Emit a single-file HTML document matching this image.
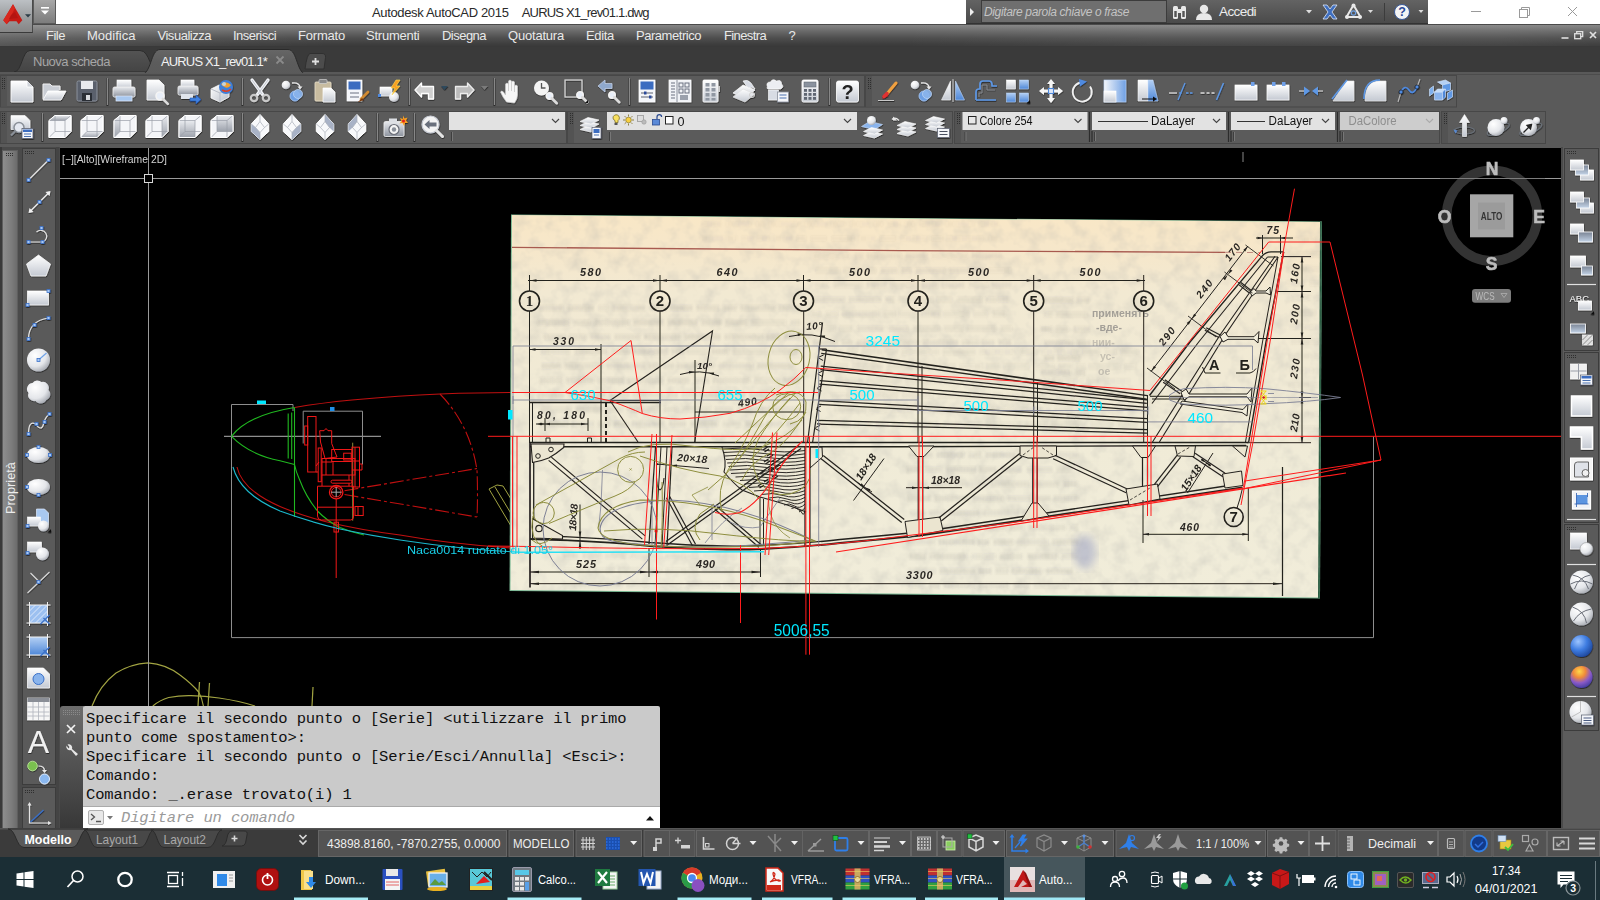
<!DOCTYPE html><html><head><meta charset="utf-8"><title>AutoCAD</title><style>html,body{margin:0;padding:0;background:#000}body{width:1600px;height:900px;position:relative;overflow:hidden;font-family:"Liberation Sans",sans-serif}svg{display:block}svg text{white-space:pre}</style></head><body>
<svg style="position:absolute;left:59px;top:147px" width="1502" height="681" viewBox="59 147 1502 681">
<rect x="59" y="147" width="1502" height="681" fill="#000"/>
<path d="M293 411 L293 404.5 L231.5 404.5 L231.5 637.6 L1373.5 637.6 L1373.5 436.5" fill="none" stroke="#8e8e8e" stroke-width="1" />
<path d="M224 436.3 L381 436.3" fill="none" stroke="#8e8e8e" stroke-width="1.2" />
<path d="M303.2 443.5 L303.2 411.2 L362.5 411.2 L362.5 464.5" fill="none" stroke="#8e8e8e" stroke-width="1" />
<path d="M1243 152 L1243 162" fill="none" stroke="#888" stroke-width="1" />
<path d="M294.500 407.500 Q320 403 352 400 Q400 395.500 440 394 Q480 392.500 512 392.500" fill="none" stroke="#c01010" stroke-width="1.1" />
<path d="M237 467 Q242 490 280 506.500 Q300 515 325 521.500 Q360 530 400 535 Q450 544 512 548" fill="none" stroke="#c01010" stroke-width="1.1" />
<path d="M440 394 Q470 425 477 470 Q478 495 477 517" fill="none" stroke="#c01010" stroke-width="1.1" stroke-dasharray="14 3 3 3"/>
<path d="M344.5 490.7 L477 468.5" fill="none" stroke="#c01010" stroke-width="1.1" stroke-dasharray="14 3 3 3"/>
<path d="M344.5 494.5 L477 517" fill="none" stroke="#c01010" stroke-width="1.1" stroke-dasharray="14 3 3 3"/>
<path d="M231.500 436.300 Q248 415 294.500 407.500 M231.500 436.300 Q250 455 280 460.700 L294.500 464.500" fill="none" stroke="#20b820" stroke-width="1.1" />
<path d="M288.2 413.5 L288.2 458.5" fill="none" stroke="#20b820" stroke-width="1.1" />
<path d="M291.7 412.5 L291.7 459" fill="none" stroke="#20b820" stroke-width="1.1" />
<path d="M294.5 407.5 L294.5 517" fill="none" stroke="#20b820" stroke-width="1.1" />
<path d="M294.500 464.500 Q296 472 299.500 479.500 Q306 497 317.500 511 Q327 521 340 527.500 Q352 532.500 364 535" fill="none" stroke="#20b820" stroke-width="1.1" />
<path d="M352.7 442.7 L352.7 520.7" fill="none" stroke="#8a8a38" stroke-width="1" />
<rect x="307.7" y="416.5" width="8.3" height="55.5" rx="0" fill="none" stroke="#f01818" stroke-width="1"/>
<rect x="304.7" y="426" width="3" height="19" rx="0" fill="none" stroke="#f01818" stroke-width="1"/>
<path d="M319.700 430.700 L324 430.700 L326 428.500 L328 430.700 L331.700 430.700 L331.700 443.500 L337 457 L325 458.500 L320.500 442Z" fill="none" stroke="#f01818" stroke-width="1" />
<rect x="318.2" y="448" width="3" height="33.7" rx="0" fill="none" stroke="#f01818" stroke-width="1"/>
<rect x="322" y="458.5" width="33" height="16.5" rx="0" fill="none" stroke="#f01818" stroke-width="1"/>
<rect x="331.7" y="449.5" width="20.3" height="12" rx="0" fill="none" stroke="#f01818" stroke-width="1"/>
<rect x="343.7" y="453.2" width="7.5" height="6.8" rx="0" fill="none" stroke="#f01818" stroke-width="1"/>
<rect x="352" y="447.2" width="7.5" height="39.8" rx="0" fill="none" stroke="#f01818" stroke-width="1"/>
<path d="M359.500 464 h2.500 v6 h-2.500 M355 447.200 v40 M352 461 h7.500 M352 470 h7.500" fill="none" stroke="#f01818" stroke-width="1" />
<path d="M316 466 l3 -4 M316 472 h2 M326 475 v-16 M333 475 v-14 M322 462 h10" fill="none" stroke="#f01818" stroke-width="1" />
<rect x="331" y="480.2" width="21" height="3" rx="1.5" fill="none" stroke="#f01818" stroke-width="1"/>
<path d="M322 475 v11 M349 475 v5 M349 483.200 v3" fill="none" stroke="#f01818" stroke-width="1" />
<path d="M317.500 486.200 H353.500 V517 Q353.500 520 350.500 520 H321.500 Q317.500 520 317.500 516Z" fill="none" stroke="#f01818" stroke-width="1" />
<path d="M317.5 507.2 L353.5 507.2" fill="none" stroke="#f01818" stroke-width="1" />
<circle cx="336.200" cy="492.200" r="6.700" fill="none" stroke="#f01818" stroke-width="1.300"/><circle cx="336.200" cy="492.200" r="4.800" fill="none" stroke="#f01818" stroke-width="1"/>
<path d="M331 492.200 h10.500 M336.200 487 v10" fill="none" stroke="#a8a8a8" stroke-width="1" />
<rect x="355" y="506.5" width="8.2" height="9" rx="0" fill="none" stroke="#f01818" stroke-width="1"/>
<path d="M358 506.500 v9" fill="none" stroke="#f01818" stroke-width="1" />
<rect x="334" y="522.2" width="4.5" height="9.8" rx="0" fill="none" stroke="#f01818" stroke-width="1"/>
<path d="M336.2 499 L336.2 578" fill="none" stroke="#f01818" stroke-width="1" />
<rect x="257" y="400.500" width="9" height="3.500" fill="#00e8ff"/><rect x="330" y="407" width="4.500" height="4" fill="#2090e8"/>
<path d="M495 487 L530 545 M489 489 L497 485 L503 486 L535 538 M489 489 L524 548" fill="none" stroke="#a2a442" stroke-width="1" />
<path d="M522 520 Q512 530 520 542" fill="none" stroke="#a2a442" stroke-width="1" />
<path d="M92 706 Q100 685 116 673 Q130 664 148 662.800 Q166 664 180 675 Q192 684 198.700 692 Q202 698 203.400 706" fill="none" stroke="#a2a442" stroke-width="1.2" />
<path d="M152.800 706 Q160 700 168.700 697.500 Q180 695.300 191 695.600 Q205 696 219 698 Q240 701 255 706" fill="none" stroke="#a2a442" stroke-width="1.2" />
<path d="M199.5 682 L198 706" fill="none" stroke="#a2a442" stroke-width="1.2" />
<path d="M209.5 683 L208 706" fill="none" stroke="#a2a442" stroke-width="1.2" />
<path d="M313 687 L312 706" fill="none" stroke="#a2a442" stroke-width="1.2" />
<defs><linearGradient id="paper" x1="0" y1="0" x2="0" y2="1"><stop offset="0" stop-color="#f9e7c6"/><stop offset=".09" stop-color="#f6e7ca"/><stop offset=".2" stop-color="#f2e9d2"/><stop offset=".6" stop-color="#f0ebd7"/><stop offset="1" stop-color="#f1edda"/></linearGradient><filter id="blur2"><feGaussianBlur stdDeviation="0.8"/></filter><filter id="soft" x="0" y="0" width="100%" height="100%" filterUnits="userSpaceOnUse"><feGaussianBlur stdDeviation="0.38"/></filter><filter id="mottle" x="510" y="214" width="812" height="386" filterUnits="userSpaceOnUse"><feTurbulence type="fractalNoise" baseFrequency="0.07" numOctaves="3" seed="7"/><feColorMatrix type="matrix" values="0 0 0 0 0.42  0 0 0 0 0.42  0 0 0 0 0.40  0.55 0 0 0 -0.225"/></filter><filter id="blur1"><feGaussianBlur stdDeviation="0.5"/></filter><filter id="blur5"><feGaussianBlur stdDeviation="4"/></filter><clipPath id="scanclip"><path d="M512 215 L1321.500 222 L1319.500 598 L510 590.500Z"/></clipPath></defs>
<path d="M511 214.500 L1322 221.500 L1320 598.500 L509.500 591Z" fill="#7ab894"/>
<path d="M512 215 L1321 222 L1319 597.500 L510.500 590Z" fill="url(#paper)"/>
<path d="M1320 221.800 L1321.800 221.800 L1319.800 598.300 L1318 598.300Z" fill="#2a5c42"/>
<g clip-path="url(#scanclip)">
<rect x="510" y="214" width="812" height="386" filter="url(#mottle)"/>
<g filter="url(#blur2)"><path d="M539 308.0 h24" stroke="#55555e" stroke-width="5.500" stroke-dasharray="2 1.300" opacity="0.11"/><path d="M568 308.0 h26" stroke="#55555e" stroke-width="5.500" stroke-dasharray="2 1.300" opacity="0.13"/><path d="M599 308.0 h10" stroke="#55555e" stroke-width="5.500" stroke-dasharray="2 1.300" opacity="0.08"/><path d="M613 308.0 h33" stroke="#55555e" stroke-width="5.500" stroke-dasharray="2 1.300" opacity="0.10"/><path d="M651 308.0 h15" stroke="#55555e" stroke-width="5.500" stroke-dasharray="2 1.300" opacity="0.16"/><path d="M670 308.0 h22" stroke="#55555e" stroke-width="5.500" stroke-dasharray="2 1.300" opacity="0.14"/><path d="M697 308.0 h22" stroke="#55555e" stroke-width="5.500" stroke-dasharray="2 1.300" opacity="0.13"/><path d="M724 308.0 h13" stroke="#55555e" stroke-width="5.500" stroke-dasharray="2 1.300" opacity="0.13"/><path d="M741 308.0 h34" stroke="#55555e" stroke-width="5.500" stroke-dasharray="2 1.300" opacity="0.12"/><path d="M779 308.0 h21" stroke="#55555e" stroke-width="5.500" stroke-dasharray="2 1.300" opacity="0.13"/><path d="M538 322.5 h31" stroke="#55555e" stroke-width="5.500" stroke-dasharray="2 1.300" opacity="0.13"/><path d="M574 322.5 h17" stroke="#55555e" stroke-width="5.500" stroke-dasharray="2 1.300" opacity="0.09"/><path d="M595 322.5 h34" stroke="#55555e" stroke-width="5.500" stroke-dasharray="2 1.300" opacity="0.12"/><path d="M634 322.5 h30" stroke="#55555e" stroke-width="5.500" stroke-dasharray="2 1.300" opacity="0.15"/><path d="M668 322.5 h29" stroke="#55555e" stroke-width="5.500" stroke-dasharray="2 1.300" opacity="0.15"/><path d="M702 322.5 h20" stroke="#55555e" stroke-width="5.500" stroke-dasharray="2 1.300" opacity="0.14"/><path d="M726 322.5 h21" stroke="#55555e" stroke-width="5.500" stroke-dasharray="2 1.300" opacity="0.15"/><path d="M752 322.5 h34" stroke="#55555e" stroke-width="5.500" stroke-dasharray="2 1.300" opacity="0.09"/><path d="M791 322.5 h9" stroke="#55555e" stroke-width="5.500" stroke-dasharray="2 1.300" opacity="0.10"/><path d="M544 337.0 h21" stroke="#55555e" stroke-width="5.500" stroke-dasharray="2 1.300" opacity="0.13"/><path d="M569 337.0 h17" stroke="#55555e" stroke-width="5.500" stroke-dasharray="2 1.300" opacity="0.12"/><path d="M591 337.0 h20" stroke="#55555e" stroke-width="5.500" stroke-dasharray="2 1.300" opacity="0.11"/><path d="M615 337.0 h26" stroke="#55555e" stroke-width="5.500" stroke-dasharray="2 1.300" opacity="0.13"/><path d="M645 337.0 h35" stroke="#55555e" stroke-width="5.500" stroke-dasharray="2 1.300" opacity="0.13"/><path d="M685 337.0 h36" stroke="#55555e" stroke-width="5.500" stroke-dasharray="2 1.300" opacity="0.15"/><path d="M725 337.0 h38" stroke="#55555e" stroke-width="5.500" stroke-dasharray="2 1.300" opacity="0.13"/><path d="M767 337.0 h13" stroke="#55555e" stroke-width="5.500" stroke-dasharray="2 1.300" opacity="0.15"/><path d="M785 337.0 h15" stroke="#55555e" stroke-width="5.500" stroke-dasharray="2 1.300" opacity="0.15"/><path d="M541 351.5 h29" stroke="#55555e" stroke-width="5.500" stroke-dasharray="2 1.300" opacity="0.10"/><path d="M575 351.5 h33" stroke="#55555e" stroke-width="5.500" stroke-dasharray="2 1.300" opacity="0.13"/><path d="M613 351.5 h17" stroke="#55555e" stroke-width="5.500" stroke-dasharray="2 1.300" opacity="0.09"/><path d="M634 351.5 h34" stroke="#55555e" stroke-width="5.500" stroke-dasharray="2 1.300" opacity="0.16"/><path d="M672 351.5 h11" stroke="#55555e" stroke-width="5.500" stroke-dasharray="2 1.300" opacity="0.14"/><path d="M687 351.5 h20" stroke="#55555e" stroke-width="5.500" stroke-dasharray="2 1.300" opacity="0.09"/><path d="M712 351.5 h17" stroke="#55555e" stroke-width="5.500" stroke-dasharray="2 1.300" opacity="0.14"/><path d="M733 351.5 h34" stroke="#55555e" stroke-width="5.500" stroke-dasharray="2 1.300" opacity="0.09"/><path d="M772 351.5 h26" stroke="#55555e" stroke-width="5.500" stroke-dasharray="2 1.300" opacity="0.09"/><path d="M542 366.0 h18" stroke="#55555e" stroke-width="5.500" stroke-dasharray="2 1.300" opacity="0.15"/><path d="M565 366.0 h37" stroke="#55555e" stroke-width="5.500" stroke-dasharray="2 1.300" opacity="0.12"/><path d="M607 366.0 h38" stroke="#55555e" stroke-width="5.500" stroke-dasharray="2 1.300" opacity="0.11"/><path d="M649 366.0 h10" stroke="#55555e" stroke-width="5.500" stroke-dasharray="2 1.300" opacity="0.13"/><path d="M664 366.0 h9" stroke="#55555e" stroke-width="5.500" stroke-dasharray="2 1.300" opacity="0.10"/><path d="M677 366.0 h20" stroke="#55555e" stroke-width="5.500" stroke-dasharray="2 1.300" opacity="0.13"/><path d="M702 366.0 h13" stroke="#55555e" stroke-width="5.500" stroke-dasharray="2 1.300" opacity="0.09"/><path d="M719 366.0 h34" stroke="#55555e" stroke-width="5.500" stroke-dasharray="2 1.300" opacity="0.11"/><path d="M758 366.0 h37" stroke="#55555e" stroke-width="5.500" stroke-dasharray="2 1.300" opacity="0.15"/><path d="M540 380.5 h22" stroke="#55555e" stroke-width="5.500" stroke-dasharray="2 1.300" opacity="0.12"/><path d="M567 380.5 h27" stroke="#55555e" stroke-width="5.500" stroke-dasharray="2 1.300" opacity="0.13"/><path d="M598 380.5 h25" stroke="#55555e" stroke-width="5.500" stroke-dasharray="2 1.300" opacity="0.13"/><path d="M628 380.5 h36" stroke="#55555e" stroke-width="5.500" stroke-dasharray="2 1.300" opacity="0.12"/><path d="M668 380.5 h21" stroke="#55555e" stroke-width="5.500" stroke-dasharray="2 1.300" opacity="0.14"/><path d="M694 380.5 h15" stroke="#55555e" stroke-width="5.500" stroke-dasharray="2 1.300" opacity="0.11"/><path d="M713 380.5 h37" stroke="#55555e" stroke-width="5.500" stroke-dasharray="2 1.300" opacity="0.12"/><path d="M755 380.5 h24" stroke="#55555e" stroke-width="5.500" stroke-dasharray="2 1.300" opacity="0.08"/><path d="M784 380.5 h16" stroke="#55555e" stroke-width="5.500" stroke-dasharray="2 1.300" opacity="0.13"/><path d="M538 395.0 h26" stroke="#55555e" stroke-width="5.500" stroke-dasharray="2 1.300" opacity="0.13"/><path d="M569 395.0 h10" stroke="#55555e" stroke-width="5.500" stroke-dasharray="2 1.300" opacity="0.13"/><path d="M583 395.0 h22" stroke="#55555e" stroke-width="5.500" stroke-dasharray="2 1.300" opacity="0.13"/><path d="M610 395.0 h19" stroke="#55555e" stroke-width="5.500" stroke-dasharray="2 1.300" opacity="0.13"/><path d="M633 395.0 h30" stroke="#55555e" stroke-width="5.500" stroke-dasharray="2 1.300" opacity="0.09"/><path d="M668 395.0 h10" stroke="#55555e" stroke-width="5.500" stroke-dasharray="2 1.300" opacity="0.13"/><path d="M682 395.0 h37" stroke="#55555e" stroke-width="5.500" stroke-dasharray="2 1.300" opacity="0.10"/><path d="M723 395.0 h22" stroke="#55555e" stroke-width="5.500" stroke-dasharray="2 1.300" opacity="0.13"/><path d="M750 395.0 h18" stroke="#55555e" stroke-width="5.500" stroke-dasharray="2 1.300" opacity="0.11"/><path d="M772 395.0 h17" stroke="#55555e" stroke-width="5.500" stroke-dasharray="2 1.300" opacity="0.11"/><path d="M793 395.0 h7" stroke="#55555e" stroke-width="5.500" stroke-dasharray="2 1.300" opacity="0.11"/><path d="M540 409.5 h31" stroke="#55555e" stroke-width="5.500" stroke-dasharray="2 1.300" opacity="0.09"/><path d="M576 409.5 h25" stroke="#55555e" stroke-width="5.500" stroke-dasharray="2 1.300" opacity="0.14"/><path d="M606 409.5 h17" stroke="#55555e" stroke-width="5.500" stroke-dasharray="2 1.300" opacity="0.10"/><path d="M627 409.5 h32" stroke="#55555e" stroke-width="5.500" stroke-dasharray="2 1.300" opacity="0.10"/><path d="M664 409.5 h14" stroke="#55555e" stroke-width="5.500" stroke-dasharray="2 1.300" opacity="0.12"/><path d="M682 409.5 h29" stroke="#55555e" stroke-width="5.500" stroke-dasharray="2 1.300" opacity="0.09"/><path d="M715 409.5 h18" stroke="#55555e" stroke-width="5.500" stroke-dasharray="2 1.300" opacity="0.11"/><path d="M738 409.5 h33" stroke="#55555e" stroke-width="5.500" stroke-dasharray="2 1.300" opacity="0.12"/><path d="M775 409.5 h25" stroke="#55555e" stroke-width="5.500" stroke-dasharray="2 1.300" opacity="0.10"/><path d="M540 424.0 h28" stroke="#55555e" stroke-width="5.500" stroke-dasharray="2 1.300" opacity="0.15"/><path d="M572 424.0 h22" stroke="#55555e" stroke-width="5.500" stroke-dasharray="2 1.300" opacity="0.10"/><path d="M598 424.0 h12" stroke="#55555e" stroke-width="5.500" stroke-dasharray="2 1.300" opacity="0.12"/><path d="M614 424.0 h14" stroke="#55555e" stroke-width="5.500" stroke-dasharray="2 1.300" opacity="0.14"/><path d="M632 424.0 h33" stroke="#55555e" stroke-width="5.500" stroke-dasharray="2 1.300" opacity="0.10"/><path d="M670 424.0 h16" stroke="#55555e" stroke-width="5.500" stroke-dasharray="2 1.300" opacity="0.14"/><path d="M691 424.0 h27" stroke="#55555e" stroke-width="5.500" stroke-dasharray="2 1.300" opacity="0.14"/><path d="M723 424.0 h18" stroke="#55555e" stroke-width="5.500" stroke-dasharray="2 1.300" opacity="0.09"/><path d="M746 424.0 h17" stroke="#55555e" stroke-width="5.500" stroke-dasharray="2 1.300" opacity="0.14"/><path d="M767 424.0 h16" stroke="#55555e" stroke-width="5.500" stroke-dasharray="2 1.300" opacity="0.11"/><path d="M787 424.0 h13" stroke="#55555e" stroke-width="5.500" stroke-dasharray="2 1.300" opacity="0.11"/><path d="M814 256.0 h36" stroke="#55555e" stroke-width="5.500" stroke-dasharray="2 1.300" opacity="0.07"/><path d="M855 256.0 h8" stroke="#55555e" stroke-width="5.500" stroke-dasharray="2 1.300" opacity="0.11"/><path d="M867 256.0 h34" stroke="#55555e" stroke-width="5.500" stroke-dasharray="2 1.300" opacity="0.12"/><path d="M906 256.0 h21" stroke="#55555e" stroke-width="5.500" stroke-dasharray="2 1.300" opacity="0.11"/><path d="M932 256.0 h36" stroke="#55555e" stroke-width="5.500" stroke-dasharray="2 1.300" opacity="0.07"/><path d="M972 256.0 h30" stroke="#55555e" stroke-width="5.500" stroke-dasharray="2 1.300" opacity="0.11"/><path d="M816 270.5 h24" stroke="#55555e" stroke-width="5.500" stroke-dasharray="2 1.300" opacity="0.08"/><path d="M844 270.5 h18" stroke="#55555e" stroke-width="5.500" stroke-dasharray="2 1.300" opacity="0.08"/><path d="M867 270.5 h10" stroke="#55555e" stroke-width="5.500" stroke-dasharray="2 1.300" opacity="0.09"/><path d="M881 270.5 h17" stroke="#55555e" stroke-width="5.500" stroke-dasharray="2 1.300" opacity="0.11"/><path d="M902 270.5 h9" stroke="#55555e" stroke-width="5.500" stroke-dasharray="2 1.300" opacity="0.11"/><path d="M916 270.5 h29" stroke="#55555e" stroke-width="5.500" stroke-dasharray="2 1.300" opacity="0.11"/><path d="M950 270.5 h35" stroke="#55555e" stroke-width="5.500" stroke-dasharray="2 1.300" opacity="0.11"/><path d="M989 270.5 h23" stroke="#55555e" stroke-width="5.500" stroke-dasharray="2 1.300" opacity="0.06"/><path d="M816 285.0 h13" stroke="#55555e" stroke-width="5.500" stroke-dasharray="2 1.300" opacity="0.08"/><path d="M834 285.0 h28" stroke="#55555e" stroke-width="5.500" stroke-dasharray="2 1.300" opacity="0.09"/><path d="M867 285.0 h20" stroke="#55555e" stroke-width="5.500" stroke-dasharray="2 1.300" opacity="0.11"/><path d="M891 285.0 h26" stroke="#55555e" stroke-width="5.500" stroke-dasharray="2 1.300" opacity="0.08"/><path d="M922 285.0 h16" stroke="#55555e" stroke-width="5.500" stroke-dasharray="2 1.300" opacity="0.11"/><path d="M942 285.0 h22" stroke="#55555e" stroke-width="5.500" stroke-dasharray="2 1.300" opacity="0.11"/><path d="M969 285.0 h19" stroke="#55555e" stroke-width="5.500" stroke-dasharray="2 1.300" opacity="0.07"/><path d="M992 285.0 h20" stroke="#55555e" stroke-width="5.500" stroke-dasharray="2 1.300" opacity="0.11"/><path d="M813 299.5 h32" stroke="#55555e" stroke-width="5.500" stroke-dasharray="2 1.300" opacity="0.11"/><path d="M849 299.5 h32" stroke="#55555e" stroke-width="5.500" stroke-dasharray="2 1.300" opacity="0.11"/><path d="M886 299.5 h8" stroke="#55555e" stroke-width="5.500" stroke-dasharray="2 1.300" opacity="0.10"/><path d="M899 299.5 h34" stroke="#55555e" stroke-width="5.500" stroke-dasharray="2 1.300" opacity="0.07"/><path d="M937 299.5 h16" stroke="#55555e" stroke-width="5.500" stroke-dasharray="2 1.300" opacity="0.08"/><path d="M958 299.5 h24" stroke="#55555e" stroke-width="5.500" stroke-dasharray="2 1.300" opacity="0.09"/><path d="M986 299.5 h22" stroke="#55555e" stroke-width="5.500" stroke-dasharray="2 1.300" opacity="0.10"/><path d="M812 314.0 h10" stroke="#55555e" stroke-width="5.500" stroke-dasharray="2 1.300" opacity="0.07"/><path d="M826 314.0 h12" stroke="#55555e" stroke-width="5.500" stroke-dasharray="2 1.300" opacity="0.07"/><path d="M842 314.0 h37" stroke="#55555e" stroke-width="5.500" stroke-dasharray="2 1.300" opacity="0.11"/><path d="M884 314.0 h11" stroke="#55555e" stroke-width="5.500" stroke-dasharray="2 1.300" opacity="0.09"/><path d="M899 314.0 h17" stroke="#55555e" stroke-width="5.500" stroke-dasharray="2 1.300" opacity="0.08"/><path d="M921 314.0 h19" stroke="#55555e" stroke-width="5.500" stroke-dasharray="2 1.300" opacity="0.10"/><path d="M944 314.0 h26" stroke="#55555e" stroke-width="5.500" stroke-dasharray="2 1.300" opacity="0.08"/><path d="M974 314.0 h14" stroke="#55555e" stroke-width="5.500" stroke-dasharray="2 1.300" opacity="0.08"/><path d="M993 314.0 h12" stroke="#55555e" stroke-width="5.500" stroke-dasharray="2 1.300" opacity="0.09"/><path d="M816 328.5 h19" stroke="#55555e" stroke-width="5.500" stroke-dasharray="2 1.300" opacity="0.07"/><path d="M840 328.5 h13" stroke="#55555e" stroke-width="5.500" stroke-dasharray="2 1.300" opacity="0.08"/><path d="M858 328.5 h26" stroke="#55555e" stroke-width="5.500" stroke-dasharray="2 1.300" opacity="0.11"/><path d="M889 328.5 h19" stroke="#55555e" stroke-width="5.500" stroke-dasharray="2 1.300" opacity="0.11"/><path d="M913 328.5 h27" stroke="#55555e" stroke-width="5.500" stroke-dasharray="2 1.300" opacity="0.09"/><path d="M944 328.5 h19" stroke="#55555e" stroke-width="5.500" stroke-dasharray="2 1.300" opacity="0.09"/><path d="M967 328.5 h29" stroke="#55555e" stroke-width="5.500" stroke-dasharray="2 1.300" opacity="0.09"/><path d="M1001 328.5 h11" stroke="#55555e" stroke-width="5.500" stroke-dasharray="2 1.300" opacity="0.09"/><path d="M813 343.0 h24" stroke="#55555e" stroke-width="5.500" stroke-dasharray="2 1.300" opacity="0.10"/><path d="M842 343.0 h10" stroke="#55555e" stroke-width="5.500" stroke-dasharray="2 1.300" opacity="0.09"/><path d="M857 343.0 h21" stroke="#55555e" stroke-width="5.500" stroke-dasharray="2 1.300" opacity="0.11"/><path d="M882 343.0 h36" stroke="#55555e" stroke-width="5.500" stroke-dasharray="2 1.300" opacity="0.08"/><path d="M923 343.0 h35" stroke="#55555e" stroke-width="5.500" stroke-dasharray="2 1.300" opacity="0.11"/><path d="M962 343.0 h16" stroke="#55555e" stroke-width="5.500" stroke-dasharray="2 1.300" opacity="0.09"/><path d="M982 343.0 h12" stroke="#55555e" stroke-width="5.500" stroke-dasharray="2 1.300" opacity="0.11"/><path d="M999 343.0 h13" stroke="#55555e" stroke-width="5.500" stroke-dasharray="2 1.300" opacity="0.11"/><path d="M1045 300.0 h28" stroke="#55555e" stroke-width="5.500" stroke-dasharray="2 1.300" opacity="0.15"/><path d="M1077 300.0 h13" stroke="#55555e" stroke-width="5.500" stroke-dasharray="2 1.300" opacity="0.10"/><path d="M1044 314.5 h8" stroke="#55555e" stroke-width="5.500" stroke-dasharray="2 1.300" opacity="0.10"/><path d="M1056 314.5 h31" stroke="#55555e" stroke-width="5.500" stroke-dasharray="2 1.300" opacity="0.09"/><path d="M1041 329.0 h11" stroke="#55555e" stroke-width="5.500" stroke-dasharray="2 1.300" opacity="0.16"/><path d="M1056 329.0 h13" stroke="#55555e" stroke-width="5.500" stroke-dasharray="2 1.300" opacity="0.09"/><path d="M1074 329.0 h16" stroke="#55555e" stroke-width="5.500" stroke-dasharray="2 1.300" opacity="0.10"/><path d="M1045 343.5 h28" stroke="#55555e" stroke-width="5.500" stroke-dasharray="2 1.300" opacity="0.16"/><path d="M1078 343.5 h12" stroke="#55555e" stroke-width="5.500" stroke-dasharray="2 1.300" opacity="0.14"/><path d="M1045 358.0 h9" stroke="#55555e" stroke-width="5.500" stroke-dasharray="2 1.300" opacity="0.15"/><path d="M1058 358.0 h23" stroke="#55555e" stroke-width="5.500" stroke-dasharray="2 1.300" opacity="0.15"/><path d="M1041 372.5 h30" stroke="#55555e" stroke-width="5.500" stroke-dasharray="2 1.300" opacity="0.16"/><path d="M1076 372.5 h10" stroke="#55555e" stroke-width="5.500" stroke-dasharray="2 1.300" opacity="0.12"/><path d="M1043 387.0 h33" stroke="#55555e" stroke-width="5.500" stroke-dasharray="2 1.300" opacity="0.11"/><path d="M1081 387.0 h9" stroke="#55555e" stroke-width="5.500" stroke-dasharray="2 1.300" opacity="0.11"/><path d="M1044 401.5 h31" stroke="#55555e" stroke-width="5.500" stroke-dasharray="2 1.300" opacity="0.12"/><path d="M1079 401.5 h11" stroke="#55555e" stroke-width="5.500" stroke-dasharray="2 1.300" opacity="0.12"/><path d="M1042 416.0 h21" stroke="#55555e" stroke-width="5.500" stroke-dasharray="2 1.300" opacity="0.10"/><path d="M1067 416.0 h23" stroke="#55555e" stroke-width="5.500" stroke-dasharray="2 1.300" opacity="0.17"/><path d="M1042 430.5 h30" stroke="#55555e" stroke-width="5.500" stroke-dasharray="2 1.300" opacity="0.10"/><path d="M1077 430.5 h13" stroke="#55555e" stroke-width="5.500" stroke-dasharray="2 1.300" opacity="0.15"/><path d="M909 455.0 h24" stroke="#55555e" stroke-width="5.500" stroke-dasharray="2 1.300" opacity="0.13"/><path d="M937 455.0 h27" stroke="#55555e" stroke-width="5.500" stroke-dasharray="2 1.300" opacity="0.16"/><path d="M969 455.0 h12" stroke="#55555e" stroke-width="5.500" stroke-dasharray="2 1.300" opacity="0.10"/><path d="M986 455.0 h30" stroke="#55555e" stroke-width="5.500" stroke-dasharray="2 1.300" opacity="0.16"/><path d="M1021 455.0 h24" stroke="#55555e" stroke-width="5.500" stroke-dasharray="2 1.300" opacity="0.13"/><path d="M1049 455.0 h29" stroke="#55555e" stroke-width="5.500" stroke-dasharray="2 1.300" opacity="0.11"/><path d="M907 469.5 h14" stroke="#55555e" stroke-width="5.500" stroke-dasharray="2 1.300" opacity="0.14"/><path d="M925 469.5 h17" stroke="#55555e" stroke-width="5.500" stroke-dasharray="2 1.300" opacity="0.11"/><path d="M947 469.5 h29" stroke="#55555e" stroke-width="5.500" stroke-dasharray="2 1.300" opacity="0.17"/><path d="M980 469.5 h17" stroke="#55555e" stroke-width="5.500" stroke-dasharray="2 1.300" opacity="0.15"/><path d="M1002 469.5 h20" stroke="#55555e" stroke-width="5.500" stroke-dasharray="2 1.300" opacity="0.16"/><path d="M1027 469.5 h26" stroke="#55555e" stroke-width="5.500" stroke-dasharray="2 1.300" opacity="0.11"/><path d="M1057 469.5 h15" stroke="#55555e" stroke-width="5.500" stroke-dasharray="2 1.300" opacity="0.09"/><path d="M908 484.0 h19" stroke="#55555e" stroke-width="5.500" stroke-dasharray="2 1.300" opacity="0.10"/><path d="M932 484.0 h19" stroke="#55555e" stroke-width="5.500" stroke-dasharray="2 1.300" opacity="0.12"/><path d="M955 484.0 h31" stroke="#55555e" stroke-width="5.500" stroke-dasharray="2 1.300" opacity="0.10"/><path d="M991 484.0 h38" stroke="#55555e" stroke-width="5.500" stroke-dasharray="2 1.300" opacity="0.13"/><path d="M1033 484.0 h26" stroke="#55555e" stroke-width="5.500" stroke-dasharray="2 1.300" opacity="0.13"/><path d="M1064 484.0 h14" stroke="#55555e" stroke-width="5.500" stroke-dasharray="2 1.300" opacity="0.16"/><path d="M908 498.5 h22" stroke="#55555e" stroke-width="5.500" stroke-dasharray="2 1.300" opacity="0.15"/><path d="M935 498.5 h34" stroke="#55555e" stroke-width="5.500" stroke-dasharray="2 1.300" opacity="0.12"/><path d="M973 498.5 h30" stroke="#55555e" stroke-width="5.500" stroke-dasharray="2 1.300" opacity="0.17"/><path d="M1008 498.5 h22" stroke="#55555e" stroke-width="5.500" stroke-dasharray="2 1.300" opacity="0.11"/><path d="M1035 498.5 h15" stroke="#55555e" stroke-width="5.500" stroke-dasharray="2 1.300" opacity="0.15"/><path d="M1054 498.5 h24" stroke="#55555e" stroke-width="5.500" stroke-dasharray="2 1.300" opacity="0.17"/><path d="M910 513.0 h15" stroke="#55555e" stroke-width="5.500" stroke-dasharray="2 1.300" opacity="0.11"/><path d="M930 513.0 h16" stroke="#55555e" stroke-width="5.500" stroke-dasharray="2 1.300" opacity="0.11"/><path d="M950 513.0 h29" stroke="#55555e" stroke-width="5.500" stroke-dasharray="2 1.300" opacity="0.16"/><path d="M984 513.0 h35" stroke="#55555e" stroke-width="5.500" stroke-dasharray="2 1.300" opacity="0.11"/><path d="M1023 513.0 h34" stroke="#55555e" stroke-width="5.500" stroke-dasharray="2 1.300" opacity="0.12"/><path d="M1062 513.0 h16" stroke="#55555e" stroke-width="5.500" stroke-dasharray="2 1.300" opacity="0.15"/><path d="M906 527.5 h11" stroke="#55555e" stroke-width="5.500" stroke-dasharray="2 1.300" opacity="0.16"/><path d="M921 527.5 h17" stroke="#55555e" stroke-width="5.500" stroke-dasharray="2 1.300" opacity="0.12"/><path d="M942 527.5 h25" stroke="#55555e" stroke-width="5.500" stroke-dasharray="2 1.300" opacity="0.14"/><path d="M972 527.5 h8" stroke="#55555e" stroke-width="5.500" stroke-dasharray="2 1.300" opacity="0.12"/><path d="M985 527.5 h21" stroke="#55555e" stroke-width="5.500" stroke-dasharray="2 1.300" opacity="0.13"/><path d="M1010 527.5 h14" stroke="#55555e" stroke-width="5.500" stroke-dasharray="2 1.300" opacity="0.14"/><path d="M1029 527.5 h37" stroke="#55555e" stroke-width="5.500" stroke-dasharray="2 1.300" opacity="0.12"/><path d="M1070 527.5 h8" stroke="#55555e" stroke-width="5.500" stroke-dasharray="2 1.300" opacity="0.10"/><path d="M907 542.0 h28" stroke="#55555e" stroke-width="5.500" stroke-dasharray="2 1.300" opacity="0.10"/><path d="M939 542.0 h35" stroke="#55555e" stroke-width="5.500" stroke-dasharray="2 1.300" opacity="0.16"/><path d="M978 542.0 h11" stroke="#55555e" stroke-width="5.500" stroke-dasharray="2 1.300" opacity="0.16"/><path d="M994 542.0 h19" stroke="#55555e" stroke-width="5.500" stroke-dasharray="2 1.300" opacity="0.15"/><path d="M1017 542.0 h31" stroke="#55555e" stroke-width="5.500" stroke-dasharray="2 1.300" opacity="0.11"/><path d="M1053 542.0 h25" stroke="#55555e" stroke-width="5.500" stroke-dasharray="2 1.300" opacity="0.14"/><path d="M910 556.5 h16" stroke="#55555e" stroke-width="5.500" stroke-dasharray="2 1.300" opacity="0.15"/><path d="M930 556.5 h37" stroke="#55555e" stroke-width="5.500" stroke-dasharray="2 1.300" opacity="0.14"/><path d="M972 556.5 h24" stroke="#55555e" stroke-width="5.500" stroke-dasharray="2 1.300" opacity="0.10"/><path d="M1000 556.5 h23" stroke="#55555e" stroke-width="5.500" stroke-dasharray="2 1.300" opacity="0.12"/><path d="M1028 556.5 h30" stroke="#55555e" stroke-width="5.500" stroke-dasharray="2 1.300" opacity="0.14"/><path d="M1062 556.5 h16" stroke="#55555e" stroke-width="5.500" stroke-dasharray="2 1.300" opacity="0.11"/><path d="M909 571.0 h27" stroke="#55555e" stroke-width="5.500" stroke-dasharray="2 1.300" opacity="0.10"/><path d="M940 571.0 h35" stroke="#55555e" stroke-width="5.500" stroke-dasharray="2 1.300" opacity="0.14"/><path d="M979 571.0 h12" stroke="#55555e" stroke-width="5.500" stroke-dasharray="2 1.300" opacity="0.16"/><path d="M996 571.0 h12" stroke="#55555e" stroke-width="5.500" stroke-dasharray="2 1.300" opacity="0.12"/><path d="M1012 571.0 h30" stroke="#55555e" stroke-width="5.500" stroke-dasharray="2 1.300" opacity="0.14"/><path d="M1047 571.0 h25" stroke="#55555e" stroke-width="5.500" stroke-dasharray="2 1.300" opacity="0.14"/><path d="M908 585.5 h17" stroke="#55555e" stroke-width="5.500" stroke-dasharray="2 1.300" opacity="0.10"/><path d="M930 585.5 h10" stroke="#55555e" stroke-width="5.500" stroke-dasharray="2 1.300" opacity="0.15"/><path d="M944 585.5 h31" stroke="#55555e" stroke-width="5.500" stroke-dasharray="2 1.300" opacity="0.13"/><path d="M979 585.5 h30" stroke="#55555e" stroke-width="5.500" stroke-dasharray="2 1.300" opacity="0.12"/><path d="M1014 585.5 h16" stroke="#55555e" stroke-width="5.500" stroke-dasharray="2 1.300" opacity="0.12"/><path d="M1034 585.5 h34" stroke="#55555e" stroke-width="5.500" stroke-dasharray="2 1.300" opacity="0.09"/><path d="M563 556.0 h15" stroke="#55555e" stroke-width="5.500" stroke-dasharray="2 1.300" opacity="0.09"/><path d="M583 556.0 h19" stroke="#55555e" stroke-width="5.500" stroke-dasharray="2 1.300" opacity="0.07"/><path d="M606 556.0 h20" stroke="#55555e" stroke-width="5.500" stroke-dasharray="2 1.300" opacity="0.08"/><path d="M631 556.0 h31" stroke="#55555e" stroke-width="5.500" stroke-dasharray="2 1.300" opacity="0.07"/><path d="M666 556.0 h33" stroke="#55555e" stroke-width="5.500" stroke-dasharray="2 1.300" opacity="0.06"/><path d="M704 556.0 h16" stroke="#55555e" stroke-width="5.500" stroke-dasharray="2 1.300" opacity="0.06"/><path d="M725 556.0 h11" stroke="#55555e" stroke-width="5.500" stroke-dasharray="2 1.300" opacity="0.09"/><path d="M741 556.0 h30" stroke="#55555e" stroke-width="5.500" stroke-dasharray="2 1.300" opacity="0.06"/><path d="M775 556.0 h14" stroke="#55555e" stroke-width="5.500" stroke-dasharray="2 1.300" opacity="0.08"/><path d="M793 556.0 h7" stroke="#55555e" stroke-width="5.500" stroke-dasharray="2 1.300" opacity="0.10"/><path d="M564 570.5 h26" stroke="#55555e" stroke-width="5.500" stroke-dasharray="2 1.300" opacity="0.06"/><path d="M595 570.5 h20" stroke="#55555e" stroke-width="5.500" stroke-dasharray="2 1.300" opacity="0.07"/><path d="M619 570.5 h24" stroke="#55555e" stroke-width="5.500" stroke-dasharray="2 1.300" opacity="0.08"/><path d="M648 570.5 h14" stroke="#55555e" stroke-width="5.500" stroke-dasharray="2 1.300" opacity="0.07"/><path d="M666 570.5 h31" stroke="#55555e" stroke-width="5.500" stroke-dasharray="2 1.300" opacity="0.06"/><path d="M702 570.5 h32" stroke="#55555e" stroke-width="5.500" stroke-dasharray="2 1.300" opacity="0.10"/><path d="M739 570.5 h36" stroke="#55555e" stroke-width="5.500" stroke-dasharray="2 1.300" opacity="0.07"/><path d="M780 570.5 h20" stroke="#55555e" stroke-width="5.500" stroke-dasharray="2 1.300" opacity="0.08"/><path d="M564 585.0 h37" stroke="#55555e" stroke-width="5.500" stroke-dasharray="2 1.300" opacity="0.09"/><path d="M606 585.0 h17" stroke="#55555e" stroke-width="5.500" stroke-dasharray="2 1.300" opacity="0.10"/><path d="M627 585.0 h23" stroke="#55555e" stroke-width="5.500" stroke-dasharray="2 1.300" opacity="0.08"/><path d="M654 585.0 h30" stroke="#55555e" stroke-width="5.500" stroke-dasharray="2 1.300" opacity="0.06"/><path d="M688 585.0 h31" stroke="#55555e" stroke-width="5.500" stroke-dasharray="2 1.300" opacity="0.09"/><path d="M724 585.0 h23" stroke="#55555e" stroke-width="5.500" stroke-dasharray="2 1.300" opacity="0.08"/><path d="M751 585.0 h22" stroke="#55555e" stroke-width="5.500" stroke-dasharray="2 1.300" opacity="0.07"/><path d="M778 585.0 h22" stroke="#55555e" stroke-width="5.500" stroke-dasharray="2 1.300" opacity="0.06"/><path d="M1289 240.0 h27" stroke="#55555e" stroke-width="5.500" stroke-dasharray="2 1.300" opacity="0.06"/><path d="M1289 254.5 h31" stroke="#55555e" stroke-width="5.500" stroke-dasharray="2 1.300" opacity="0.07"/><path d="M1287 269.0 h32" stroke="#55555e" stroke-width="5.500" stroke-dasharray="2 1.300" opacity="0.06"/><path d="M1286 283.5 h19" stroke="#55555e" stroke-width="5.500" stroke-dasharray="2 1.300" opacity="0.05"/><path d="M1310 283.5 h10" stroke="#55555e" stroke-width="5.500" stroke-dasharray="2 1.300" opacity="0.06"/><path d="M1292 298.0 h18" stroke="#55555e" stroke-width="5.500" stroke-dasharray="2 1.300" opacity="0.07"/><path d="M1314 298.0 h6" stroke="#55555e" stroke-width="5.500" stroke-dasharray="2 1.300" opacity="0.05"/><path d="M1291 312.5 h26" stroke="#55555e" stroke-width="5.500" stroke-dasharray="2 1.300" opacity="0.08"/><path d="M1290 327.0 h30" stroke="#55555e" stroke-width="5.500" stroke-dasharray="2 1.300" opacity="0.05"/><path d="M1291 341.5 h29" stroke="#55555e" stroke-width="5.500" stroke-dasharray="2 1.300" opacity="0.07"/><path d="M1289 356.0 h31" stroke="#55555e" stroke-width="5.500" stroke-dasharray="2 1.300" opacity="0.06"/><path d="M1287 370.5 h9" stroke="#55555e" stroke-width="5.500" stroke-dasharray="2 1.300" opacity="0.04"/><path d="M1300 370.5 h14" stroke="#55555e" stroke-width="5.500" stroke-dasharray="2 1.300" opacity="0.05"/><path d="M1289 385.0 h29" stroke="#55555e" stroke-width="5.500" stroke-dasharray="2 1.300" opacity="0.06"/><path d="M1289 399.5 h27" stroke="#55555e" stroke-width="5.500" stroke-dasharray="2 1.300" opacity="0.05"/><path d="M1289 414.0 h31" stroke="#55555e" stroke-width="5.500" stroke-dasharray="2 1.300" opacity="0.06"/><path d="M1287 428.5 h33" stroke="#55555e" stroke-width="5.500" stroke-dasharray="2 1.300" opacity="0.07"/><path d="M702 224.0 h19" stroke="#55555e" stroke-width="5.500" stroke-dasharray="2 1.300" opacity="0.05"/><path d="M726 224.0 h26" stroke="#55555e" stroke-width="5.500" stroke-dasharray="2 1.300" opacity="0.04"/><path d="M756 224.0 h8" stroke="#55555e" stroke-width="5.500" stroke-dasharray="2 1.300" opacity="0.04"/><path d="M769 224.0 h31" stroke="#55555e" stroke-width="5.500" stroke-dasharray="2 1.300" opacity="0.04"/><path d="M805 224.0 h22" stroke="#55555e" stroke-width="5.500" stroke-dasharray="2 1.300" opacity="0.04"/><path d="M831 224.0 h14" stroke="#55555e" stroke-width="5.500" stroke-dasharray="2 1.300" opacity="0.04"/><path d="M850 224.0 h20" stroke="#55555e" stroke-width="5.500" stroke-dasharray="2 1.300" opacity="0.04"/><path d="M874 224.0 h9" stroke="#55555e" stroke-width="5.500" stroke-dasharray="2 1.300" opacity="0.04"/><path d="M888 224.0 h13" stroke="#55555e" stroke-width="5.500" stroke-dasharray="2 1.300" opacity="0.05"/><path d="M905 224.0 h10" stroke="#55555e" stroke-width="5.500" stroke-dasharray="2 1.300" opacity="0.04"/><path d="M920 224.0 h21" stroke="#55555e" stroke-width="5.500" stroke-dasharray="2 1.300" opacity="0.05"/><path d="M946 224.0 h29" stroke="#55555e" stroke-width="5.500" stroke-dasharray="2 1.300" opacity="0.04"/><path d="M979 224.0 h20" stroke="#55555e" stroke-width="5.500" stroke-dasharray="2 1.300" opacity="0.05"/><path d="M700 238.5 h37" stroke="#55555e" stroke-width="5.500" stroke-dasharray="2 1.300" opacity="0.04"/><path d="M742 238.5 h11" stroke="#55555e" stroke-width="5.500" stroke-dasharray="2 1.300" opacity="0.05"/><path d="M757 238.5 h13" stroke="#55555e" stroke-width="5.500" stroke-dasharray="2 1.300" opacity="0.05"/><path d="M774 238.5 h18" stroke="#55555e" stroke-width="5.500" stroke-dasharray="2 1.300" opacity="0.04"/><path d="M797 238.5 h10" stroke="#55555e" stroke-width="5.500" stroke-dasharray="2 1.300" opacity="0.06"/><path d="M811 238.5 h16" stroke="#55555e" stroke-width="5.500" stroke-dasharray="2 1.300" opacity="0.06"/><path d="M832 238.5 h22" stroke="#55555e" stroke-width="5.500" stroke-dasharray="2 1.300" opacity="0.06"/><path d="M859 238.5 h17" stroke="#55555e" stroke-width="5.500" stroke-dasharray="2 1.300" opacity="0.04"/><path d="M880 238.5 h16" stroke="#55555e" stroke-width="5.500" stroke-dasharray="2 1.300" opacity="0.06"/><path d="M901 238.5 h27" stroke="#55555e" stroke-width="5.500" stroke-dasharray="2 1.300" opacity="0.05"/><path d="M932 238.5 h11" stroke="#55555e" stroke-width="5.500" stroke-dasharray="2 1.300" opacity="0.06"/><path d="M947 238.5 h37" stroke="#55555e" stroke-width="5.500" stroke-dasharray="2 1.300" opacity="0.05"/><path d="M989 238.5 h8" stroke="#55555e" stroke-width="5.500" stroke-dasharray="2 1.300" opacity="0.04"/><path d="M831 352.0 h13" stroke="#55555e" stroke-width="5.500" stroke-dasharray="2 1.300" opacity="0.05"/><path d="M848 352.0 h10" stroke="#55555e" stroke-width="5.500" stroke-dasharray="2 1.300" opacity="0.08"/><path d="M862 352.0 h35" stroke="#55555e" stroke-width="5.500" stroke-dasharray="2 1.300" opacity="0.06"/><path d="M902 352.0 h37" stroke="#55555e" stroke-width="5.500" stroke-dasharray="2 1.300" opacity="0.07"/><path d="M943 352.0 h32" stroke="#55555e" stroke-width="5.500" stroke-dasharray="2 1.300" opacity="0.09"/><path d="M980 352.0 h36" stroke="#55555e" stroke-width="5.500" stroke-dasharray="2 1.300" opacity="0.05"/><path d="M1021 352.0 h17" stroke="#55555e" stroke-width="5.500" stroke-dasharray="2 1.300" opacity="0.07"/><path d="M1042 352.0 h36" stroke="#55555e" stroke-width="5.500" stroke-dasharray="2 1.300" opacity="0.05"/><path d="M1083 352.0 h17" stroke="#55555e" stroke-width="5.500" stroke-dasharray="2 1.300" opacity="0.08"/><path d="M1105 352.0 h11" stroke="#55555e" stroke-width="5.500" stroke-dasharray="2 1.300" opacity="0.07"/><path d="M1121 352.0 h18" stroke="#55555e" stroke-width="5.500" stroke-dasharray="2 1.300" opacity="0.08"/><path d="M836 366.5 h13" stroke="#55555e" stroke-width="5.500" stroke-dasharray="2 1.300" opacity="0.08"/><path d="M853 366.5 h30" stroke="#55555e" stroke-width="5.500" stroke-dasharray="2 1.300" opacity="0.08"/><path d="M888 366.5 h25" stroke="#55555e" stroke-width="5.500" stroke-dasharray="2 1.300" opacity="0.09"/><path d="M917 366.5 h19" stroke="#55555e" stroke-width="5.500" stroke-dasharray="2 1.300" opacity="0.07"/><path d="M940 366.5 h15" stroke="#55555e" stroke-width="5.500" stroke-dasharray="2 1.300" opacity="0.08"/><path d="M960 366.5 h22" stroke="#55555e" stroke-width="5.500" stroke-dasharray="2 1.300" opacity="0.06"/><path d="M987 366.5 h13" stroke="#55555e" stroke-width="5.500" stroke-dasharray="2 1.300" opacity="0.08"/><path d="M1004 366.5 h26" stroke="#55555e" stroke-width="5.500" stroke-dasharray="2 1.300" opacity="0.08"/><path d="M1035 366.5 h20" stroke="#55555e" stroke-width="5.500" stroke-dasharray="2 1.300" opacity="0.07"/><path d="M1059 366.5 h13" stroke="#55555e" stroke-width="5.500" stroke-dasharray="2 1.300" opacity="0.08"/><path d="M1076 366.5 h9" stroke="#55555e" stroke-width="5.500" stroke-dasharray="2 1.300" opacity="0.07"/><path d="M1089 366.5 h31" stroke="#55555e" stroke-width="5.500" stroke-dasharray="2 1.300" opacity="0.08"/><path d="M1125 366.5 h11" stroke="#55555e" stroke-width="5.500" stroke-dasharray="2 1.300" opacity="0.06"/><path d="M835 381.0 h27" stroke="#55555e" stroke-width="5.500" stroke-dasharray="2 1.300" opacity="0.09"/><path d="M867 381.0 h34" stroke="#55555e" stroke-width="5.500" stroke-dasharray="2 1.300" opacity="0.07"/><path d="M906 381.0 h35" stroke="#55555e" stroke-width="5.500" stroke-dasharray="2 1.300" opacity="0.08"/><path d="M945 381.0 h18" stroke="#55555e" stroke-width="5.500" stroke-dasharray="2 1.300" opacity="0.06"/><path d="M967 381.0 h10" stroke="#55555e" stroke-width="5.500" stroke-dasharray="2 1.300" opacity="0.07"/><path d="M982 381.0 h37" stroke="#55555e" stroke-width="5.500" stroke-dasharray="2 1.300" opacity="0.05"/><path d="M1023 381.0 h25" stroke="#55555e" stroke-width="5.500" stroke-dasharray="2 1.300" opacity="0.05"/><path d="M1053 381.0 h10" stroke="#55555e" stroke-width="5.500" stroke-dasharray="2 1.300" opacity="0.08"/><path d="M1068 381.0 h15" stroke="#55555e" stroke-width="5.500" stroke-dasharray="2 1.300" opacity="0.05"/><path d="M1087 381.0 h13" stroke="#55555e" stroke-width="5.500" stroke-dasharray="2 1.300" opacity="0.08"/><path d="M1105 381.0 h26" stroke="#55555e" stroke-width="5.500" stroke-dasharray="2 1.300" opacity="0.05"/><path d="M831 395.5 h37" stroke="#55555e" stroke-width="5.500" stroke-dasharray="2 1.300" opacity="0.06"/><path d="M873 395.5 h25" stroke="#55555e" stroke-width="5.500" stroke-dasharray="2 1.300" opacity="0.07"/><path d="M902 395.5 h31" stroke="#55555e" stroke-width="5.500" stroke-dasharray="2 1.300" opacity="0.07"/><path d="M938 395.5 h32" stroke="#55555e" stroke-width="5.500" stroke-dasharray="2 1.300" opacity="0.07"/><path d="M974 395.5 h14" stroke="#55555e" stroke-width="5.500" stroke-dasharray="2 1.300" opacity="0.06"/><path d="M993 395.5 h10" stroke="#55555e" stroke-width="5.500" stroke-dasharray="2 1.300" opacity="0.08"/><path d="M1007 395.5 h11" stroke="#55555e" stroke-width="5.500" stroke-dasharray="2 1.300" opacity="0.05"/><path d="M1023 395.5 h37" stroke="#55555e" stroke-width="5.500" stroke-dasharray="2 1.300" opacity="0.06"/><path d="M1065 395.5 h35" stroke="#55555e" stroke-width="5.500" stroke-dasharray="2 1.300" opacity="0.05"/><path d="M1104 395.5 h22" stroke="#55555e" stroke-width="5.500" stroke-dasharray="2 1.300" opacity="0.06"/><path d="M1131 395.5 h9" stroke="#55555e" stroke-width="5.500" stroke-dasharray="2 1.300" opacity="0.07"/><path d="M834 410.0 h31" stroke="#55555e" stroke-width="5.500" stroke-dasharray="2 1.300" opacity="0.09"/><path d="M869 410.0 h18" stroke="#55555e" stroke-width="5.500" stroke-dasharray="2 1.300" opacity="0.07"/><path d="M892 410.0 h21" stroke="#55555e" stroke-width="5.500" stroke-dasharray="2 1.300" opacity="0.05"/><path d="M918 410.0 h33" stroke="#55555e" stroke-width="5.500" stroke-dasharray="2 1.300" opacity="0.07"/><path d="M956 410.0 h32" stroke="#55555e" stroke-width="5.500" stroke-dasharray="2 1.300" opacity="0.06"/><path d="M992 410.0 h24" stroke="#55555e" stroke-width="5.500" stroke-dasharray="2 1.300" opacity="0.07"/><path d="M1021 410.0 h30" stroke="#55555e" stroke-width="5.500" stroke-dasharray="2 1.300" opacity="0.05"/><path d="M1055 410.0 h18" stroke="#55555e" stroke-width="5.500" stroke-dasharray="2 1.300" opacity="0.07"/><path d="M1078 410.0 h10" stroke="#55555e" stroke-width="5.500" stroke-dasharray="2 1.300" opacity="0.07"/><path d="M1093 410.0 h30" stroke="#55555e" stroke-width="5.500" stroke-dasharray="2 1.300" opacity="0.07"/><path d="M1128 410.0 h12" stroke="#55555e" stroke-width="5.500" stroke-dasharray="2 1.300" opacity="0.07"/><path d="M831 424.5 h19" stroke="#55555e" stroke-width="5.500" stroke-dasharray="2 1.300" opacity="0.09"/><path d="M854 424.5 h18" stroke="#55555e" stroke-width="5.500" stroke-dasharray="2 1.300" opacity="0.07"/><path d="M877 424.5 h11" stroke="#55555e" stroke-width="5.500" stroke-dasharray="2 1.300" opacity="0.06"/><path d="M892 424.5 h13" stroke="#55555e" stroke-width="5.500" stroke-dasharray="2 1.300" opacity="0.09"/><path d="M909 424.5 h30" stroke="#55555e" stroke-width="5.500" stroke-dasharray="2 1.300" opacity="0.09"/><path d="M944 424.5 h38" stroke="#55555e" stroke-width="5.500" stroke-dasharray="2 1.300" opacity="0.07"/><path d="M986 424.5 h36" stroke="#55555e" stroke-width="5.500" stroke-dasharray="2 1.300" opacity="0.07"/><path d="M1026 424.5 h21" stroke="#55555e" stroke-width="5.500" stroke-dasharray="2 1.300" opacity="0.09"/><path d="M1051 424.5 h35" stroke="#55555e" stroke-width="5.500" stroke-dasharray="2 1.300" opacity="0.09"/><path d="M1091 424.5 h23" stroke="#55555e" stroke-width="5.500" stroke-dasharray="2 1.300" opacity="0.08"/><path d="M1118 424.5 h20" stroke="#55555e" stroke-width="5.500" stroke-dasharray="2 1.300" opacity="0.09"/></g>
<text x="1092.0" y="316.5" font-size="10.50" fill="#4a4a52" font-family='Liberation Sans,sans-serif' font-weight="bold" opacity=".45" filter="url(#blur1)">применять</text>
<text x="1096.0" y="331.0" font-size="10.50" fill="#4a4a52" font-family='Liberation Sans,sans-serif' font-weight="bold" opacity=".45" filter="url(#blur1)">-вде-</text>
<text x="1092.0" y="345.5" font-size="10.50" fill="#4a4a52" font-family='Liberation Sans,sans-serif' font-weight="bold" opacity=".25" filter="url(#blur1)">нии-</text>
<text x="1100.0" y="360.0" font-size="10.50" fill="#4a4a52" font-family='Liberation Sans,sans-serif' font-weight="bold" opacity=".25" filter="url(#blur1)">ус-</text>
<text x="1098.0" y="374.5" font-size="10.50" fill="#4a4a52" font-family='Liberation Sans,sans-serif' font-weight="bold" opacity=".25" filter="url(#blur1)">ое</text>
<ellipse cx="1085" cy="552" rx="11" ry="17" fill="#9aa0c4" opacity=".55" filter="url(#blur5)"/>
<g filter="url(#soft)">
<path d="M512 247.3 L900 250.6 L1225 252.3" fill="none" stroke="#a85a50" stroke-width="1.3" />
<path d="M1225 252.3 L1260 252.6" fill="none" stroke="#c08a80" stroke-width="1" stroke-dasharray="6 5"/>
<path d="M528 280.5 L1145 280.5" fill="none" stroke="#24211d" stroke-width="1" />
<path d="M529.5 275 L529.5 291" fill="none" stroke="#24211d" stroke-width="1" />
<path d="M529.5 280.5 L536.5 279.2 L536.5 281.8 Z" fill="#24211d"/>
<circle cx="529.5" cy="301" r="10" fill="none" stroke="#24211d" stroke-width="1.600"/><text x="529.5" y="306.2" font-size="15.00" fill="#24211d" font-family='Liberation Serif,serif' font-weight="bold" text-anchor="middle" >1</text>
<path d="M660 275 L660 291" fill="none" stroke="#24211d" stroke-width="1" />
<path d="M660 280.5 L667 279.2 L667 281.8 Z" fill="#24211d"/>
<path d="M660 280.5 L653 281.8 L653 279.2 Z" fill="#24211d"/>
<circle cx="660" cy="301" r="10" fill="none" stroke="#24211d" stroke-width="1.600"/><text x="660.0" y="306.2" font-size="15.00" fill="#24211d" font-family='Liberation Sans,sans-serif' font-weight="bold" text-anchor="middle" >2</text>
<path d="M803.5 275 L803.5 291" fill="none" stroke="#24211d" stroke-width="1" />
<path d="M803.5 280.5 L810.5 279.2 L810.5 281.8 Z" fill="#24211d"/>
<path d="M803.5 280.5 L796.5 281.8 L796.5 279.2 Z" fill="#24211d"/>
<circle cx="803.5" cy="301" r="10" fill="none" stroke="#24211d" stroke-width="1.600"/><text x="803.5" y="306.2" font-size="15.00" fill="#24211d" font-family='Liberation Sans,sans-serif' font-weight="bold" text-anchor="middle" >3</text>
<path d="M918 275 L918 291" fill="none" stroke="#24211d" stroke-width="1" />
<path d="M918 280.5 L925 279.2 L925 281.8 Z" fill="#24211d"/>
<path d="M918 280.5 L911 281.8 L911 279.2 Z" fill="#24211d"/>
<circle cx="918" cy="301" r="10" fill="none" stroke="#24211d" stroke-width="1.600"/><text x="918.0" y="306.2" font-size="15.00" fill="#24211d" font-family='Liberation Sans,sans-serif' font-weight="bold" text-anchor="middle" >4</text>
<path d="M1033.7 275 L1033.7 291" fill="none" stroke="#24211d" stroke-width="1" />
<path d="M1033.7 280.5 L1040.7 279.2 L1040.7 281.8 Z" fill="#24211d"/>
<path d="M1033.7 280.5 L1026.7 281.8 L1026.7 279.2 Z" fill="#24211d"/>
<circle cx="1033.7" cy="301" r="10" fill="none" stroke="#24211d" stroke-width="1.600"/><text x="1033.7" y="306.2" font-size="15.00" fill="#24211d" font-family='Liberation Sans,sans-serif' font-weight="bold" text-anchor="middle" >5</text>
<path d="M1143.7 275 L1143.7 291" fill="none" stroke="#24211d" stroke-width="1" />
<path d="M1143.7 280.5 L1136.7 281.8 L1136.7 279.2 Z" fill="#24211d"/>
<circle cx="1143.7" cy="301" r="10" fill="none" stroke="#24211d" stroke-width="1.600"/><text x="1143.7" y="306.2" font-size="15.00" fill="#24211d" font-family='Liberation Sans,sans-serif' font-weight="bold" text-anchor="middle" >6</text>
<text x="580.0" y="276.0" font-size="10.80" fill="#2a2724" font-family='Liberation Sans,sans-serif' font-weight="bold" font-style="italic" textLength="21.0" lengthAdjust="spacing" >580</text>
<text x="716.5" y="276.0" font-size="10.80" fill="#2a2724" font-family='Liberation Sans,sans-serif' font-weight="bold" font-style="italic" textLength="21.0" lengthAdjust="spacing" >640</text>
<text x="849.0" y="276.0" font-size="10.80" fill="#2a2724" font-family='Liberation Sans,sans-serif' font-weight="bold" font-style="italic" textLength="21.0" lengthAdjust="spacing" >500</text>
<text x="968.0" y="276.0" font-size="10.80" fill="#2a2724" font-family='Liberation Sans,sans-serif' font-weight="bold" font-style="italic" textLength="21.0" lengthAdjust="spacing" >500</text>
<text x="1079.5" y="276.0" font-size="10.80" fill="#2a2724" font-family='Liberation Sans,sans-serif' font-weight="bold" font-style="italic" textLength="21.0" lengthAdjust="spacing" >500</text>
<path d="M529.5 311 L529.5 443" fill="none" stroke="#24211d" stroke-width="1" />
<path d="M660 311 L660 443" fill="none" stroke="#24211d" stroke-width="1" />
<path d="M803.7 311 L803.7 443" fill="none" stroke="#24211d" stroke-width="1" />
<path d="M918 311 L918 443" fill="none" stroke="#24211d" stroke-width="1" />
<path d="M922 366 L922 443" fill="none" stroke="#24211d" stroke-width="1" />
<path d="M1033.7 311 L1033.7 443" fill="none" stroke="#24211d" stroke-width="1" />
<path d="M1037.5 382 L1037.5 443" fill="none" stroke="#24211d" stroke-width="1" />
<path d="M1143.7 311 L1143.7 443" fill="none" stroke="#24211d" stroke-width="1" />
<path d="M1147.5 395 L1147.5 443" fill="none" stroke="#24211d" stroke-width="1" />
<text x="553.0" y="344.5" font-size="10.35" fill="#2a2724" font-family='Liberation Sans,sans-serif' font-weight="bold" font-style="italic" textLength="21.0" lengthAdjust="spacing" >330</text>
<path d="M529.5 349.5 L601 349.5" fill="none" stroke="#24211d" stroke-width="1" /><path d="M529.5 349.5 L535.5 348.2 L535.5 350.8 Z" fill="#24211d"/><path d="M601 349.5 L595 350.8 L595 348.2 Z" fill="#24211d"/>
<path d="M601 344 L601 442.5" fill="none" stroke="#24211d" stroke-width="1" />
<path d="M529.5 402.5 L661 402.5" fill="none" stroke="#24211d" stroke-width="1.3" />
<path d="M532.5 402.5 L532.5 442.5" fill="none" stroke="#24211d" stroke-width="1" />
<text x="537.0" y="418.5" font-size="10.35" fill="#2a2724" font-family='Liberation Sans,sans-serif' font-weight="bold" font-style="italic" textLength="48.0" lengthAdjust="spacing" >80, 180</text>
<path d="M536 424 L588 424" fill="none" stroke="#24211d" stroke-width="1" />
<path d="M545 424 L540 425.3 L540 422.7 Z" fill="#24211d"/>
<path d="M545 424 L550 422.7 L550 425.3 Z" fill="#24211d"/>
<path d="M586 424 L581 425.3 L581 422.7 Z" fill="#24211d"/>
<path d="M537 424 L542 422.7 L542 425.3 Z" fill="#24211d"/>
<path d="M545 418 L545 431" fill="none" stroke="#24211d" stroke-width="1" />
<path d="M588 418 L588 431" fill="none" stroke="#24211d" stroke-width="1" />
<path d="M546 442.5 L546 438 L550 438 L550 442.5" fill="none" stroke="#24211d" stroke-width="1" />
<path d="M587.5 442.5 L587.5 438 L591.5 438 L591.5 442.5" fill="none" stroke="#24211d" stroke-width="1" />
<path d="M606 403 L606 442" fill="none" stroke="#24211d" stroke-width="2" stroke-dasharray="4 3"/>
<path d="M610 400.5 L712.5 331 L694.7 442" fill="none" stroke="#24211d" stroke-width="1.1" />
<path d="M610 400.5 L638 442" fill="none" stroke="#24211d" stroke-width="1.1" />
<path d="M610 400.5 L661 400.5" fill="none" stroke="#24211d" stroke-width="1" />
<path d="M695 360 L695 442" fill="none" stroke="#24211d" stroke-width="1" />
<path d="M680 374.500 Q700 368.500 719 376" fill="none" stroke="#24211d" stroke-width="1" />
<text x="697.0" y="368.5" font-size="9.90" fill="#2a2724" font-family='Liberation Sans,sans-serif' font-weight="bold" font-style="italic" textLength="15.0" lengthAdjust="spacing" >10°</text>
<path d="M695 371.7 L689.159 373.591 L688.9 371.003 Z" fill="#24211d"/>
<path d="M708 372.8 L714.126 372.404 L713.741 374.976 Z" fill="#24211d"/>
<text x="738.5" y="407.0" font-size="10.35" fill="#2a2724" font-family='Liberation Sans,sans-serif' font-weight="bold" font-style="italic" textLength="19.0" lengthAdjust="spacing" transform="rotate(-8.0 738.5 407.0)" >490</text>
<path d="M695 412 L803.7 412" fill="none" stroke="#24211d" stroke-width="1" />
<text x="806.5" y="330.0" font-size="9.90" fill="#2a2724" font-family='Liberation Sans,sans-serif' font-weight="bold" font-style="italic" textLength="16.0" lengthAdjust="spacing" transform="rotate(-5.0 806.5 330.0)" >10°</text>
<path d="M789 336.500 Q812 331 835 341.500" fill="none" stroke="#24211d" stroke-width="1" />
<path d="M803.7 334 L797.859 335.891 L797.6 333.303 Z" fill="#24211d"/>
<path d="M819 335.5 L825.138 335.402 L824.629 337.951 Z" fill="#24211d"/>
<path d="M822.5 322.5 L807.5 443" fill="none" stroke="#24211d" stroke-width="1.2" />
<path d="M826.5 349 L812.5 443" fill="none" stroke="#24211d" stroke-width="1.2" />
<path d="M820 349 L826.5 349" fill="none" stroke="#24211d" stroke-width="1.2" />
<path d="M821.249 353.382 L1146.75 399.182" fill="none" stroke="#24211d" stroke-width="1.5" /><path d="M821.751 349.818 L1147.25 395.618" fill="none" stroke="#24211d" stroke-width="1.5" />
<path d="M820.315 369.59 L1146.81 403.39" fill="none" stroke="#24211d" stroke-width="1.25" /><path d="M820.685 366.01 L1147.19 399.81" fill="none" stroke="#24211d" stroke-width="1.25" />
<path d="M819.353 384.094 L1146.85 410.994" fill="none" stroke="#24211d" stroke-width="1.25" /><path d="M819.647 380.506 L1147.15 407.406" fill="none" stroke="#24211d" stroke-width="1.25" />
<path d="M818.402 404.297 L1146.9 422.297" fill="none" stroke="#24211d" stroke-width="1.25" /><path d="M818.598 400.703 L1147.1 418.703" fill="none" stroke="#24211d" stroke-width="1.25" />
<path d="M816.95 423.999 L1146.95 433.099" fill="none" stroke="#24211d" stroke-width="1.25" /><path d="M817.05 420.401 L1147.05 429.501" fill="none" stroke="#24211d" stroke-width="1.25" />
<path d="M819.1 357 l4.500 -2 M818.6 358 l4.500 2.500" fill="none" stroke="#24211d" stroke-width="1" />
<path d="M818.3 373 l4.500 -2 M817.8 374 l4.500 2.500" fill="none" stroke="#24211d" stroke-width="1" />
<path d="M817.575 387.5 l4.500 -2 M817.075 388.5 l4.500 2.500" fill="none" stroke="#24211d" stroke-width="1" />
<path d="M816.55 408 l4.500 -2 M816.05 409 l4.500 2.500" fill="none" stroke="#24211d" stroke-width="1" />
<path d="M815.575 427.5 l4.500 -2 M815.075 428.5 l4.500 2.500" fill="none" stroke="#24211d" stroke-width="1" />
<path d="M1149.500 395.500 L1190 342 L1262.500 255.600 Q1266 252 1271 251.900 L1283.700 251.900" fill="none" stroke="#24211d" stroke-width="1.4" />
<path d="M1152 403.5 L1198.7 342 L1267.5 257" fill="none" stroke="#24211d" stroke-width="1.1" />
<path d="M1283.7 251.9 L1266 342 L1248.7 442" fill="none" stroke="#24211d" stroke-width="1.4" />
<path d="M1278 257 L1262.5 342 L1245.5 442" fill="none" stroke="#24211d" stroke-width="1" />
<path d="M1275 256.3 L1220 335 L1152.5 442" fill="none" stroke="#24211d" stroke-width="1.1" />
<path d="M1278 257 L1226 333.7 L1159.4 442" fill="none" stroke="#24211d" stroke-width="1.1" />
<path d="M1267.5 257 L1278 257" fill="none" stroke="#24211d" stroke-width="1" />
<path d="M1239.08 284.883 L1249.08 292.683" fill="none" stroke="#24211d" stroke-width="1.2" /><path d="M1240.92 282.517 L1250.92 290.317" fill="none" stroke="#24211d" stroke-width="1.2" />
<path d="M1250 292 L1254 288.500 L1256 291 L1266 291 L1270 287 L1270.500 295 L1266 293 L1256 293 L1252 296Z" fill="#f2eedc" stroke="#24211d" stroke-width="1" />
<path d="M1204.81 330.332 L1219.31 337.832" fill="none" stroke="#24211d" stroke-width="1.2" /><path d="M1206.19 327.668 L1220.69 335.168" fill="none" stroke="#24211d" stroke-width="1.2" />
<path d="M1220 336.500 L1225 332 L1228 336.700 L1254 336.700 L1259 331.500 L1258 343 L1254 339.300 L1228 339.300 L1223 342Z" fill="#f2eedc" stroke="#24211d" stroke-width="1" />
<path d="M1163.16 382.242 L1180.16 393.742" fill="none" stroke="#24211d" stroke-width="1.2" /><path d="M1164.84 379.758 L1181.84 391.258" fill="none" stroke="#24211d" stroke-width="1.2" />
<path d="M1150 396.3 L1184 396.3" fill="none" stroke="#24211d" stroke-width="1" />
<path d="M1152 399 L1184 399" fill="none" stroke="#24211d" stroke-width="1" />
<path d="M1181 392.500 L1186 389 L1189 394 L1247 394 L1252 388 L1251 402 L1247 396.800 L1189 396.800 L1184 400Z" fill="#f2eedc" stroke="#24211d" stroke-width="1" />
<path d="M1182 401 L1243 409.500 L1248 404 L1247 416 L1242 412.500 L1180 404Z" fill="#f2eedc" stroke="#24211d" stroke-width="1" />
<text x="1209.0" y="369.5" font-size="14.50" fill="#24211d" font-family='Liberation Sans,sans-serif' font-weight="bold" >А</text>
<text x="1239.5" y="369.5" font-size="14.50" fill="#24211d" font-family='Liberation Sans,sans-serif' font-weight="bold" >Б</text>
<path d="M1202.5 367 L1205 373 L1220.5 373" fill="none" stroke="#24211d" stroke-width="1" />
<path d="M1236 373 L1250 373 Q1254 372 1256 368.500" fill="none" stroke="#24211d" stroke-width="1" />
<path d="M1151 371.5 L1248 246" fill="none" stroke="#24211d" stroke-width="1" />
<path d="M1147 368 L1175 389" fill="none" stroke="#24211d" stroke-width="0.9" />
<path d="M1188 316 L1216 337" fill="none" stroke="#24211d" stroke-width="0.9" />
<path d="M1224.5 272 L1252.5 293" fill="none" stroke="#24211d" stroke-width="0.9" />
<path d="M1245.5 245 L1273.5 266" fill="none" stroke="#24211d" stroke-width="0.9" />
<path d="M1151.3 371.2 L1153.98 365.677 L1156.03 367.283 Z" fill="#24211d"/>
<path d="M1191.5 319.2 L1194.18 313.677 L1196.23 315.283 Z" fill="#24211d"/>
<path d="M1191.5 319.2 L1188.82 324.723 L1186.77 323.117 Z" fill="#24211d"/>
<path d="M1227.7 274.7 L1230.38 269.177 L1232.43 270.783 Z" fill="#24211d"/>
<path d="M1227.7 274.7 L1225.02 280.223 L1222.97 278.617 Z" fill="#24211d"/>
<path d="M1248 246 L1245.32 251.523 L1243.27 249.917 Z" fill="#24211d"/>
<text x="1163.5" y="346.5" font-size="10.35" fill="#2a2724" font-family='Liberation Sans,sans-serif' font-weight="bold" font-style="italic" textLength="20.0" lengthAdjust="spacing" transform="rotate(-52.0 1163.5 346.5)" >290</text>
<text x="1201.0" y="299.0" font-size="10.35" fill="#2a2724" font-family='Liberation Sans,sans-serif' font-weight="bold" font-style="italic" textLength="20.0" lengthAdjust="spacing" transform="rotate(-52.0 1201.0 299.0)" >240</text>
<text x="1229.5" y="262.0" font-size="10.35" fill="#2a2724" font-family='Liberation Sans,sans-serif' font-weight="bold" font-style="italic" textLength="19.0" lengthAdjust="spacing" transform="rotate(-52.0 1229.5 262.0)" >170</text>
<text x="1266.5" y="234.0" font-size="10.35" fill="#2a2724" font-family='Liberation Sans,sans-serif' font-weight="bold" font-style="italic" textLength="12.5" lengthAdjust="spacing" >75</text>
<path d="M1256 238 L1293 238" fill="none" stroke="#24211d" stroke-width="1" />
<path d="M1262.5 235 L1262.5 254" fill="none" stroke="#24211d" stroke-width="1" />
<path d="M1280.5 235 L1280.5 254" fill="none" stroke="#24211d" stroke-width="1" />
<path d="M1262.5 238 L1257.5 239.3 L1257.5 236.7 Z" fill="#24211d"/>
<path d="M1280.5 238 L1285.5 236.7 L1285.5 239.3 Z" fill="#24211d"/>
<path d="M1302 256.6 L1302 443" fill="none" stroke="#24211d" stroke-width="1" />
<path d="M1281 256.6 L1311 256.6" fill="none" stroke="#24211d" stroke-width="1" />
<path d="M1277 291.5 L1311 291.5" fill="none" stroke="#24211d" stroke-width="1" />
<path d="M1258 338.5 L1311 338.5" fill="none" stroke="#24211d" stroke-width="1" />
<path d="M1299 397.5 L1311 397.5" fill="none" stroke="#24211d" stroke-width="1" />
<path d="M1247 442.7 L1311 442.7" fill="none" stroke="#24211d" stroke-width="1" />
<path d="M1302 256.6 L1303.3 262.6 L1300.7 262.6 Z" fill="#24211d"/>
<path d="M1302 291.5 L1300.7 285.5 L1303.3 285.5 Z" fill="#24211d"/>
<path d="M1302 291.5 L1303.3 297.5 L1300.7 297.5 Z" fill="#24211d"/>
<path d="M1302 338.5 L1300.7 332.5 L1303.3 332.5 Z" fill="#24211d"/>
<path d="M1302 338.5 L1303.3 344.5 L1300.7 344.5 Z" fill="#24211d"/>
<path d="M1302 397.5 L1300.7 391.5 L1303.3 391.5 Z" fill="#24211d"/>
<path d="M1302 397.5 L1303.3 403.5 L1300.7 403.5 Z" fill="#24211d"/>
<path d="M1302 442.7 L1300.7 436.7 L1303.3 436.7 Z" fill="#24211d"/>
<text x="1297.0" y="284.0" font-size="10.35" fill="#2a2724" font-family='Liberation Sans,sans-serif' font-weight="bold" font-style="italic" textLength="20.0" lengthAdjust="spacing" transform="rotate(-81.0 1297.0 284.0)" >160</text>
<text x="1297.0" y="324.5" font-size="10.35" fill="#2a2724" font-family='Liberation Sans,sans-serif' font-weight="bold" font-style="italic" textLength="20.0" lengthAdjust="spacing" transform="rotate(-81.0 1297.0 324.5)" >200</text>
<text x="1297.0" y="379.0" font-size="10.35" fill="#2a2724" font-family='Liberation Sans,sans-serif' font-weight="bold" font-style="italic" textLength="20.0" lengthAdjust="spacing" transform="rotate(-81.0 1297.0 379.0)" >230</text>
<text x="1297.0" y="432.0" font-size="10.35" fill="#2a2724" font-family='Liberation Sans,sans-serif' font-weight="bold" font-style="italic" textLength="18.0" lengthAdjust="spacing" transform="rotate(-81.0 1297.0 432.0)" >210</text>
<path d="M530 442.5 L1248.5 442.5" fill="none" stroke="#24211d" stroke-width="1.7" />
<path d="M530 446.7 L900 446.7 L1246 445.5" fill="none" stroke="#24211d" stroke-width="1.4" />
<path d="M530 442.5 L530 587.5" fill="none" stroke="#24211d" stroke-width="1.7" />
<path d="M533.7 446.7 L533.7 538" fill="none" stroke="#24211d" stroke-width="1.3" />
<path d="M530 539 Q600 541 650 546 Q720 551 762 549 Q800 547.500 840 543 Q880 539.500 920 535.500 L1242.500 487.500" fill="none" stroke="#24211d" stroke-width="1.8" />
<path d="M534 535.500 Q600 537.500 650 542.500 Q720 547.500 762 545.500 Q800 544 840 539.500 Q880 536 920 532 L1239 484" fill="none" stroke="#24211d" stroke-width="1.3" />
<path d="M531 444 L564 444 L563.700 447.500 Q556 454 548.700 458 Q540 461.500 532.500 462.500Z" fill="#ece6d2" stroke="#24211d" stroke-width="1.1" />
<circle cx="538" cy="456" r="2.300" fill="none" stroke="#24211d"/><circle cx="551" cy="449.500" r="2.300" fill="none" stroke="#24211d"/>
<path d="M532.500 518.700 L562.500 535.600 L562.500 539 L532.500 538Z" fill="#ece6d2" stroke="#24211d" stroke-width="1.1" />
<circle cx="539" cy="528.500" r="3.200" fill="none" stroke="#24211d" stroke-width="1.200"/>
<path d="M548.648 460.307 L642.348 539.107" fill="none" stroke="#24211d" stroke-width="1.1" /><path d="M551.352 457.093 L645.052 535.893" fill="none" stroke="#24211d" stroke-width="1.1" />
<path d="M655.5 447 L649 544" fill="none" stroke="#24211d" stroke-width="1.2" />
<path d="M661 447 L655 546" fill="none" stroke="#24211d" stroke-width="1" />
<path d="M667 447 L662 546" fill="none" stroke="#24211d" stroke-width="1" />
<path d="M672 447 L667 546.5" fill="none" stroke="#24211d" stroke-width="1.2" />
<path d="M656.500 478 Q657 489 660 490 Q663 489 664 478" fill="none" stroke="#24211d" stroke-width="1.1" />
<text x="677.0" y="461.0" font-size="10.35" fill="#2a2724" font-family='Liberation Sans,sans-serif' font-weight="bold" font-style="italic" textLength="30.0" lengthAdjust="spacing" transform="rotate(4.0 677.0 461.0)" >20×18</text>
<path d="M660 464.3 L709 468.5" fill="none" stroke="#24211d" stroke-width="1" />
<path d="M671 465.2 L677.085 464.383 L676.877 466.974 Z" fill="#24211d"/>
<path d="M661 464.4 L655.912 465.297 L656.12 462.705 Z" fill="#24211d"/>
<path d="M668.021 544.421 L739.021 493.421" fill="none" stroke="#24211d" stroke-width="1.2" /><path d="M665.979 541.579 L736.979 490.579" fill="none" stroke="#24211d" stroke-width="1.2" />
<path d="M666.461 497.833 L692.461 545.833" fill="none" stroke="#24211d" stroke-width="1.2" /><path d="M669.539 496.167 L695.539 544.167" fill="none" stroke="#24211d" stroke-width="1.2" />
<path d="M739.05 493.4 L763.05 475.4" fill="none" stroke="#24211d" stroke-width="1.2" /><path d="M736.95 490.6 L760.95 472.6" fill="none" stroke="#24211d" stroke-width="1.2" />
<path d="M714.856 509.324 L758.856 547.324" fill="none" stroke="#24211d" stroke-width="1.2" /><path d="M717.144 506.676 L761.144 544.676" fill="none" stroke="#24211d" stroke-width="1.2" />
<path d="M763.014 475.427 L801.014 448.427" fill="none" stroke="#24211d" stroke-width="1.2" /><path d="M760.986 472.573 L798.986 445.573" fill="none" stroke="#24211d" stroke-width="1.2" />
<path d="M722 449 Q742.75 446.5 763.5 450 T805 450.5" fill="none" stroke="#24211d" stroke-width="0.95" />
<path d="M723.3 452.5 Q743.725 450 764.15 453.5 T805 453.85" fill="none" stroke="#24211d" stroke-width="0.95" />
<path d="M724.6 456 Q744.7 453.5 764.8 457 T805 457.2" fill="none" stroke="#24211d" stroke-width="0.95" />
<path d="M725.9 459.5 Q745.675 457 765.45 460.5 T805 460.55" fill="none" stroke="#24211d" stroke-width="0.95" />
<path d="M727.2 463 Q746.65 460.5 766.1 464 T805 463.9" fill="none" stroke="#24211d" stroke-width="0.95" />
<path d="M728.5 466.5 Q747.625 464 766.75 467.5 T805 467.25" fill="none" stroke="#24211d" stroke-width="0.95" />
<path d="M729.8 470 Q748.6 467.5 767.4 471 T805 470.6" fill="none" stroke="#24211d" stroke-width="0.95" />
<path d="M731 473.5 Q749.5 471 768 474.5 T805 473.95" fill="none" stroke="#24211d" stroke-width="0.95" />
<path d="M735.5 477 Q752.875 474.5 770.25 478 T805 477.3" fill="none" stroke="#24211d" stroke-width="0.95" />
<path d="M740 480.5 Q756.25 478 772.5 481.5 T805 480.65" fill="none" stroke="#24211d" stroke-width="0.95" />
<path d="M744.5 484 Q759.625 481.5 774.75 485 T805 484" fill="none" stroke="#24211d" stroke-width="0.95" />
<path d="M749 487.5 Q763 485 777 488.5 T805 487.35" fill="none" stroke="#24211d" stroke-width="0.95" />
<path d="M754 491 Q766.75 488.5 779.5 492 T805 490.7" fill="none" stroke="#24211d" stroke-width="0.95" />
<path d="M761.5 494.5 Q772.375 492 783.25 495.5 T805 494.05" fill="none" stroke="#24211d" stroke-width="0.95" />
<path d="M769 498 Q778 495.5 787 499 T805 497.4" fill="none" stroke="#24211d" stroke-width="0.95" />
<path d="M776.5 501.5 Q783.625 499 790.75 502.5 T805 500.75" fill="none" stroke="#24211d" stroke-width="0.95" />
<path d="M784 505 Q789.25 502.5 794.5 506 T805 504.1" fill="none" stroke="#24211d" stroke-width="0.95" />
<path d="M791.5 508.5 Q794.875 506 798.25 509.5 T805 507.45" fill="none" stroke="#24211d" stroke-width="0.95" />
<path d="M799 512 Q800.5 509.5 802 513 T805 510.8" fill="none" stroke="#24211d" stroke-width="0.95" />
<path d="M722 447 Q727 462 724 472 Q734 484 742 490 L760 497 Q790 505 806 512" fill="none" stroke="#24211d" stroke-width="1.1" />
<path d="M763 450 L767.5 447" fill="none" stroke="#24211d" stroke-width="1.3" />
<path d="M764.5 452 L769 449" fill="none" stroke="#24211d" stroke-width="1.3" />
<path d="M767 456 L771.5 453" fill="none" stroke="#24211d" stroke-width="1.3" />
<path d="M768.5 458 L773 455" fill="none" stroke="#24211d" stroke-width="1.3" />
<path d="M771 462 L775.5 459" fill="none" stroke="#24211d" stroke-width="1.3" />
<path d="M772.5 464 L777 461" fill="none" stroke="#24211d" stroke-width="1.3" />
<path d="M775 468 L779.5 465" fill="none" stroke="#24211d" stroke-width="1.3" />
<path d="M776.5 470 L781 467" fill="none" stroke="#24211d" stroke-width="1.3" />
<path d="M764 462 L768.5 459" fill="none" stroke="#24211d" stroke-width="1.3" />
<path d="M765.5 464 L770 461" fill="none" stroke="#24211d" stroke-width="1.3" />
<path d="M768 470 L772.5 467" fill="none" stroke="#24211d" stroke-width="1.3" />
<path d="M769.5 472 L774 469" fill="none" stroke="#24211d" stroke-width="1.3" />
<path d="M772 477 L776.5 474" fill="none" stroke="#24211d" stroke-width="1.3" />
<path d="M773.5 479 L778 476" fill="none" stroke="#24211d" stroke-width="1.3" />
<path d="M760 474 L764.5 471" fill="none" stroke="#24211d" stroke-width="1.3" />
<path d="M761.5 476 L766 473" fill="none" stroke="#24211d" stroke-width="1.3" />
<path d="M764 482 L768.5 479" fill="none" stroke="#24211d" stroke-width="1.3" />
<path d="M765.5 484 L770 481" fill="none" stroke="#24211d" stroke-width="1.3" />
<path d="M758 486 L762.5 483" fill="none" stroke="#24211d" stroke-width="1.3" />
<path d="M759.5 488 L764 485" fill="none" stroke="#24211d" stroke-width="1.3" />
<path d="M805 447 L805 546" fill="none" stroke="#24211d" stroke-width="1.3" />
<path d="M810 447 L810 545.5" fill="none" stroke="#24211d" stroke-width="1.1" />
<path d="M760 497 L760 546" fill="none" stroke="#24211d" stroke-width="1" />
<path d="M763.5 499 L763.5 546" fill="none" stroke="#24211d" stroke-width="1" />
<path d="M810 447 L822 447 L822.500 457 L810 468Z" fill="none" stroke="#24211d" stroke-width="1" />
<path d="M820.76 458.569 L901.76 522.569" fill="none" stroke="#24211d" stroke-width="1.2" /><path d="M823.24 455.431 L904.24 519.431" fill="none" stroke="#24211d" stroke-width="1.2" />
<text x="861.0" y="481.0" font-size="10.50" fill="#24211d" font-family='Liberation Sans,sans-serif' font-weight="bold" font-style="italic" textLength="29.0" lengthAdjust="spacingAndGlyphs" transform="rotate(-57.0 861.0 481.0)" >18×18</text>
<path d="M853.5 500.5 L884 458.5" fill="none" stroke="#24211d" stroke-width="1" />
<path d="M858 483 L872 492" fill="none" stroke="#24211d" stroke-width="1" />
<path d="M865.5 487.5 L870.401 489.135 L868.984 491.315 Z" fill="#24211d"/>
<path d="M865 487 L860.099 485.365 L861.516 483.185 Z" fill="#24211d"/>
<text x="576.0" y="531.0" font-size="10.35" fill="#2a2724" font-family='Liberation Sans,sans-serif' font-weight="bold" font-style="italic" textLength="27.0" lengthAdjust="spacing" transform="rotate(-86.0 576.0 531.0)" >18×18</text>
<path d="M580 504.5 L580 549" fill="none" stroke="#24211d" stroke-width="1" />
<path d="M580 537.5 L578.7 531.5 L581.3 531.5 Z" fill="#24211d"/>
<path d="M580 541.5 L581.3 547.5 L578.7 547.5 Z" fill="#24211d"/>
<text x="576.0" y="567.5" font-size="10.80" fill="#2a2724" font-family='Liberation Sans,sans-serif' font-weight="bold" font-style="italic" textLength="20.0" lengthAdjust="spacing" >525</text>
<text x="696.0" y="567.5" font-size="10.80" fill="#2a2724" font-family='Liberation Sans,sans-serif' font-weight="bold" font-style="italic" textLength="19.0" lengthAdjust="spacing" >490</text>
<path d="M530 572 L760.5 572" fill="none" stroke="#24211d" stroke-width="1" />
<path d="M530 572 L539 570.7 L539 573.3 Z" fill="#24211d"/>
<path d="M649 572 L640 573.3 L640 570.7 Z" fill="#24211d"/>
<path d="M649 572 L658 570.7 L658 573.3 Z" fill="#24211d"/>
<path d="M760.5 572 L751.5 573.3 L751.5 570.7 Z" fill="#24211d"/>
<path d="M649 548 L649 577" fill="none" stroke="#24211d" stroke-width="1" />
<path d="M760.5 550 L760.5 577" fill="none" stroke="#24211d" stroke-width="1" />
<path d="M530 583.7 L1282 583.7" fill="none" stroke="#24211d" stroke-width="1" />
<path d="M530 583.7 L539 582.4 L539 585 Z" fill="#24211d"/>
<path d="M1282 583.7 L1273 585 L1273 582.4 Z" fill="#24211d"/>
<text x="906.0" y="579.0" font-size="10.80" fill="#2a2724" font-family='Liberation Sans,sans-serif' font-weight="bold" font-style="italic" textLength="26.5" lengthAdjust="spacing" >3300</text>
<path d="M1282.5 467 L1282.5 596" fill="none" stroke="#24211d" stroke-width="1.2" />
<path d="M908.500 446 L934 446 L924 456.500 L917 456.500Z" fill="#ebe5d0" stroke="#24211d" stroke-width="1" />
<path d="M918.25 456 L918.25 534" fill="none" stroke="#24211d" stroke-width="1.2" /><path d="M922.75 456 L922.75 534" fill="none" stroke="#24211d" stroke-width="1.2" />
<path d="M905 521.500 L940 517 L943 530.500 L907.500 537.500Z" fill="#ebe5d0" stroke="#24211d" stroke-width="1" />
<path d="M941.246 521.065 L1022.25 456.565" fill="none" stroke="#24211d" stroke-width="1.2" /><path d="M938.754 517.935 L1019.75 453.435" fill="none" stroke="#24211d" stroke-width="1.2" />
<path d="M1020 446 L1056.500 446 L1056.500 455.500 L1048 458 L1028 458 L1020 455.500Z" fill="#ebe5d0" stroke="#24211d" stroke-width="1" />
<path d="M1023 455 L1034 447" fill="none" stroke="#24211d" stroke-width="0.8" stroke-dasharray="3 2"/>
<path d="M1053 455 L1041 447" fill="none" stroke="#24211d" stroke-width="0.8" stroke-dasharray="3 2"/>
<path d="M1032.75 458 L1032.75 505" fill="none" stroke="#24211d" stroke-width="1.2" /><path d="M1037.25 458 L1037.25 505" fill="none" stroke="#24211d" stroke-width="1.2" />
<path d="M1021 521 L1032 503 L1038 503 L1049 516Z" fill="#ebe5d0" stroke="#24211d" stroke-width="1" />
<path d="M1053.16 458.813 L1126.16 492.813" fill="none" stroke="#24211d" stroke-width="1.2" /><path d="M1054.84 455.187 L1127.84 489.187" fill="none" stroke="#24211d" stroke-width="1.2" />
<path d="M1132.500 446 L1155.500 446 L1148 457.500 L1141 457.500Z" fill="#ebe5d0" stroke="#24211d" stroke-width="1" />
<path d="M1142.5 457 L1142.5 488" fill="none" stroke="#24211d" stroke-width="1.2" /><path d="M1147.5 457 L1147.5 488" fill="none" stroke="#24211d" stroke-width="1.2" />
<path d="M1126 489 L1157.500 484 L1160 499 L1129 505Z" fill="#ebe5d0" stroke="#24211d" stroke-width="1" />
<path d="M1130 500 L1150 488" fill="none" stroke="#24211d" stroke-width="0.8" stroke-dasharray="3 2"/>
<path d="M1157.58 486.73 L1180.58 457.23" fill="none" stroke="#24211d" stroke-width="1.2" /><path d="M1154.42 484.27 L1177.42 454.77" fill="none" stroke="#24211d" stroke-width="1.2" />
<path d="M1175 446 L1195.500 446 L1194 456.500 L1177.500 456Z" fill="#ebe5d0" stroke="#24211d" stroke-width="1" />
<path d="M1178 454 L1190 447" fill="none" stroke="#24211d" stroke-width="0.8" stroke-dasharray="3 2"/>
<path d="M1192.89 456.664 L1222.89 476.664" fill="none" stroke="#24211d" stroke-width="1.2" /><path d="M1195.11 453.336 L1225.11 473.336" fill="none" stroke="#24211d" stroke-width="1.2" />
<path d="M1222.500 474 L1241.500 471 L1243 485.500 L1225 488Z" fill="#ebe5d0" stroke="#24211d" stroke-width="1" />
<path d="M1232.500 446 L1247.500 446 L1245 457Z" fill="#ebe5d0" stroke="#24211d" stroke-width="1" />
<text x="1186.0" y="492.0" font-size="10.50" fill="#24211d" font-family='Liberation Sans,sans-serif' font-weight="bold" font-style="italic" textLength="29.0" lengthAdjust="spacingAndGlyphs" transform="rotate(-56.0 1186.0 492.0)" >15×18</text>
<path d="M1187.5 493 L1213 453" fill="none" stroke="#24211d" stroke-width="1" />
<path d="M1201 459 L1211 466" fill="none" stroke="#24211d" stroke-width="1" />
<path d="M1206 462.5 L1210.84 464.302 L1209.35 466.432 Z" fill="#24211d"/>
<path d="M1206 462.5 L1201.16 460.698 L1202.65 458.568 Z" fill="#24211d"/>
<text x="931.0" y="484.0" font-size="10.35" fill="#2a2724" font-family='Liberation Sans,sans-serif' font-weight="bold" font-style="italic" textLength="29.0" lengthAdjust="spacing" >18×18</text>
<path d="M906 487.7 L962 487.7" fill="none" stroke="#24211d" stroke-width="1" />
<path d="M918 487.7 L912 489 L912 486.4 Z" fill="#24211d"/>
<path d="M923 487.7 L929 486.4 L929 489 Z" fill="#24211d"/>
<path d="M1242.500 488 Q1240 500 1237 508" fill="none" stroke="#24211d" stroke-width="1" />
<circle cx="1233.7" cy="517" r="9.5" fill="none" stroke="#24211d" stroke-width="1.600"/><text x="1233.7" y="522.2" font-size="15.00" fill="#24211d" font-family='Liberation Sans,sans-serif' font-weight="bold" text-anchor="middle" >7</text>
<text x="1180.0" y="530.5" font-size="10.35" fill="#2a2724" font-family='Liberation Sans,sans-serif' font-weight="bold" font-style="italic" textLength="19.0" lengthAdjust="spacing" >460</text>
<path d="M1143 534.3 L1248.3 534.3" fill="none" stroke="#24211d" stroke-width="1" /><path d="M1143 534.3 L1149 533 L1149 535.6 Z" fill="#24211d"/><path d="M1248.3 534.3 L1242.3 535.6 L1242.3 533 Z" fill="#24211d"/>
<path d="M1143 500 L1143 543" fill="none" stroke="#24211d" stroke-width="1" />
<path d="M1248.3 488 L1248.3 541" fill="none" stroke="#24211d" stroke-width="1" />
</g>
</g>
<circle cx="600" cy="529" r="57" fill="none" stroke="#7c7f94" stroke-width="1"/>
<path d="M513 346 L1252.5 346 L1252.5 370" fill="none" stroke="#7c7f94" stroke-width="0.85" />
<path d="M513 400 L918 400" fill="none" stroke="#7c7f94" stroke-width="0.85" />
<path d="M918 410.5 L1148 410.5" fill="none" stroke="#7c7f94" stroke-width="0.85" />
<path d="M918 396 L918 414" fill="none" stroke="#7c7f94" stroke-width="0.8" />
<path d="M1147.5 421.9 L1252.5 421.9" fill="none" stroke="#7c7f94" stroke-width="0.85" />
<path d="M513 346 L513 552" fill="none" stroke="#7c7f94" stroke-width="0.8" />
<path d="M513 396 L513 404" fill="none" stroke="#7c7f94" stroke-width="0.85" />
<path d="M660 396 L660 404" fill="none" stroke="#7c7f94" stroke-width="0.85" />
<path d="M803.7 396 L803.7 404" fill="none" stroke="#7c7f94" stroke-width="0.85" />
<path d="M1033.7 406.5 L1033.7 414.5" fill="none" stroke="#7c7f94" stroke-width="0.85" />
<path d="M1148 406.5 L1148 414.5" fill="none" stroke="#7c7f94" stroke-width="0.85" />
<path d="M818.7 346 L818.7 547" fill="none" stroke="#7c7f94" stroke-width="0.85" />
<path d="M602.5 470 L601 505 L598.7 527.5" fill="none" stroke="#7c7f94" stroke-width="0.8" />
<path d="M652 498 L652 545" fill="none" stroke="#7c7f94" stroke-width="0.8" />
<path d="M712 504 L712 540" fill="none" stroke="#7c7f94" stroke-width="0.8" />
<path d="M600 529 Q603 503 670 500 Q740 503 812 540 Q690 553 612 541 Q600 538 600 529" fill="none" stroke="#7c7f94" stroke-width="1.2" />
<path d="M705 543 Q722 520 742 508" fill="none" stroke="#7c7f94" stroke-width="0.8" />
<path d="M730 522 Q745 530 760 527 L780 498" fill="none" stroke="#7c7f94" stroke-width="0.8" />
<path d="M1169.500 395 Q1176 390 1184 388.700 Q1227 386 1265 388.700 Q1310 393 1340.500 397.500 Q1310 402 1265 403.700 Q1227 406.500 1184 404 Q1176 403 1169.500 400Z" fill="none" stroke="#7c7f94" stroke-width="0.9" />
<path d="M1169.5 397.5 L1318 397.5" fill="none" stroke="#7c7f94" stroke-width="0.6" />
<path d="M1268 393.5 L1274 393.5" fill="none" stroke="#7c7f94" stroke-width="0.85" />
<path d="M1268 401.5 L1274 401.5" fill="none" stroke="#7c7f94" stroke-width="0.85" />
<ellipse cx="789" cy="358.300" rx="20.500" ry="27.500" transform="rotate(14 789 358.300)" fill="none" stroke="#8e8e3e"/>
<ellipse cx="796" cy="357" rx="6" ry="7.500" fill="none" stroke="#8e8e3e"/><ellipse cx="786.700" cy="406.700" rx="14" ry="13" fill="none" stroke="#8e8e3e"/>
<path d="M775 388 Q760 400 752 425 Q742 450 728 470 Q716 490 722 512" fill="none" stroke="#8e8e3e" stroke-width="1" />
<path d="M800 392 Q776 396 764 418 Q752 440 740 458 Q726 476 708 490" fill="none" stroke="#8e8e3e" stroke-width="1" />
<path d="M788 393 L735 443 M795 393.500 Q770 420 738 460 M800 403 Q780 430 750 460" fill="none" stroke="#8e8e3e" stroke-width="1" />
<path d="M776 395 Q800 386 806 402 Q808 420 790 424" fill="none" stroke="#8e8e3e" stroke-width="1" />
<path d="M790 398 Q770 420 758 440 Q748 460 758 480 Q770 498 790 494 Q812 488 810 470" fill="none" stroke="#8e8e3e" stroke-width="1" />
<path d="M806 412 Q790 440 772 452 Q750 462 742 480" fill="none" stroke="#8e8e3e" stroke-width="1" />
<path d="M628 452 Q650 440 690 446 Q740 452 760 448 Q790 436 802 420" fill="none" stroke="#8e8e3e" stroke-width="1" />
<path d="M640 456 Q680 470 720 476 Q745 482 760 500" fill="none" stroke="#8e8e3e" stroke-width="1" />
<circle cx="630.600" cy="469.400" r="13" fill="none" stroke="#8e8e3e"/>
<path d="M629.600 468.400 l2 2 m0 -2 l-2 2" fill="none" stroke="#8e8e3e" stroke-width="0.8" />
<path d="M536 505 L620 458.500 Q632 452 645 452" fill="none" stroke="#8e8e3e" stroke-width="1" />
<path d="M549 523.500 Q590 506 615 496 Q630 490 635 482" fill="none" stroke="#8e8e3e" stroke-width="1" />
<circle cx="543.700" cy="513" r="10.600" fill="none" stroke="#8e8e3e"/>
<path d="M533 516 Q528 540 545 548" fill="none" stroke="#8e8e3e" stroke-width="1" />
<path d="M532 540 Q540 548 552 538" fill="none" stroke="#8e8e3e" stroke-width="1" />
<path d="M598 528 Q601 506 640 500 Q700 500 760 520 Q800 535 815 541 Q740 551 640 545 Q600 541 598 528" fill="none" stroke="#8e8e3e" stroke-width="1.1" />
<path d="M604 531 Q660 526 720 534 Q790 542 815 541" fill="none" stroke="#8e8e3e" stroke-width="1" />
<path d="M700 514 Q690 528 700 540 M700 514 l14 -10" fill="none" stroke="#8e8e3e" stroke-width="1" />
<path d="M657 482 Q658 520 656 548" fill="none" stroke="#8e8e3e" stroke-width="1" />
<path d="M662 482 Q663 520 661 548" fill="none" stroke="#8e8e3e" stroke-width="1" />
<path d="M772 478 Q760 520 790 538" fill="none" stroke="#8e8e3e" stroke-width="0.8" />
<path d="M700 505 l-8 -10 l16 -8" fill="none" stroke="#8e8e3e" stroke-width="0.8" />
<path d="M488 436.3 L1561 436.3" fill="none" stroke="#ff1c1c" stroke-width="1" />
<path d="M512 392.5 L818 392.5" fill="none" stroke="#ff1c1c" stroke-width="1" />
<path d="M565 392.5 L631 340.5 L642.3 413.5" fill="none" stroke="#ff1c1c" stroke-width="1" />
<path d="M565 392.500 Q590 396 611 401 Q630 408 642.300 413.500 Q660 419 680 419 Q705 418 730 413.300 Q760 405 780 390 Q795 379 805.800 367.500 L880 372.500 L1000 380 L1150 390.500 L1268.700 242 L1330 242 L1362.500 375 L1381 460 L1245 481" fill="none" stroke="#ff1c1c" stroke-width="1" />
<path d="M1381 460 L1242.5 489" fill="none" stroke="#ff1c1c" stroke-width="1" />
<path d="M836 552 L1346 473" fill="none" stroke="#ff1c1c" stroke-width="1.2" />
<path d="M488 546 L530 546.500 Q650 549.500 760 548.500 Q830 546 900 536.500 Q950 530.500 1010 523 L1243 488" fill="none" stroke="#ff1c1c" stroke-width="1" />
<path d="M1294.5 188.7 L1267 342 L1251 442 L1243.5 487.5" fill="none" stroke="#ff1c1c" stroke-width="1" />
<path d="M1283.7 252 L1270 342 L1253 442 L1241 505" fill="none" stroke="#ff1c1c" stroke-width="1" />
<path d="M512.5 436 L512.5 547" fill="none" stroke="#ff1c1c" stroke-width="1" />
<path d="M517 436 L517 547" fill="none" stroke="#ff1c1c" stroke-width="1" />
<path d="M652 434 L644.5 545" fill="none" stroke="#ff1c1c" stroke-width="1" />
<path d="M656.5 434 L656.5 619.5" fill="none" stroke="#ff1c1c" stroke-width="1" />
<path d="M672 435 L663.7 547.5" fill="none" stroke="#ff1c1c" stroke-width="1" />
<path d="M772.5 432.5 L765 555" fill="none" stroke="#ff1c1c" stroke-width="1" />
<path d="M777 432.5 L768.7 555" fill="none" stroke="#ff1c1c" stroke-width="1" />
<path d="M805.9 436 L805.9 654.7" fill="none" stroke="#ff1c1c" stroke-width="1" />
<path d="M809.5 436 L809.5 654.7" fill="none" stroke="#ff1c1c" stroke-width="1" />
<path d="M740.5 545 L740.5 623" fill="none" stroke="#ff1c1c" stroke-width="1" />
<path d="M919 436 L919 537" fill="none" stroke="#ff1c1c" stroke-width="1" />
<path d="M922.5 436 L922.5 537" fill="none" stroke="#ff1c1c" stroke-width="1" />
<path d="M1033.7 436 L1033.7 528" fill="none" stroke="#ff1c1c" stroke-width="1" />
<path d="M1037 436 L1037 528" fill="none" stroke="#ff1c1c" stroke-width="1" />
<path d="M1147.5 436 L1147.5 516" fill="none" stroke="#ff1c1c" stroke-width="1" />
<path d="M1151 436 L1151 516" fill="none" stroke="#ff1c1c" stroke-width="1" />
<path d="M715 512.500 Q728 516 740 512.500 Q760 502 775 475 Q790 452 802.500 441" fill="none" stroke="#ff1c1c" stroke-width="1.1" />
<circle cx="656" cy="531" r="1.500" fill="#e01010"/>
<path d="M233 467 Q240 494 280 511 Q310 522 340 529 Q370 535.500 400 540 Q460 549 512 551.800" fill="none" stroke="#1cb8cc" stroke-width="1.1" />
<path d="M511 551.800 L520 552.300 L764 551.800" fill="none" stroke="#28e0f4" stroke-width="1.5" />
<text x="570.5" y="400.0" font-size="15.50" fill="#00e8ff" font-family='Liberation Sans,sans-serif' textLength="25.0" lengthAdjust="spacingAndGlyphs" >630</text>
<text x="717.5" y="400.0" font-size="15.50" fill="#00e8ff" font-family='Liberation Sans,sans-serif' textLength="25.0" lengthAdjust="spacingAndGlyphs" >655</text>
<text x="849.5" y="400.0" font-size="15.50" fill="#00e8ff" font-family='Liberation Sans,sans-serif' textLength="25.0" lengthAdjust="spacingAndGlyphs" >500</text>
<text x="963.5" y="411.0" font-size="15.50" fill="#00e8ff" font-family='Liberation Sans,sans-serif' textLength="25.0" lengthAdjust="spacingAndGlyphs" >500</text>
<text x="1077.5" y="411.0" font-size="15.50" fill="#00e8ff" font-family='Liberation Sans,sans-serif' textLength="25.0" lengthAdjust="spacingAndGlyphs" >500</text>
<text x="1187.5" y="422.5" font-size="15.50" fill="#00e8ff" font-family='Liberation Sans,sans-serif' textLength="25.5" lengthAdjust="spacingAndGlyphs" >460</text>
<text x="865.6" y="346.3" font-size="15.50" fill="#00e8ff" font-family='Liberation Sans,sans-serif' textLength="34.4" lengthAdjust="spacingAndGlyphs" >3245</text>
<text x="773.7" y="635.8" font-size="15.70" fill="#00e8ff" font-family='Liberation Sans,sans-serif' textLength="56.0" lengthAdjust="spacingAndGlyphs" >5006,55</text>
<text x="407.0" y="554.0" font-size="11.50" fill="#18d0e8" font-family='Liberation Sans,sans-serif' textLength="146.0" lengthAdjust="spacingAndGlyphs" >Naca0014 ruotato di 1.05°</text>
<rect x="508" y="410" width="4.500" height="9.500" fill="#00e8ff"/><rect x="815.500" y="449" width="2.500" height="9" fill="#00e8ff"/>
<path d="M1260.500 391 h6 M1260.500 404 h6 M1261 391 l5 6.500 l-5 6.500 M1266 391 l-5 6.500 l5 6.500 M1261 395 v5 M1266 395 v5" fill="none" stroke="#f0d818" stroke-width="1" />
<circle cx="1263.700" cy="397.500" r="1.200" fill="#e01010"/>
<path d="M59 178.5 L1561 178.5" fill="none" stroke="#9a9a9a" stroke-width="1" />
<path d="M148.5 147 L148.5 706" fill="none" stroke="#9a9a9a" stroke-width="1" />
<rect x="144.500" y="174.500" width="8" height="8" fill="#000" stroke="#d8d8d8" stroke-width="1"/>
<circle cx="1492" cy="215.700" r="45.300" fill="none" stroke="#333333" stroke-width="9.700"/>
<path d="M1440 178.5 L1545 178.5" fill="none" stroke="#7c7c7c" stroke-width="1" />
<rect x="1470" y="194.300" width="43.300" height="43" fill="#a6a6a6"/><rect x="1478" y="202.500" width="27" height="27" fill="#9b9b9b"/>
<text x="1491.6" y="220.0" font-size="10.50" fill="#343434" font-family='Liberation Sans,sans-serif' font-weight="bold" textLength="21.5" lengthAdjust="spacingAndGlyphs" text-anchor="middle" >ALTO</text>
<text x="1492.0" y="175.3" font-size="17.50" fill="#bdbdbd" font-family='Liberation Sans,sans-serif' font-weight="bold" text-anchor="middle" stroke="#bdbdbd" stroke-width=".6">N</text>
<text x="1491.5" y="270.0" font-size="17.50" fill="#bdbdbd" font-family='Liberation Sans,sans-serif' font-weight="bold" text-anchor="middle" stroke="#bdbdbd" stroke-width=".6">S</text>
<text x="1444.6" y="222.7" font-size="17.50" fill="#bdbdbd" font-family='Liberation Sans,sans-serif' font-weight="bold" text-anchor="middle" stroke="#bdbdbd" stroke-width=".6">O</text>
<text x="1539.0" y="222.7" font-size="17.50" fill="#bdbdbd" font-family='Liberation Sans,sans-serif' font-weight="bold" text-anchor="middle" stroke="#bdbdbd" stroke-width=".6">E</text>
<rect x="1472" y="289" width="39" height="13.700" rx="3" fill="#7d7d7d"/>
<text x="1475.6" y="299.6" font-size="10.50" fill="#bcbcbc" font-family='Liberation Sans,sans-serif' textLength="19.0" lengthAdjust="spacingAndGlyphs" >WCS</text>
<path d="M1501 293.500 h6 l-3 4z" fill="none" stroke="#b0b0b0" stroke-width=".8"/>
<text x="62.0" y="162.5" font-size="10.50" fill="#d4d4d4" font-family='Liberation Sans,sans-serif' textLength="105.0" lengthAdjust="spacingAndGlyphs" >[−][Alto][Wireframe 2D]</text>
</svg>
<div style="position:absolute;left:0.0px;top:0.0px;width:1600.0px;height:24.0px;background:#fff;"></div>
<div style="position:absolute;left:33.0px;top:0.0px;width:23.0px;height:24.0px;background:linear-gradient(#a8a8a8,#7c7c7c);border:1px solid #5a5a5a;border-top:0;box-sizing:border-box;"></div>
<svg style="position:absolute;left:34px;top:0" width="22" height="24"><rect x="7" y="7" width="8" height="1.6" fill="#fff"/><path d="M7 10.5 h8 l-4 4z" fill="#fff"/></svg>
<div style="position:absolute;left:372.0px;top:2.7px;height:20px;line-height:20px;font-size:13.00px;color:#2a2a2a;white-space:pre;letter-spacing:-0.348px;font-family:'Liberation Sans',sans-serif;">Autodesk AutoCAD 2015</div>
<div style="position:absolute;left:521.7px;top:2.7px;height:20px;line-height:20px;font-size:13.00px;color:#2a2a2a;white-space:pre;letter-spacing:-0.803px;font-family:'Liberation Sans',sans-serif;">AURUS X1_rev01.1.dwg</div>
<div style="position:absolute;left:966.0px;top:0.0px;width:462.0px;height:24.0px;background:linear-gradient(#636363,#4a4a4a);border-bottom:1px solid #333;box-sizing:border-box;"></div>
<svg style="position:absolute;left:966px;top:0" width="462" height="24" viewBox="966 0 462 24"><path d="M970 8 l4 4 l-4 4z" fill="#eee"/><rect x="981.5" y="0.5" width="185" height="22" fill="#6f6f6f" stroke="#3c3c3c"/><g fill="#e8e8e8"><rect x="1173" y="6" width="5" height="13" rx="1.5"/><rect x="1181" y="6" width="5" height="13" rx="1.5"/><rect x="1177" y="9" width="5" height="4"/></g><g fill="#555"><rect x="1174.3" y="11" width="2.4" height="6"/><rect x="1182.3" y="11" width="2.4" height="6"/></g><circle cx="1204" cy="9" r="4.2" fill="#e8e8e8"/><path d="M1196 20 q0 -7 8 -7 q8 0 8 7z" fill="#e8e8e8"/><path d="M1306 10 h6 l-3 3.5z" fill="#ddd"/><path d="M1323 5 h4 l3 4 l3 -4 h4 l-5 7 l5 7 h-4 l-3 -4 l-3 4 h-4 l5 -7z" fill="#3f6fc0" stroke="#dfe8f8" stroke-width="0.8"/><path d="M1353.5 5 l7 12 h-14z" fill="none" stroke="#e8e8e8" stroke-width="2" stroke-linejoin="round"/><circle cx="1353.5" cy="5.5" r="2" fill="#e8e8e8"/><circle cx="1347" cy="17" r="2" fill="#e8e8e8"/><circle cx="1360" cy="17" r="2" fill="#e8e8e8"/><circle cx="1353.5" cy="13" r="2.2" fill="none" stroke="#6f9fe0" stroke-width="1.2"/><path d="M1368 10 h5 l-2.5 3z" fill="#ddd"/><rect x="1384" y="3" width="1" height="18" fill="#3c3c3c"/><circle cx="1402" cy="12" r="7.5" fill="#f4f4f4" stroke="#3a5a9a" stroke-width="1"/><path d="M1418.500 10 h5 l-2.5 3z" fill="#ddd"/></svg>
<div style="position:absolute;left:984.0px;top:2.0px;height:20px;line-height:20px;font-size:12.00px;color:#c4c4c4;white-space:pre;letter-spacing:-0.369px;font-family:'Liberation Sans',sans-serif;font-style:italic;">Digitare parola chiave o frase</div>
<div style="position:absolute;left:1219.0px;top:2.0px;height:20px;line-height:20px;font-size:13.50px;color:#ececec;white-space:pre;letter-spacing:-0.586px;font-family:'Liberation Sans',sans-serif;">Accedi</div>
<div style="position:absolute;left:1398.3px;top:2.3px;height:20px;line-height:20px;font-size:12.50px;color:#2a4a9a;white-space:pre;font-family:'Liberation Sans',sans-serif;font-weight:bold;">?</div>
<svg style="position:absolute;left:1440px;top:0" width="160" height="24" viewBox="1440 0 160 24" fill="none" stroke="#9a9a9a" stroke-width="1"><path d="M1471 11.5 h10"/><rect x="1519.500" y="9.500" width="8" height="8"/><path d="M1521.500 9.500 v-2 h8 v8 h-2"/><path d="M1568 7 l9 9 M1577 7 l-9 9"/></svg>
<div style="position:absolute;left:0.0px;top:24.0px;width:1600.0px;height:23.0px;background:linear-gradient(#2e2e2e 0px,#838383 1.5px,#6a6a6a 7px,#4e4e4e 14px,#3e3e3e 20px,#383838 23px);"></div>
<div style="position:absolute;left:0.0px;top:25.0px;width:1600.0px;height:21.0px;background:linear-gradient(90deg,rgba(255,255,255,.14) 0,rgba(255,255,255,.07) 120px,rgba(255,255,255,0) 330px,rgba(255,255,255,0) 900px,rgba(255,255,255,.05) 1150px,rgba(255,255,255,.05) 1500px,rgba(255,255,255,.02) 1600px);"></div>
<div style="position:absolute;left:46.0px;top:25.8px;height:20px;line-height:20px;font-size:13.00px;color:#e9e9e9;white-space:pre;letter-spacing:-0.487px;font-family:'Liberation Sans',sans-serif;">File</div>
<div style="position:absolute;left:87.0px;top:25.8px;height:20px;line-height:20px;font-size:13.00px;color:#e9e9e9;white-space:pre;letter-spacing:0.012px;font-family:'Liberation Sans',sans-serif;">Modifica</div>
<div style="position:absolute;left:157.5px;top:25.8px;height:20px;line-height:20px;font-size:13.00px;color:#e9e9e9;white-space:pre;letter-spacing:-0.479px;font-family:'Liberation Sans',sans-serif;">Visualizza</div>
<div style="position:absolute;left:233.0px;top:25.8px;height:20px;line-height:20px;font-size:13.00px;color:#e9e9e9;white-space:pre;letter-spacing:-0.519px;font-family:'Liberation Sans',sans-serif;">Inserisci</div>
<div style="position:absolute;left:298.0px;top:25.8px;height:20px;line-height:20px;font-size:13.00px;color:#e9e9e9;white-space:pre;letter-spacing:-0.200px;font-family:'Liberation Sans',sans-serif;">Formato</div>
<div style="position:absolute;left:366.0px;top:25.8px;height:20px;line-height:20px;font-size:13.00px;color:#e9e9e9;white-space:pre;letter-spacing:-0.236px;font-family:'Liberation Sans',sans-serif;">Strumenti</div>
<div style="position:absolute;left:442.0px;top:25.8px;height:20px;line-height:20px;font-size:13.00px;color:#e9e9e9;white-space:pre;letter-spacing:-0.528px;font-family:'Liberation Sans',sans-serif;">Disegna</div>
<div style="position:absolute;left:508.0px;top:25.8px;height:20px;line-height:20px;font-size:13.00px;color:#e9e9e9;white-space:pre;letter-spacing:-0.201px;font-family:'Liberation Sans',sans-serif;">Quotatura</div>
<div style="position:absolute;left:586.0px;top:25.8px;height:20px;line-height:20px;font-size:13.00px;color:#e9e9e9;white-space:pre;letter-spacing:-0.326px;font-family:'Liberation Sans',sans-serif;">Edita</div>
<div style="position:absolute;left:636.0px;top:25.8px;height:20px;line-height:20px;font-size:13.00px;color:#e9e9e9;white-space:pre;letter-spacing:-0.461px;font-family:'Liberation Sans',sans-serif;">Parametrico</div>
<div style="position:absolute;left:724.0px;top:25.8px;height:20px;line-height:20px;font-size:13.00px;color:#e9e9e9;white-space:pre;letter-spacing:-0.620px;font-family:'Liberation Sans',sans-serif;">Finestra</div>
<div style="position:absolute;left:788.5px;top:25.8px;height:20px;line-height:20px;font-size:13.00px;color:#e9e9e9;white-space:pre;letter-spacing:-1.229px;font-family:'Liberation Sans',sans-serif;">?</div>
<svg style="position:absolute;left:1555px;top:24px" width="45" height="23" viewBox="1555 24 45 23" fill="none" stroke="#e0e0e0" stroke-width="1.3"><path d="M1561.500 38 h7" stroke-width="1.6"/><rect x="1574.700" y="33.700" width="6" height="5"/><path d="M1576.700 33.700 v-2 h6 v5 h-2"/><path d="M1590 32 l6 6 M1596 32 l-6 6" stroke-width="1.7"/></svg>
<div style="position:absolute;left:0.0px;top:0.0px;width:33.0px;height:33.0px;background:linear-gradient(#bcc0c4,#9a9c9e 55%,#858585);border-right:1px solid #4a4a4a;border-bottom:1.5px solid #3a3a3a;box-sizing:border-box;z-index:5;"></div>
<svg style="position:absolute;left:0;top:0;z-index:6" width="33" height="33" viewBox="0 0 33 33"><path d="M13 4.200 L3.300 20.300 L6.700 24.200 L9.500 21.300 L16.500 21.300 L18.700 24.200 L22.300 20.300 Z" fill="#c41a14"/><path d="M13 4.200 L15 8 L10 18 L6.700 24.200 L3.300 20.300Z" fill="#d8281e"/><path d="M11 15 l4 -3 l3 6 l-9 1z" fill="#b01410" opacity=".8"/><path d="M25 14.200 h6 l-3 3.300z" fill="#2c3c46"/></svg>
<div style="position:absolute;left:0.0px;top:47.0px;width:1600.0px;height:27.0px;background:#3a3a3a;"></div>
<svg style="position:absolute;left:0;top:47px" width="400" height="28" viewBox="0 47 400 28"><path d="M14 72 C22 72 22 50.500 30 50.500 L140 50.500 C150 50.500 150 72 158 72 Z" fill="url(#tabi)" stroke="#2c2c2c"/><rect x="0" y="72" width="400" height="3" fill="#595959"/><defs><linearGradient id="tabg" x1="0" y1="0" x2="0" y2="1"><stop offset="0" stop-color="#666"/><stop offset=".5" stop-color="#5c5c5c"/><stop offset="1" stop-color="#5a5a5a"/></linearGradient><linearGradient id="tabi" x1="0" y1="0" x2="0" y2="1"><stop offset="0" stop-color="#545454"/><stop offset="1" stop-color="#444"/></linearGradient></defs><path d="M140 75 C152 75 150 49.500 160 49.500 L288 49.500 C298 49.500 296 75 308 75 Z" fill="url(#tabg)" stroke="#2a2a2a"/><rect x="141" y="73" width="166" height="3" fill="#595959"/><path d="M305 69 q2 -15 5 -15.500 h12 q4 0 3.500 4 l-1.500 11.500z" fill="#4c4c4c" stroke="#303030"/><path d="M276.500 56.500 l7 7 M283.500 56.500 l-7 7" stroke="#8a8a8a" stroke-width="1.8"/><path d="M312 61.500 h7 M315.500 58 v7" stroke="#e0e0e0" stroke-width="1.8"/></svg>
<div style="position:absolute;left:400.0px;top:72.0px;width:1200.0px;height:2.0px;background:#595959;"></div>
<div style="position:absolute;left:33.0px;top:51.6px;height:20px;line-height:20px;font-size:13.00px;color:#a6a6a6;white-space:pre;letter-spacing:-0.509px;font-family:'Liberation Sans',sans-serif;">Nuova scheda</div>
<div style="position:absolute;left:161.0px;top:51.6px;height:20px;line-height:20px;font-size:13.00px;color:#f2f2f2;white-space:pre;letter-spacing:-0.863px;font-family:'Liberation Sans',sans-serif;">AURUS X1_rev01.1*</div>
<svg style="position:absolute;left:0;top:74px" width="1600" height="74" viewBox="0 74 1600 74">
<defs>
<linearGradient id="gW" x1="0" y1="0" x2="0" y2="1"><stop offset="0" stop-color="#ffffff"/><stop offset="1" stop-color="#c4c9d2"/></linearGradient>
<linearGradient id="gW2" x1="0" y1="0" x2="1" y2="1"><stop offset="0" stop-color="#ffffff"/><stop offset="1" stop-color="#b9bec8"/></linearGradient>
<linearGradient id="gB" x1="0" y1="0" x2="0" y2="1"><stop offset="0" stop-color="#b4d0f4"/><stop offset="1" stop-color="#4f88d8"/></linearGradient>
<linearGradient id="gBh" x1="0" y1="0" x2="1" y2="0"><stop offset="0" stop-color="#f4f6fa"/><stop offset="1" stop-color="#6fa0e4"/></linearGradient>
<linearGradient id="gG" x1="0" y1="0" x2="0" y2="1"><stop offset="0" stop-color="#e8eaee"/><stop offset="1" stop-color="#8d939e"/></linearGradient>
<radialGradient id="gS" cx="0.35" cy="0.3" r="0.8"><stop offset="0" stop-color="#ffffff"/><stop offset="0.6" stop-color="#e4e6ea"/><stop offset="1" stop-color="#9a9ea6"/></radialGradient>
<radialGradient id="gSB" cx="0.35" cy="0.3" r="0.8"><stop offset="0" stop-color="#9cc4ff"/><stop offset="0.5" stop-color="#3d7be0"/><stop offset="1" stop-color="#1a3f90"/></radialGradient>
<radialGradient id="gSC" cx="0.4" cy="0.25" r="0.8"><stop offset="0" stop-color="#ffd84a"/><stop offset="0.35" stop-color="#f08a3a"/><stop offset="0.65" stop-color="#8a5ac8"/><stop offset="1" stop-color="#3a3a9a"/></radialGradient>
<linearGradient id="gGB" x1="0" y1="0" x2="0" y2="1"><stop offset="0" stop-color="#7a8494"/><stop offset="1" stop-color="#c4d4e8"/></linearGradient></defs>
<rect x="0" y="74" width="1600" height="74" fill="#5a5a5a"/>
<rect x="0" y="72" width="1600" height="3" fill="#4c4c4c"/>
<rect x="0.5" y="75.5" width="864" height="31.5" fill="#5b5b5b" stroke="#474747" stroke-width="1"/><rect x="1" y="76" width="6" height="30.5" fill="#535353"/>
<rect x="865.5" y="75.5" width="591" height="31.5" fill="#5b5b5b" stroke="#474747" stroke-width="1"/><rect x="866" y="76" width="6" height="30.5" fill="#535353"/>
<rect x="0.5" y="111.5" width="566" height="32" fill="#5b5b5b" stroke="#474747" stroke-width="1"/><rect x="1" y="112" width="6" height="31" fill="#535353"/>
<rect x="567.5" y="111.5" width="385" height="32" fill="#5b5b5b" stroke="#474747" stroke-width="1"/><rect x="568" y="112" width="6" height="31" fill="#535353"/>
<rect x="954.5" y="111.5" width="485" height="32" fill="#5b5b5b" stroke="#474747" stroke-width="1"/><rect x="955" y="112" width="6" height="31" fill="#535353"/>
<rect x="1441.5" y="111.5" width="104" height="32" fill="#5b5b5b" stroke="#474747" stroke-width="1"/><rect x="1442" y="112" width="6" height="31" fill="#535353"/>
<path d="M2.5 78 v12 M4.5 78 v12" stroke="#2e2e2e" stroke-width="1" stroke-dasharray="1 1"/>
<path d="M868.5 78 v12 M870.5 78 v12" stroke="#2e2e2e" stroke-width="1" stroke-dasharray="1 1"/>
<path d="M2.5 113 v12 M4.5 113 v12" stroke="#2e2e2e" stroke-width="1" stroke-dasharray="1 1"/>
<path d="M570.5 113 v12 M572.5 113 v12" stroke="#2e2e2e" stroke-width="1" stroke-dasharray="1 1"/>
<path d="M957.5 113 v12 M959.5 113 v12" stroke="#2e2e2e" stroke-width="1" stroke-dasharray="1 1"/>
<path d="M1444.5 113 v12 M1446.5 113 v12" stroke="#2e2e2e" stroke-width="1" stroke-dasharray="1 1"/>
<defs><filter id="ish" x="-20%" y="-20%" width="140%" height="150%"><feDropShadow dx="0.4" dy="0.9" stdDeviation="0.7" flood-color="#1e1e1e" flood-opacity=".9"/></filter></defs><g filter="url(#ish)">
<g transform="translate(22 91)"><path d="M-11 -10 h16 l6 6 v15 h-22z" fill="url(#gW)" stroke="#fff" stroke-width="0.8"/><path d="M5 -10 v6 h6" fill="#d0d4da" stroke="#fff" stroke-width="0.8"/></g>
<g transform="translate(54 91)"><path d="M-11 8 v-15 h7 l2 2 h8 v4" fill="#c9cdd4" stroke="#f0f0f0" stroke-width="1"/><path d="M-11 9 l5 -9 h18 l-5 9z" fill="url(#gW)" stroke="#fff" stroke-width="0.8"/></g>
<g transform="translate(87 91)"><rect x="-10" y="-10" width="20" height="20" rx="1.5" fill="#5a606c" stroke="#8c929c" stroke-width="1"/><rect x="-6" y="-10" width="12" height="8" fill="#e8eaee"/><rect x="-5" y="2" width="10" height="8" fill="#2a2e36"/><rect x="-1" y="4" width="4" height="5" fill="#d8dade"/></g>
<path d="M106.5 78 V105" stroke="#484848" stroke-width="1"/><path d="M107.5 78 V105" stroke="#878787" stroke-width="1"/>
<g transform="translate(124 91)"><rect x="-7" y="-11" width="14" height="8" fill="url(#gW)" stroke="#fff" stroke-width=".6"/><rect x="-11" y="-4" width="22" height="10" rx="1.5" fill="url(#gG)" stroke="#f0f0f0" stroke-width=".8"/><rect x="-8" y="5" width="16" height="5" fill="#a8c8f0" stroke="#e8eefa" stroke-width=".6"/></g>
<g transform="translate(157 91)"><path d="M-10 -11 h12 l5 5 v15 h-17 z" fill="url(#gW)" stroke="#fafafa" stroke-width="0.8"/><circle cx="3" cy="5" r="4" fill="#e8eef8" stroke="#f4f4f4" stroke-width="1.6"/><path d="M5.8 7.8 l5 5" stroke="#dcdcdc" stroke-width="2.6" stroke-linecap="round"/></g>
<g transform="translate(189 91)"><rect x="-8" y="-11" width="13" height="7" fill="url(#gW)" stroke="#fff" stroke-width=".6"/><rect x="-11" y="-5" width="20" height="9" rx="1.5" fill="url(#gG)" stroke="#f0f0f0" stroke-width=".8"/><rect x="-8" y="3" width="12" height="5" fill="#dfe4ec"/><path d="M1 7 h6 v-3 l5 4.500 l-5 4.500 v-3 h-6z" fill="#3f80e0" stroke="#2458b0" stroke-width=".6"/></g>
<g transform="translate(222 91)"><path d="M-11 -2 l8 -4 l10 3 v9 l-9 5 l-9 -4z" fill="url(#gW2)" stroke="#fff" stroke-width=".7"/><path d="M-11 -2 l9 4 l9 -5 M-2 2 v9" stroke="#b8bcc6" fill="none"/><circle cx="4" cy="-4" r="7" fill="#3f7fd8"/><path d="M-1 -7 q5 -4 10 1 q-4 6 -10 -1" fill="#f0a030"/><path d="M0 -1 q5 3 9 -1" stroke="#e04020" stroke-width="1.5" fill="none"/><circle cx="2" cy="-7" r="2" fill="#bfe0ff" opacity=".8"/></g>
<path d="M241.5 78 V105" stroke="#484848" stroke-width="1"/><path d="M242.5 78 V105" stroke="#878787" stroke-width="1"/>
<g transform="translate(260 91)"><path d="M-8 -11 L3 4 M8 -11 L-3 4" stroke="#f0f2f6" stroke-width="3.2" stroke-linecap="round"/><path d="M-8 -11 L2 3 M8 -11 L-2 3" stroke="#c4c8d0" stroke-width="1"/><circle cx="-6" cy="7" r="3.2" fill="none" stroke="#c8c8c8" stroke-width="2.2"/><circle cx="6" cy="7" r="3.200" fill="none" stroke="#c8c8c8" stroke-width="2.2"/></g>
<g transform="translate(292 91)"><circle cx="-6" cy="-6" r="4.3" fill="url(#gS)"/><circle cx="3" cy="5" r="5" fill="#6ea0e4" stroke="#a8c8f4" stroke-width=".8"/><circle cx="6" cy="3" r="4.5" fill="#8ab4ec" stroke="#c0d8f8" stroke-width=".8" opacity=".9"/><path d="M0 -8 q7 -1 8 4" stroke="#e8e8e8" stroke-width="1.3" fill="none"/><path d="M5.500 -4.500 h5 l-2.500 3z" fill="#e8e8e8"/></g>
<g transform="translate(325 91)"><rect x="-10" y="-9" width="16" height="19" rx="1" fill="#c8bca0" stroke="#e8e0cc" stroke-width=".8"/><rect x="-6" y="-11.500" width="8" height="4" rx="1" fill="#8a8a8a" stroke="#ddd" stroke-width=".6"/><path d="M-2 -3 h8 l4 4 v10 h-12z" fill="url(#gW)" stroke="#fff" stroke-width=".7"/></g>
<g transform="translate(357 91)"><rect x="-10" y="-11" width="15" height="21" fill="#f4f6fa" stroke="#fff" stroke-width=".6"/><rect x="-8.500" y="-9.500" width="12" height="8" fill="#3a6cc0"/><path d="M-7 2 h9 M-7 6 h9" stroke="#6a7080" stroke-width="1.2"/><path d="M4 8 l7 -7" stroke="#d08a30" stroke-width="2.6" stroke-linecap="round"/><path d="M1 11 l4 -4 l2 2z" fill="#7a3a10"/></g>
<g transform="translate(390 91)"><rect x="-10" y="-4" width="12" height="9" fill="url(#gW)" stroke="#fff" stroke-width=".6"/><circle cx="4" cy="6" r="5" fill="url(#gS)"/><path d="M6 -11 l-5 8 h4 l-3 7 l8 -9 h-4 l4 -6z" fill="#f8a020" stroke="#f8e060" stroke-width=".6"/><rect x="-12" y="3" width="3" height="3" fill="#4f8ae0"/></g>
<path d="M408.5 78 V105" stroke="#484848" stroke-width="1"/><path d="M409.5 78 V105" stroke="#878787" stroke-width="1"/>
<g transform="translate(424.5 91)"><path d="M-9.500 -1 L-3 -8 V-4.500 H9 V8 H4 V2.500 H-3 V6Z" fill="#cfcfcf" stroke="#fdfdfd" stroke-width="1.300" stroke-linejoin="round"/></g>
<g transform="translate(464.5 91)"><path d="M9.500 -1 L3 -8 V-4.500 H-9 V8 H-4 V2.500 H3 V6Z" fill="#bcbcbc" stroke="#ececec" stroke-width="1.300" stroke-linejoin="round"/></g>
<path d="M493.5 78 V105" stroke="#484848" stroke-width="1"/><path d="M494.5 78 V105" stroke="#878787" stroke-width="1"/>
<g transform="translate(512.5 91)"><path d="M-6 11 q-4 -5 -6 -10 q1 -2 3 0 l2 3 v-11 q1.500 -2 3 0 v7 v-10 q1.500 -2 3 0 v10 v-9 q1.500 -2 3 0 v10 v-6 q1.500 -2 3 0 v9 q0 4 -3 8z" fill="#f6f6f6" stroke="#c8c8c8" stroke-width=".6"/></g>
<g transform="translate(544.5 91)"><circle cx="-3" cy="-3" r="7.500" fill="#f4f4f4"/><path d="M-3 -8 v5 h4" stroke="#555" stroke-width="1.3" fill="none"/><circle cx="5" cy="5" r="3.2" fill="#e8eef8" stroke="#f4f4f4" stroke-width="1.6"/><path d="M7.24 7.24 l5 5" stroke="#dcdcdc" stroke-width="2.6" stroke-linecap="round"/></g>
<g transform="translate(576 91)"><rect x="-11" y="-11" width="17" height="17" fill="none" stroke="#d8d8d8" stroke-width="1.2"/><circle cx="4" cy="4" r="3.2" fill="#e8eef8" stroke="#f4f4f4" stroke-width="1.6"/><path d="M6.24 6.24 l5 5" stroke="#dcdcdc" stroke-width="2.6" stroke-linecap="round"/><path d="M9 12 h3 v-3z" fill="#111"/></g>
<g transform="translate(609 91)"><path d="M-11 -5 l7 -6 v3.500 h7 v5 h-7 v3.500z" fill="#8fa8cc" stroke="#c8d4e8" stroke-width=".7"/><circle cx="3" cy="4" r="3.2" fill="#e8eef8" stroke="#f4f4f4" stroke-width="1.6"/><path d="M5.24 6.24 l5 5" stroke="#dcdcdc" stroke-width="2.6" stroke-linecap="round"/></g>
<path d="M628.5 78 V105" stroke="#484848" stroke-width="1"/><path d="M629.5 78 V105" stroke="#878787" stroke-width="1"/>
<g transform="translate(647 91)"><rect x="-8" y="-11" width="16" height="22" fill="#f4f6fa" stroke="#fff" stroke-width=".7"/><rect x="-6.500" y="-9.500" width="13" height="8" fill="#3a6cc0"/><path d="M-6 2 h12 M-6 6 h12" stroke="#5a6070" stroke-width="1.2"/><rect x="-3" y="0.500" width="2.500" height="3" fill="#2a4a9a"/><rect x="2" y="4.500" width="2.500" height="3" fill="#2a4a9a"/></g>
<g transform="translate(680 91)"><rect x="-11" y="-11" width="22" height="22" fill="#f0f2f6" stroke="#fff" stroke-width=".7"/><path d="M-3 -11 v22" stroke="#8a909c" stroke-width="1"/><path d="M-9 -8 h4 M-9 -5 h4 M-9 -2 h4 M-9 1 h4 M-9 4 h4 M-9 7 h4" stroke="#6a7080" stroke-width="1.2"/><rect x="-1" y="-8" width="4" height="4" fill="none" stroke="#6a7080"/><rect x="5" y="-8" width="4" height="4" fill="none" stroke="#6a7080"/><rect x="-1" y="-2" width="4" height="4" fill="none" stroke="#6a7080"/><rect x="5" y="-2" width="4" height="4" fill="none" stroke="#6a7080"/><rect x="0" y="4" width="8" height="5" fill="#9aa0ac"/></g>
<g transform="translate(711 91)"><rect x="-8" y="-11" width="15" height="22" rx="1" fill="url(#gW)" stroke="#fff" stroke-width=".8"/><g fill="#9097a2"><rect x="-5.500" y="-8" width="4" height="3.500"/><rect x="0.500" y="-8" width="4" height="3.500"/><rect x="-5.500" y="-3" width="4" height="3.500"/><rect x="0.500" y="-3" width="4" height="3.500"/><rect x="-5.500" y="2" width="4" height="3.500"/><rect x="0.500" y="2" width="4" height="3.500"/><rect x="-5.500" y="7" width="4" height="2.500"/><rect x="0.500" y="7" width="4" height="2.500"/></g><rect x="7" y="-5" width="2" height="6" fill="#c8c8c8"/></g>
<g transform="translate(744 91)"><path d="M-11 2 l10 -8 l12 5 l-10 8z" fill="url(#gW)" stroke="#fff" stroke-width=".7"/><path d="M-11 6 l10 -8 l12 5 l-10 8z" fill="url(#gW)" stroke="#e0e0e0" stroke-width=".7"/><path d="M-1 -10 q5 -2 8 2 l4 6 q-3 -3 -7 -1z" fill="#d8dce4" stroke="#fff" stroke-width=".6"/><circle cx="8" cy="4" r="2.500" fill="none" stroke="#d0d0d0"/></g>
<g transform="translate(777.5 91)"><path d="M-10 -4 q-2 -5 3 -5 q2 -4 6 -1 q5 -2 5 3 q3 3 -1 5 h-10 q-5 0 -3 -2z" fill="#eceef2" stroke="#fff" stroke-width=".6"/><rect x="-9" y="-1" width="10" height="10" fill="#d8dce4" stroke="#fff" stroke-width=".6"/><rect x="0" y="1" width="11" height="10" fill="#f4f6fa" stroke="#8a909c" stroke-width=".8"/><path d="M2 4 h7 M2 7 h7" stroke="#4a70b0" stroke-width="1.2"/></g>
<g transform="translate(810 91)"><rect x="-8" y="-11" width="16" height="22" rx="1.500" fill="url(#gW)" stroke="#fff" stroke-width=".8"/><rect x="-6" y="-9" width="12" height="5" fill="#8a929e" stroke="#5a6068" stroke-width=".5"/><g fill="#5f6672"><rect x="-6" y="-2" width="3" height="2.800"/><rect x="-1.500" y="-2" width="3" height="2.800"/><rect x="3" y="-2" width="3" height="2.800"/><rect x="-6" y="2" width="3" height="2.800"/><rect x="-1.500" y="2" width="3" height="2.800"/><rect x="3" y="2" width="3" height="2.800"/><rect x="-6" y="6" width="3" height="2.800"/><rect x="-1.500" y="6" width="3" height="2.800"/><rect x="3" y="6" width="3" height="2.800"/></g></g>
<path d="M828.5 78 V105" stroke="#484848" stroke-width="1"/><path d="M829.5 78 V105" stroke="#878787" stroke-width="1"/>
<g transform="translate(847.5 91)"><rect x="-11" y="-10" width="22" height="21" rx="2" fill="url(#gW)" stroke="#fff" stroke-width=".8"/><text x="0" y="7.500" font-size="20" font-weight="bold" font-family="Liberation Sans,sans-serif" text-anchor="middle" fill="#222">?</text></g>
<g transform="translate(889 91)"><path d="M-3 4 l10 -12" stroke="#f0a040" stroke-width="3" stroke-linecap="round"/><path d="M-7 8 l4 -5 l2.500 2z" fill="#c02020"/><path d="M-5 5.500 l3 -3" stroke="#e03030" stroke-width="3.500" stroke-linecap="round"/><path d="M-11 9.500 h16" stroke="#c8c8c8" stroke-width="1"/></g>
<g transform="translate(921 91)"><circle cx="-6" cy="-6" r="4.3" fill="url(#gS)"/><circle cx="3" cy="5" r="5" fill="#6ea0e4" stroke="#a8c8f4" stroke-width=".8"/><circle cx="6" cy="3" r="4.5" fill="#8ab4ec" stroke="#c0d8f8" stroke-width=".8" opacity=".9"/><path d="M0 -8 q7 -1 8 4" stroke="#e8e8e8" stroke-width="1.3" fill="none"/><path d="M5.500 -4.500 h5 l-2.500 3z" fill="#e8e8e8"/></g>
<g transform="translate(953 91)"><path d="M-2.500 -10 v19 h-9z" fill="url(#gW)" stroke="#fff" stroke-width=".5"/><path d="M2.500 -10 v19 h9z" fill="url(#gB)" stroke="#c8dcf8" stroke-width=".5"/><path d="M0 -12 v23" stroke="#e0e0e0" stroke-width=".8"/></g>
<g transform="translate(986 91)"><path d="M-10 9 v-8 q0 -3 3 -3 h1 v-5 q0 -3 3 -3 h6 q3 0 3 4 v1 h5 M-10 9 h20" fill="none" stroke="#5f98e4" stroke-width="1.700" stroke-linejoin="round"/><path d="M-7 6 v-4 h3 v-8 h5 v5 h8" fill="none" stroke="#9aa0a8" stroke-width=".6"/></g>
<g transform="translate(1017.5 91)"><rect x="-11" y="-11" width="9" height="9" fill="url(#gW)" stroke="#fff" stroke-width=".5"/><rect x="2" y="-11" width="9" height="9" fill="url(#gB)" stroke="#c0d8f8" stroke-width=".5"/><rect x="-11" y="2" width="9" height="9" fill="url(#gB)" stroke="#c0d8f8" stroke-width=".5"/><rect x="2" y="2" width="9" height="9" fill="url(#gB)" stroke="#c0d8f8" stroke-width=".5"/><path d="M9 12.500 h3.500 v-3.500z" fill="#111"/></g>
<g transform="translate(1051 91)"><path d="M0 -12 l4 5 h-2.500 v5.500 h5.500 v-2.500 l5 4 l-5 4 v-2.500 h-5.500 v5.500 h2.500 l-4 5 l-4 -5 h2.500 v-5.500 h-5.500 v2.500 l-5 -4 l5 -4 v2.500 h5.500 v-5.500 h-2.500z" fill="#f6f6f6"/><rect x="-2.500" y="-2.500" width="5" height="5" fill="#dfe8f8" stroke="#4f88d8" stroke-width="1.1"/></g>
<g transform="translate(1083 91)"><path d="M-1 -8.500 a9.500 9.500 0 1 0 8 4" fill="none" stroke="#f0f0f0" stroke-width="1.800"/><path d="M-4 -12 l8 2.500 l-7 5z" fill="#4f8ae0"/></g>
<g transform="translate(1115 91)"><rect x="-11" y="-11" width="22" height="22" fill="url(#gBh)" stroke="#c0d8f8" stroke-width=".6"/><rect x="-11" y="0" width="12" height="11" fill="url(#gW)" stroke="#fff" stroke-width=".6"/></g>
<g transform="translate(1148 91)"><path d="M-10 -11 h10 v21 h-10z" fill="url(#gW)" stroke="#fff" stroke-width=".5"/><path d="M0 -11 h5 l5 21 h-10z" fill="url(#gB)" stroke="#c8dcf8" stroke-width=".5"/><path d="M-6 8 h12" stroke="#111" stroke-width="1"/><path d="M5 5.500 l4 2.500 l-4 2.500z" fill="#111"/></g>
<g transform="translate(1181 91)"><path d="M-12 2 h8" stroke="#dcdcdc" stroke-width="1.300"/><path d="M5 2 h2.500 M9 2 h2.500" stroke="#5f98e4" stroke-width="1.300"/><path d="M-3 9 l7 -17" stroke="#5f98e4" stroke-width="1.300"/><path d="M-2 2 h2.500" stroke="#5f98e4" stroke-width="1.300"/></g>
<g transform="translate(1212.5 91)"><path d="M-12 2 h4 M-6 2 h3 M-1 2 h3" stroke="#d8d8d8" stroke-width="1.300"/><path d="M4 9 l7 -17" stroke="#5f98e4" stroke-width="1.500"/></g>
<g transform="translate(1246 91)"><rect x="-11" y="-6" width="22" height="15" fill="url(#gW)" stroke="#fff" stroke-width=".7"/><rect x="5" y="-9" width="3.500" height="4" fill="#6fa0e8"/></g>
<g transform="translate(1278 91)"><rect x="-11" y="-6" width="22" height="15" fill="url(#gW)" stroke="#fff" stroke-width=".7"/><rect x="-6" y="-9" width="3.500" height="4" fill="#6fa0e8"/><rect x="4" y="-9" width="3.500" height="4" fill="#6fa0e8"/></g>
<g transform="translate(1311 91)"><path d="M-12 0 h7 M5 0 h7" stroke="#e0e0e0" stroke-width="1.200"/><path d="M-7 -4.500 l6 4.500 l-6 4.500z M7 -4.500 l-6 4.500 l6 4.500z" fill="#5f98e4"/></g>
<g transform="translate(1343 91)"><path d="M-10 10 h21 v-20 h-8z" fill="url(#gW)" stroke="#e8e8e8" stroke-width=".6"/><path d="M-11 8 l15 -19" stroke="#5f98e4" stroke-width="1.600"/></g>
<g transform="translate(1375 91)"><path d="M-10 10 h21 v-20 h-7 q-14 0 -14 20z" fill="url(#gW)" stroke="#e8e8e8" stroke-width=".6"/><path d="M-11 8 q0 -19 16 -19" fill="none" stroke="#5f98e4" stroke-width="1.600"/></g>
<g transform="translate(1409 91)"><path d="M-11 11 l3 -10 M8 -4 l3 -8" stroke="#b8b8b8" stroke-width="1.100"/><path d="M-8 1 q4 -8 8 -2 q4 6 8 -3" fill="none" stroke="#4f8ae0" stroke-width="1.600"/><circle cx="-8" cy="1" r="2" fill="#4f8ae0" stroke="#111" stroke-width=".6"/><circle cx="8" cy="-4" r="2" fill="#4f8ae0" stroke="#111" stroke-width=".6"/></g>
<g transform="translate(1440.5 91)"><g stroke="#d4e4fa" stroke-width=".6"><path d="M-3 -9 l8 -2 l5 3 l-8 2z" fill="#b4d0f4"/><path d="M2 -6 l8 -2 v7 l-8 2z" fill="#5f98e4"/><path d="M-11 -2 l4 -3 v7 l-4 3z" fill="#7fb0ec"/><path d="M-6 1 h8 v8 h-8z" fill="#8ab4ec"/><path d="M-6 1 l3 -3 h8 l-3 3z" fill="#c4dcf8"/><path d="M2 1 l3 -3 v8 l-3 3z" fill="#4f88d8"/><path d="M7 2 l5 -3 v7 l-5 3z" fill="#5f98e4"/></g></g>
<path d="M441 86 h7 l-3.500 4z" fill="#2f4a5c"/><path d="M481 86 h7 l-3.500 4z" fill="#7a7a7a"/>
<g transform="translate(22 126.5)"><path d="M-11 -11 h14 l5 5 v9 h-19z" fill="url(#gW)" stroke="#fff" stroke-width=".6"/><circle cx="-3" cy="1" r="5" fill="#e4e8f0" stroke="#8a9098" stroke-width="1.500"/><path d="M-7 5 l-4 4" stroke="#8a9098" stroke-width="2.200"/><rect x="0" y="2" width="11" height="10" fill="#f4f6fa" stroke="#5a6070" stroke-width=".8"/><rect x="1" y="3" width="9" height="2.500" fill="#3a6cc0"/><path d="M2 7.500 h7 M2 10 h7" stroke="#4a70b0" stroke-width="1"/></g>
<path d="M41.5 113 V141" stroke="#484848" stroke-width="1"/><path d="M42.5 113 V141" stroke="#878787" stroke-width="1"/>
<g transform="translate(60 126.5)"><path d="M-11 -6 l6 -5 h16 v16 l-6 6 h-16z" fill="#f4f5f8" stroke="#fff" stroke-width=".8"/><path d="M-11 -6 l6 -5 h16 l-6 5z" fill="url(#gG)" opacity=".85"/><path d="M-11 -6 h16 v17 M5 -6 l6 -5 M-5 -11 v16 h16 M-5 5 l-6 6" fill="none" stroke="#9a9ea8" stroke-width=".7"/><path d="M-11 -6 l6 -5 h16 v16 l-6 6 h-16z" fill="none" stroke="#fff" stroke-width="1"/></g>
<g transform="translate(92 126.5)"><path d="M-11 -6 l6 -5 h16 v16 l-6 6 h-16z" fill="#f4f5f8" stroke="#fff" stroke-width=".8"/><path d="M-11 11 l6 -6 h16 l-6 6z" fill="url(#gG)" opacity=".85"/><path d="M-11 -6 h16 v17 M5 -6 l6 -5 M-5 -11 v16 h16 M-5 5 l-6 6" fill="none" stroke="#9a9ea8" stroke-width=".7"/><path d="M-11 -6 l6 -5 h16 v16 l-6 6 h-16z" fill="none" stroke="#fff" stroke-width="1"/></g>
<g transform="translate(125 126.5)"><path d="M-11 -6 l6 -5 h16 v16 l-6 6 h-16z" fill="#f4f5f8" stroke="#fff" stroke-width=".8"/><path d="M-11 -6 l6 -5 v16 l-6 6z" fill="url(#gG)" opacity=".85"/><path d="M-11 -6 h16 v17 M5 -6 l6 -5 M-5 -11 v16 h16 M-5 5 l-6 6" fill="none" stroke="#9a9ea8" stroke-width=".7"/><path d="M-11 -6 l6 -5 h16 v16 l-6 6 h-16z" fill="none" stroke="#fff" stroke-width="1"/></g>
<g transform="translate(157 126.5)"><path d="M-11 -6 l6 -5 h16 v16 l-6 6 h-16z" fill="#f4f5f8" stroke="#fff" stroke-width=".8"/><path d="M5 -6 l6 -5 v16 l-6 6z" fill="url(#gG)" opacity=".85"/><path d="M-11 -6 h16 v17 M5 -6 l6 -5 M-5 -11 v16 h16 M-5 5 l-6 6" fill="none" stroke="#9a9ea8" stroke-width=".7"/><path d="M-11 -6 l6 -5 h16 v16 l-6 6 h-16z" fill="none" stroke="#fff" stroke-width="1"/></g>
<g transform="translate(190 126.5)"><path d="M-11 -6 l6 -5 h16 v16 l-6 6 h-16z" fill="#f4f5f8" stroke="#fff" stroke-width=".8"/><path d="M-11 -6 h16 v17 h-16z" fill="url(#gG)" opacity=".85"/><path d="M-11 -6 h16 v17 M5 -6 l6 -5 M-5 -11 v16 h16 M-5 5 l-6 6" fill="none" stroke="#9a9ea8" stroke-width=".7"/><path d="M-11 -6 l6 -5 h16 v16 l-6 6 h-16z" fill="none" stroke="#fff" stroke-width="1"/></g>
<g transform="translate(222 126.5)"><path d="M-11 -6 l6 -5 h16 v16 l-6 6 h-16z" fill="#f4f5f8" stroke="#fff" stroke-width=".8"/><path d="M-5 -11 h16 v16 h-16z" fill="url(#gG)" opacity=".85"/><path d="M-11 -6 h16 v17 M5 -6 l6 -5 M-5 -11 v16 h16 M-5 5 l-6 6" fill="none" stroke="#9a9ea8" stroke-width=".7"/><path d="M-11 -6 l6 -5 h16 v16 l-6 6 h-16z" fill="none" stroke="#fff" stroke-width="1"/></g>
<path d="M241.5 113 V141" stroke="#484848" stroke-width="1"/><path d="M242.5 113 V141" stroke="#878787" stroke-width="1"/>
<g transform="translate(260 126.5)"><path d="M0 -12 L8.700 -2.500 L8.700 5 L0 13 L-8.700 5 L-8.700 -2.500Z" fill="#f8f9fb" stroke="#fff" stroke-width="1"/><path d="M-8.700 -2.500 L-4.500 1 L0 6 L0 13 L-8.700 5Z" fill="#9aa6bc" opacity=".85"/><path d="M0 -5 L4.500 1 L0 6 L-4.500 1Z M0 -12 V-5 M8.700 -2.500 L4.500 1 M-8.700 -2.500 L-4.500 1 M0 6 V13" fill="none" stroke="#a8aeb8" stroke-width=".7"/></g>
<g transform="translate(292 126.5)"><path d="M0 -12 L8.700 -2.500 L8.700 5 L0 13 L-8.700 5 L-8.700 -2.500Z" fill="#f8f9fb" stroke="#fff" stroke-width="1"/><path d="M8.700 -2.500 L4.500 1 L0 6 L0 13 L8.700 5Z" fill="#9aa6bc" opacity=".85"/><path d="M0 -5 L4.500 1 L0 6 L-4.500 1Z M0 -12 V-5 M8.700 -2.500 L4.500 1 M-8.700 -2.500 L-4.500 1 M0 6 V13" fill="none" stroke="#a8aeb8" stroke-width=".7"/></g>
<g transform="translate(325 126.5)"><path d="M0 -12 L8.700 -2.500 L8.700 5 L0 13 L-8.700 5 L-8.700 -2.500Z" fill="#f8f9fb" stroke="#fff" stroke-width="1"/><path d="M0 -12 L8.700 -2.500 L8.700 5 L4.500 1 L0 -5Z" fill="#9aa6bc" opacity=".85"/><path d="M0 -5 L4.500 1 L0 6 L-4.500 1Z M0 -12 V-5 M8.700 -2.500 L4.500 1 M-8.700 -2.500 L-4.500 1 M0 6 V13" fill="none" stroke="#a8aeb8" stroke-width=".7"/></g>
<g transform="translate(357 126.5)"><path d="M0 -12 L8.700 -2.500 L8.700 5 L0 13 L-8.700 5 L-8.700 -2.500Z" fill="#f8f9fb" stroke="#fff" stroke-width="1"/><path d="M0 -12 L-8.700 -2.500 L-8.700 5 L-4.500 1 L0 -5Z" fill="#9aa6bc" opacity=".85"/><path d="M0 -5 L4.500 1 L0 6 L-4.500 1Z M0 -12 V-5 M8.700 -2.500 L4.500 1 M-8.700 -2.500 L-4.500 1 M0 6 V13" fill="none" stroke="#a8aeb8" stroke-width=".7"/></g>
<path d="M376.5 113 V141" stroke="#484848" stroke-width="1"/><path d="M377.5 113 V141" stroke="#878787" stroke-width="1"/>
<g transform="translate(395 126.5)"><rect x="-11" y="-5" width="20" height="15" rx="1.500" fill="url(#gG)" stroke="#f0f0f0" stroke-width=".8"/><rect x="-6" y="-8" width="8" height="4" fill="#dcdfe4"/><circle cx="-1" cy="3" r="5" fill="#f4f4f4" stroke="#6a6e78" stroke-width="1.200"/><circle cx="-1" cy="3" r="2.200" fill="#8a909a"/><path d="M8 -11 l1.500 3 l3 -1 l-1.500 3 l2 2.500 l-3 0 l-1 3 l-1.500 -3 l-3 0.500 l2 -2.500 l-1.500 -3 l3 1z" fill="#f8a020"/><circle cx="8.500" cy="-5.500" r="1.500" fill="#e02020"/></g>
<path d="M413.5 113 V141" stroke="#484848" stroke-width="1"/><path d="M414.5 113 V141" stroke="#878787" stroke-width="1"/>
<g transform="translate(432.5 126.5)"><circle cx="-2" cy="-2" r="8.500" fill="#f4f4f4" stroke="#c8ccd4" stroke-width="1.200"/><path d="M-8 -2 l5 -4.500 v2.500 h7 v4 h-7 v2.500z" fill="#6a707c"/><path d="M4 4 l6 6" stroke="#e4e4e4" stroke-width="3" stroke-linecap="round"/></g>
<g transform="translate(590 126.5)"><path d="M-10 3 l8 -4 l11 2.500 l-8 4z" fill="url(#gW)" stroke="#fff" stroke-width=".6"/><path d="M-10 -1 l8 -4 l11 2.500 l-8 4z" fill="url(#gW)" stroke="#fff" stroke-width=".6"/><path d="M-10 -5 l8 -4 l11 2.500 l-8 4z" fill="url(#gW)" stroke="#fff" stroke-width=".6"/><rect x="2" y="1" width="9" height="11" fill="#f4f6fa" stroke="#5a6070" stroke-width=".7"/><rect x="3.500" y="2.500" width="6" height="4" fill="#3a6cc0"/><path d="M4 8.500 h5" stroke="#4a70b0"/></g>
<g transform="translate(872.5 126.5)"><path d="M-11 0 l8 -5 l13 3 l-8 5z" fill="#8ab4ec" stroke="#c8dcf8" stroke-width=".6"/><path d="M-9 9 l8 -4 l11 2.500 l-8 4z" fill="url(#gW)" stroke="#fff" stroke-width=".6"/><path d="M-9 5 l8 -4 l11 2.500 l-8 4z" fill="url(#gW)" stroke="#fff" stroke-width=".6"/><circle cx="-1" cy="-6" r="4.500" fill="url(#gS)"/></g>
<g transform="translate(905 126.5)"><path d="M-8 7 l8 -4 l11 2.500 l-8 4z" fill="url(#gW)" stroke="#fff" stroke-width=".6"/><path d="M-8 3 l8 -4 l11 2.500 l-8 4z" fill="url(#gW)" stroke="#fff" stroke-width=".6"/><path d="M-8 -1 l8 -4 l11 2.500 l-8 4z" fill="url(#gW)" stroke="#fff" stroke-width=".6"/><path d="M-6 -6 q-4 -4 -7 -1" stroke="#e8e8e8" fill="none" stroke-width="1.200"/><path d="M-12 -10 v4 h4z" fill="#e8e8e8"/></g>
<g transform="translate(937.5 126.5)"><path d="M-12 2 l8 -4 l11 2.500 l-8 4z" fill="url(#gW)" stroke="#fff" stroke-width=".6"/><path d="M-12 -2 l8 -4 l11 2.500 l-8 4z" fill="url(#gW)" stroke="#fff" stroke-width=".6"/><path d="M-12 -6 l8 -4 l11 2.500 l-8 4z" fill="url(#gW)" stroke="#fff" stroke-width=".6"/><rect x="0" y="2" width="12" height="9" fill="#f4f6fa" stroke="#5a6070" stroke-width=".7"/><path d="M2 5 h8 M2 8 h8" stroke="#4a5060" stroke-width="1.100"/></g>
<g transform="translate(1464.5 126.5)"><ellipse cx="0" cy="4" rx="10" ry="3.500" fill="none" stroke="#6a7078" stroke-width="1.200"/><path d="M-2 10 v-14 h-3 l5 -8 l5 8 h-3 v14z" fill="url(#gW)" stroke="#fff" stroke-width=".5"/><path d="M-11 3 l2 4 l2 -3z" fill="#5a8ad0"/></g>
<g transform="translate(1497 126.5)"><ellipse cx="0" cy="3" rx="12" ry="4" fill="none" stroke="#6a7078" stroke-width="1.200" transform="rotate(-25)"/><circle cx="-1" cy="1" r="8.500" fill="url(#gS)"/><circle cx="7" cy="-6" r="3.500" fill="url(#gS)"/></g>
<g transform="translate(1529.5 126.5)"><ellipse cx="0" cy="3" rx="12" ry="4" fill="none" stroke="#6a7078" stroke-width="1.200" transform="rotate(-25)"/><circle cx="-1" cy="1" r="8.500" fill="url(#gS)"/><circle cx="7" cy="-6" r="3.500" fill="url(#gS)"/><path d="M-6 6 l8 -8 M2 -2 l-4.500 1 l3.500 3.500z" stroke="#222" stroke-width="1.300" fill="#222"/></g>
</g>
<rect x="449" y="112" width="116" height="18" fill="#e2e2e2"/><path d="M552 119 l3.500 3.500 l3.500 -3.500" fill="none" stroke="#444" stroke-width="1.100"/><path d="M451.5 132 v9" stroke="#3e3e3e"/><path d="M452.5 132 v9" stroke="#777"/>
<rect x="607" y="112" width="250" height="18" fill="#e2e2e2"/><path d="M844 119 l3.500 3.500 l3.500 -3.500" fill="none" stroke="#444" stroke-width="1.100"/><path d="M609.5 132 v9" stroke="#3e3e3e"/><path d="M610.5 132 v9" stroke="#777"/>
<rect x="962.5" y="112" width="125" height="18" fill="#e2e2e2"/><path d="M1074.5 119 l3.500 3.500 l3.500 -3.500" fill="none" stroke="#444" stroke-width="1.100"/><path d="M965 132 v9" stroke="#3e3e3e"/><path d="M966 132 v9" stroke="#777"/>
<rect x="1092" y="112" width="134" height="18" fill="#e2e2e2"/><path d="M1213 119 l3.500 3.500 l3.500 -3.500" fill="none" stroke="#444" stroke-width="1.100"/><path d="M1094.5 132 v9" stroke="#3e3e3e"/><path d="M1095.5 132 v9" stroke="#777"/>
<rect x="1231" y="112" width="104" height="18" fill="#e2e2e2"/><path d="M1322 119 l3.500 3.500 l3.500 -3.500" fill="none" stroke="#444" stroke-width="1.100"/><path d="M1233.5 132 v9" stroke="#3e3e3e"/><path d="M1234.5 132 v9" stroke="#777"/>
<rect x="1340" y="112" width="99" height="18" fill="#cdcdcd"/><path d="M1426 119 l3.500 3.500 l3.500 -3.500" fill="none" stroke="#aaa" stroke-width="1.100"/><path d="M1342.5 132 v9" stroke="#3e3e3e"/><path d="M1343.5 132 v9" stroke="#777"/>
<path d="M1089.5 112 v30 M1092 131 v11" stroke="#2c2c2c" stroke-width="1.200"/>
<path d="M1228.5 112 v30 M1231 131 v11" stroke="#2c2c2c" stroke-width="1.200"/>
<path d="M1337.5 112 v30 M1340 131 v11" stroke="#2c2c2c" stroke-width="1.200"/>
<g transform="translate(0 0)"><path d="M613 118 a3.200 3.200 0 1 1 5 2.600 v2 h-3 v-2 a3.200 3.200 0 0 1 -2 -2.600z" fill="#f8e060" stroke="#6a5a10" stroke-width=".7"/><rect x="614.500" y="123" width="3" height="2" fill="#555"/><circle cx="628.500" cy="120" r="2.800" fill="#f8d040" stroke="#7a6a20" stroke-width=".6"/><path d="M628.500 114.500 v2 M628.500 123.500 v2 M623 120 h2 M632 120 h2 M624.600 116.100 l1.400 1.400 M631 122.500 l1.400 1.400 M624.600 123.900 l1.400 -1.400 M631 117.500 l1.400 -1.400" stroke="#7a6a20" stroke-width=".8"/><rect x="637.500" y="115.500" width="6" height="6" fill="#ddd" stroke="#999" stroke-width=".8"/><circle cx="644" cy="122" r="2.200" fill="#bbb" stroke="#999" stroke-width=".6"/><rect x="652.500" y="119.500" width="7" height="5.500" fill="#5b8ad8" stroke="#2a4a90" stroke-width=".8"/><path d="M657 119 v-2 a2.300 2.300 0 0 1 4.600 0" fill="none" stroke="#2a4a90" stroke-width="1.200"/><rect x="665.500" y="116.500" width="7.500" height="7.500" fill="#fff" stroke="#222" stroke-width="1"/><rect x="968.500" y="116.500" width="7.500" height="7.500" fill="#e8e8e8" stroke="#222" stroke-width="1"/><path d="M1098 121.500 h50 M1237 121.500 h28" stroke="#333" stroke-width="1"/></g>
<text x="677.5" y="126.0" font-size="13.00" fill="#111" font-family='Liberation Sans,sans-serif' textLength="7.0" lengthAdjust="spacingAndGlyphs" >0</text>
<text x="979.5" y="125.0" font-size="12.50" fill="#111" font-family='Liberation Sans,sans-serif' textLength="53.0" lengthAdjust="spacingAndGlyphs" >Colore 254</text>
<text x="1151.0" y="125.0" font-size="12.50" fill="#111" font-family='Liberation Sans,sans-serif' textLength="44.0" lengthAdjust="spacingAndGlyphs" >DaLayer</text>
<text x="1268.5" y="125.0" font-size="12.50" fill="#111" font-family='Liberation Sans,sans-serif' textLength="44.0" lengthAdjust="spacingAndGlyphs" >DaLayer</text>
<text x="1348.5" y="125.0" font-size="12.50" fill="#8e8e8e" font-family='Liberation Sans,sans-serif' textLength="48.0" lengthAdjust="spacingAndGlyphs" >DaColore</text>
</svg>
<svg style="position:absolute;left:0;top:147px" width="60" height="682" viewBox="0 147 60 682">
<defs>
<linearGradient id="gW" x1="0" y1="0" x2="0" y2="1"><stop offset="0" stop-color="#ffffff"/><stop offset="1" stop-color="#c4c9d2"/></linearGradient>
<linearGradient id="gW2" x1="0" y1="0" x2="1" y2="1"><stop offset="0" stop-color="#ffffff"/><stop offset="1" stop-color="#b9bec8"/></linearGradient>
<linearGradient id="gB" x1="0" y1="0" x2="0" y2="1"><stop offset="0" stop-color="#b4d0f4"/><stop offset="1" stop-color="#4f88d8"/></linearGradient>
<linearGradient id="gBh" x1="0" y1="0" x2="1" y2="0"><stop offset="0" stop-color="#f4f6fa"/><stop offset="1" stop-color="#6fa0e4"/></linearGradient>
<linearGradient id="gG" x1="0" y1="0" x2="0" y2="1"><stop offset="0" stop-color="#e8eaee"/><stop offset="1" stop-color="#8d939e"/></linearGradient>
<radialGradient id="gS" cx="0.35" cy="0.3" r="0.8"><stop offset="0" stop-color="#ffffff"/><stop offset="0.6" stop-color="#e4e6ea"/><stop offset="1" stop-color="#9a9ea6"/></radialGradient>
<radialGradient id="gSB" cx="0.35" cy="0.3" r="0.8"><stop offset="0" stop-color="#9cc4ff"/><stop offset="0.5" stop-color="#3d7be0"/><stop offset="1" stop-color="#1a3f90"/></radialGradient>
<radialGradient id="gSC" cx="0.4" cy="0.25" r="0.8"><stop offset="0" stop-color="#ffd84a"/><stop offset="0.35" stop-color="#f08a3a"/><stop offset="0.65" stop-color="#8a5ac8"/><stop offset="1" stop-color="#3a3a9a"/></radialGradient>
<linearGradient id="gGB" x1="0" y1="0" x2="0" y2="1"><stop offset="0" stop-color="#7a8494"/><stop offset="1" stop-color="#c4d4e8"/></linearGradient></defs>
<defs><linearGradient id="gPal" x1="0" y1="0" x2="1" y2="0"><stop offset="0" stop-color="#8f8f8f"/><stop offset=".6" stop-color="#7c7c7c"/><stop offset="1" stop-color="#6a6a6a"/></linearGradient></defs>
<rect x="0" y="147" width="60" height="682" fill="#4a4a4a"/>
<rect x="0" y="147" width="2" height="682" fill="#3a3a3a"/>
<rect x="2.500" y="150.500" width="15" height="678" fill="url(#gPal)" stroke="#5e5e5e"/>
<path d="M6 153.5 h8 M6 155.5 h8" stroke="#2e2e2e" stroke-width="1" stroke-dasharray="1 1"/>
<rect x="22.500" y="148.500" width="33" height="636" fill="#5a5a5a" stroke="#3c3c3c"/>
<rect x="22.500" y="787.500" width="33" height="41" fill="#5a5a5a" stroke="#3c3c3c"/>
<rect x="56" y="147" width="3" height="682" fill="#444"/>
<path d="M25 151.5 h10 M25 153.5 h10" stroke="#2e2e2e" stroke-width="1" stroke-dasharray="1 1"/>
<path d="M25 790.5 h10 M25 792.5 h10" stroke="#2e2e2e" stroke-width="1" stroke-dasharray="1 1"/>
<g filter="url(#ish)">
<g transform="translate(38.5 170)"><path d="M-10 10 l21 -21" stroke="#e4e4e4" stroke-width="1.200"/><rect x="-11.5" y="8.5" width="3" height="3" fill="#a8c8f4" stroke="#3a70c8" stroke-width=".8"/><rect x="8.5" y="-11.5" width="3" height="3" fill="#a8c8f4" stroke="#3a70c8" stroke-width=".8"/></g>
<g transform="translate(38.5 202)"><path d="M-9 10 l20 -20" stroke="#f0f0f0" stroke-width="1.200"/><path d="M12 -11 l-5 1 l4 4z M-10 11 l5 -1 l-4 -4z" fill="#f0f0f0"/><rect x="-0.5" y="-1.5" width="3" height="3" fill="#a8c8f4" stroke="#3a70c8" stroke-width=".8"/></g>
<g transform="translate(38.5 234)"><path d="M-10 8 h14 a6 6 0 1 0 -6 -10" fill="none" stroke="#e4e4e4" stroke-width="1.200"/><rect x="-11.5" y="6.5" width="3" height="3" fill="#a8c8f4" stroke="#3a70c8" stroke-width=".8"/><rect x="2.5" y="6.5" width="3" height="3" fill="#a8c8f4" stroke="#3a70c8" stroke-width=".8"/><rect x="1.5" y="-7.5" width="3" height="3" fill="#a8c8f4" stroke="#3a70c8" stroke-width=".8"/></g>
<g transform="translate(38.5 266)"><path d="M0 -11 l12 9 l-4.500 12 h-15 l-4.500 -12z" fill="url(#gW)" stroke="#fff" stroke-width=".7"/></g>
<g transform="translate(38.5 298)"><rect x="-11" y="-7" width="21" height="14" fill="url(#gW)" stroke="#fff" stroke-width=".7"/><rect x="-12.5" y="5.5" width="3" height="3" fill="#a8c8f4" stroke="#3a70c8" stroke-width=".8"/><rect x="8.5" y="-8.5" width="3" height="3" fill="#a8c8f4" stroke="#3a70c8" stroke-width=".8"/></g>
<g transform="translate(38.5 329)"><path d="M-10 10 q0 -18 20 -21" fill="none" stroke="#e4e4e4" stroke-width="1.200"/><rect x="-11.5" y="8.5" width="3" height="3" fill="#a8c8f4" stroke="#3a70c8" stroke-width=".8"/><rect x="-5.5" y="-5.5" width="3" height="3" fill="#a8c8f4" stroke="#3a70c8" stroke-width=".8"/><rect x="8.5" y="-12.5" width="3" height="3" fill="#a8c8f4" stroke="#3a70c8" stroke-width=".8"/></g>
<g transform="translate(38.5 360)"><circle cx="0" cy="0" r="11.500" fill="url(#gS)"/><path d="M0 0 l8 -7" stroke="#6aa0e8" stroke-width="1.100"/><rect x="-1.5" y="-1.5" width="3" height="3" fill="#a8c8f4" stroke="#3a70c8" stroke-width=".8"/></g>
<g transform="translate(38.5 392)"><path d="M-6 -9 a6 6 0 0 1 9 -1 a6 6 0 0 1 7 8 a6 6 0 0 1 -2 10 a6.500 6.500 0 0 1 -11 1 a6 6 0 0 1 -7 -8 a6 6 0 0 1 4 -10z" fill="url(#gS)"/></g>
<g transform="translate(38.5 424)"><path d="M-10 10 q0 -14 7 -10 q6 8 8 0 q1 -6 6 -10" fill="none" stroke="#e4e4e4" stroke-width="1.200"/><rect x="-11.5" y="8.5" width="3" height="3" fill="#a8c8f4" stroke="#3a70c8" stroke-width=".8"/><rect x="-3.5" y="-1.5" width="3" height="3" fill="#a8c8f4" stroke="#3a70c8" stroke-width=".8"/><rect x="4.5" y="-3.5" width="3" height="3" fill="#a8c8f4" stroke="#3a70c8" stroke-width=".8"/><rect x="9.5" y="-11.5" width="3" height="3" fill="#a8c8f4" stroke="#3a70c8" stroke-width=".8"/></g>
<g transform="translate(38.5 455)"><ellipse cx="0" cy="0" rx="11.500" ry="8" fill="url(#gS)"/><rect x="-13" y="-1.5" width="3" height="3" fill="#a8c8f4" stroke="#3a70c8" stroke-width=".8"/><rect x="10" y="-1.5" width="3" height="3" fill="#a8c8f4" stroke="#3a70c8" stroke-width=".8"/><rect x="-1.5" y="-9.5" width="3" height="3" fill="#a8c8f4" stroke="#3a70c8" stroke-width=".8"/></g>
<g transform="translate(38.5 487)"><ellipse cx="0" cy="0" rx="11.500" ry="8" fill="url(#gS)"/><rect x="-13" y="-1.5" width="3" height="3" fill="#a8c8f4" stroke="#3a70c8" stroke-width=".8"/><rect x="-1.5" y="6.5" width="3" height="3" fill="#a8c8f4" stroke="#3a70c8" stroke-width=".8"/></g>
<g transform="translate(38.5 520)"><path d="M-2 -11 h8 l4 4 v12 h-12z" fill="#a8c8f0" stroke="#dce8fa" stroke-width=".7"/><rect x="-11" y="-3" width="13" height="9" fill="url(#gW)" stroke="#fff" stroke-width=".6"/><circle cx="5" cy="6" r="5.500" fill="url(#gS)"/><rect x="-12.5" y="4.5" width="3" height="3" fill="#a8c8f4" stroke="#3a70c8" stroke-width=".8"/><path d="M9 12.500 h3.500 v-3.500z" fill="#111"/></g>
<g transform="translate(38.5 550)"><rect x="-11" y="-8" width="14" height="10" fill="url(#gW)" stroke="#fff" stroke-width=".6"/><circle cx="4" cy="4" r="6.500" fill="url(#gS)"/><rect x="-12.5" y="1.5" width="3" height="3" fill="#a8c8f4" stroke="#3a70c8" stroke-width=".8"/></g>
<g transform="translate(38.5 582)"><path d="M-11 11 l22 -21 M-8 -9 l9 9" stroke="#d8d8d8" stroke-width="1.100"/><rect x="-1.5" y="-1.5" width="3" height="3" fill="#a8c8f4" stroke="#3a70c8" stroke-width=".8"/></g>
<g transform="translate(38.5 614)"><rect x="-9" y="-9" width="18" height="18" fill="#9cc0f0"/><path d="M-9 -3 l6 -6 M-9 3 l12 -12 M-9 9 l18 -18 M-3 9 l12 -12 M3 9 l6 -6" stroke="#dce8fa" stroke-width="1"/><path d="M-12 -9 h24 M-12 9 h24 M-9 -12 v24 M9 -12 v24" stroke="#f0f0f0" stroke-width="1"/><path d="M2 10 l9 -9 M5 4 l6 6" stroke="#3a70c8" stroke-width="1.200"/></g>
<g transform="translate(38.5 646)"><rect x="-9" y="-9" width="18" height="18" fill="url(#gB)"/><path d="M-12 -9 h24 M-12 9 h24 M-9 -12 v24 M9 -12 v24" stroke="#f0f0f0" stroke-width="1"/><path d="M2 10 l9 -9 M5 4 l6 6" stroke="#3a70c8" stroke-width="1.200"/></g>
<g transform="translate(38.5 678)"><path d="M-11 -10 h16 l6 6 v14 h-22z" fill="url(#gW)" stroke="#fff" stroke-width=".7"/><circle cx="0" cy="1" r="5.500" fill="#8ab4ec" stroke="#3a70c8" stroke-width="1"/></g>
<g transform="translate(38.5 709)"><rect x="-11" y="-11" width="22" height="22" fill="#f6f6f6" stroke="#fff" stroke-width=".6"/><rect x="-11" y="-11" width="22" height="4" fill="#8a8e96"/><path d="M-11 -2 h22 M-11 3 h22 M-11 7 h22 M-5.500 -7 v18 M0 -7 v18 M5.500 -7 v18" stroke="#b0b4bc" stroke-width=".8"/></g>
<g transform="translate(38.5 742)"><text x="0" y="11" font-size="32" font-family="Liberation Sans,sans-serif" text-anchor="middle" fill="#f0f0f0">A</text></g>
<g transform="translate(38.5 772)"><circle cx="-6" cy="-6" r="4.800" fill="#7ac050" stroke="#c0e8a0" stroke-width=".8"/><circle cx="6" cy="7" r="5" fill="#8ab8f0" stroke="#e0ecfc" stroke-width="1"/><path d="M0 -6 q6 0 6 5" stroke="#e8e8e8" stroke-width="1.200" fill="none"/><path d="M3.500 -2 h5 l-2.500 3z" fill="#e8e8e8"/></g>
<g transform="translate(38.5 814)"><path d="M-9 -10 v19 h20" fill="none" stroke="#e4e4e4" stroke-width="1.200"/><path d="M-9 -12 l-2 3.500 h4z M13 9 l-3.500 -2 v4z" fill="#e4e4e4"/><path d="M-8 8 l13 -12" stroke="#3a70c8" stroke-width="1.300"/></g>
</g>
<text x="15.0" y="514.0" font-size="12.00" fill="#ececec" font-family='Liberation Sans,sans-serif' textLength="52.0" lengthAdjust="spacingAndGlyphs" transform="rotate(-90.0 15.0 514.0)" >Proprietà</text>
</svg>
<svg style="position:absolute;left:1561px;top:147px" width="39" height="682" viewBox="1561 147 39 682">
<rect x="1561" y="147" width="39" height="682" fill="#5c5c5c"/>
<rect x="1561" y="147" width="2" height="682" fill="#4a4a4a"/>
<rect x="1564.500" y="148.5" width="34" height="202" fill="#5a5a5a" stroke="#3c3c3c"/>
<path d="M1567 151.5 h10 M1567 153.5 h10" stroke="#2e2e2e" stroke-width="1" stroke-dasharray="1 1"/>
<rect x="1564.500" y="352.5" width="34" height="170" fill="#5a5a5a" stroke="#3c3c3c"/>
<path d="M1567 355.5 h10 M1567 357.5 h10" stroke="#2e2e2e" stroke-width="1" stroke-dasharray="1 1"/>
<rect x="1564.500" y="524.5" width="34" height="206" fill="#5a5a5a" stroke="#3c3c3c"/>
<path d="M1567 527.5 h10 M1567 529.5 h10" stroke="#2e2e2e" stroke-width="1" stroke-dasharray="1 1"/>
<path d="M1567 284.5 h29" stroke="#e0e0e0" stroke-width="1.200"/>
<path d="M1567 519.5 h29" stroke="#e0e0e0" stroke-width="1.200"/>
<path d="M1567 564.5 h29" stroke="#e0e0e0" stroke-width="1.200"/>
<path d="M1567 696.5 h29" stroke="#e0e0e0" stroke-width="1.200"/>
<g filter="url(#ish)">
<g transform="translate(1581.5 170)"><rect x="-1" y="0" width="13" height="10" fill="url(#gW)" stroke="#fff" stroke-width=".8"/><rect x="-6" y="-5" width="13" height="10" fill="url(#gGB)" stroke="#fff" stroke-width=".8"/><rect x="-11" y="-10" width="13" height="10" fill="url(#gW)" stroke="#fff" stroke-width=".8"/></g>
<g transform="translate(1581.5 202)"><rect x="-1" y="1" width="13" height="10" fill="url(#gW)" stroke="#fff" stroke-width=".8"/><rect x="-5" y="-4" width="13" height="10" fill="url(#gGB)" stroke="#fff" stroke-width=".8"/><rect x="-11" y="-10" width="13" height="10" fill="url(#gW)" stroke="#fff" stroke-width=".8"/></g>
<g transform="translate(1581.5 234)"><rect x="-11" y="-10" width="13" height="10" fill="url(#gW)" stroke="#fff" stroke-width=".8"/><rect x="-3" y="-2" width="14" height="10" fill="url(#gGB)" stroke="#fff" stroke-width=".8"/></g>
<g transform="translate(1581.5 265)"><rect x="-11" y="-9" width="15" height="11" fill="url(#gW)" stroke="#fff" stroke-width=".8"/><rect x="0" y="1" width="11" height="9" fill="url(#gGB)" stroke="#fff" stroke-width=".8"/></g>
<g transform="translate(1581.5 302)"><rect x="-3" y="-1" width="13" height="9" fill="url(#gW)" stroke="#fff" stroke-width=".8"/><text x="-12" y="0" font-size="9.500" font-family="Liberation Sans,sans-serif" fill="#f4f4f4">ABC</text><path d="M9 12.500 h3.500 v-3.500z" fill="#111"/></g>
<g transform="translate(1581.5 334)"><rect x="-11" y="-10" width="15" height="9" fill="url(#gGB)" stroke="#fff" stroke-width=".8"/><rect x="1" y="1" width="10" height="10" fill="#e0e0e0" stroke="#fff" stroke-width=".6"/><path d="M1 6 l5 -5 M1 11 l10 -10 M6 11 l5 -5" stroke="#777" stroke-width=".8"/></g>
<g transform="translate(1581.5 374)"><rect x="-11" y="-10" width="16" height="15" fill="#f0f0f0" stroke="#fff" stroke-width=".7"/><path d="M-3 -10 v15 M-11 -3 h16" stroke="#9a9ea8" stroke-width="1"/><rect x="-1" y="1" width="12" height="10" fill="#f4f6fa" stroke="#5a6070" stroke-width=".7"/><rect x="0" y="2" width="10" height="2.500" fill="#3a6cc0"/><path d="M1 6.500 h8 M1 9 h8" stroke="#4a70b0" stroke-width="1"/></g>
<g transform="translate(1581.5 406)"><rect x="-10" y="-10" width="20" height="20" fill="url(#gW)" stroke="#fff" stroke-width="1.500"/></g>
<g transform="translate(1581.5 438)"><path d="M-11 -11 h22 v22 h-11 v-12 h-11z" fill="url(#gW)" stroke="#fff" stroke-width="1.500"/></g>
<g transform="translate(1581.5 469)"><rect x="-11" y="-11" width="22" height="22" fill="#f4f4f4" stroke="#fff"/><path d="M-7 8 v-12 q0 -3 3 -3 h11 v15z" fill="#dfe2e8" stroke="#666" stroke-width="1"/><circle cx="4" cy="4" r="3.500" fill="#f0f0f0" stroke="#666" stroke-width="1"/></g>
<g transform="translate(1581.5 500)"><rect x="-9" y="-9" width="18" height="18" fill="#f0f2f6" stroke="#fff" stroke-width="1.200"/><rect x="-5" y="-5" width="11" height="9" fill="#5b95e0"/><path d="M-7 4 h14 M-5 -7 v14 M6 -7 v4" stroke="#2a5ab0" stroke-width=".8"/></g>
<g transform="translate(1581.5 544)"><rect x="-11" y="-11" width="16" height="16" fill="url(#gW)" stroke="#fff" stroke-width=".7"/><circle cx="5" cy="5" r="6.500" fill="url(#gS)" stroke="#888" stroke-width=".5"/></g>
<g transform="translate(1581.5 582)"><circle r="11.500" fill="url(#gS)"/><path d="M-9 -7 q12 2 16 14 M9 -7 q-12 2 -16 14 M-11 2 q11 -6 22 0" fill="none" stroke="#6a6e78" stroke-width="1"/></g>
<g transform="translate(1581.5 614)"><circle r="11.500" fill="url(#gS)"/><path d="M-9 -7 q12 4 14 16 M10 -5 q-12 2 -18 12" fill="none" stroke="#6a6e78" stroke-width="1"/></g>
<g transform="translate(1581.5 646)"><circle r="11" fill="url(#gSB)"/></g>
<g transform="translate(1581.5 677)"><circle r="11" fill="url(#gSC)"/></g>
<g transform="translate(1581.5 713)"><circle cx="-1" cy="-1" r="11" fill="url(#gS)"/><path d="M-1 -12 v11 l-9 5" stroke="#aaa" stroke-width=".7" fill="none"/><rect x="0" y="2" width="12" height="10" fill="#f4f6fa" stroke="#5a6070" stroke-width=".7"/><path d="M2 5 h8 M2 7.500 h8 M2 10 h8" stroke="#4a5a80" stroke-width="1"/></g>
</g>
</svg>
<div style="position:absolute;left:60.0px;top:706.0px;width:24.0px;height:122.0px;background:linear-gradient(#6c6c6c,#565656 40%,#383838);border-radius:3px 0 0 0;"></div>
<div style="position:absolute;left:83.0px;top:706.0px;width:577.0px;height:100.0px;background:#cacaca;border-radius:2px 2px 0 0;"></div>
<div style="position:absolute;left:83.0px;top:806.0px;width:577.0px;height:22.0px;background:#fff;border-top:1px solid #aaa;box-sizing:border-box;"></div>
<svg style="position:absolute;left:60px;top:706px" width="600" height="122" viewBox="60 706 600 122"><path d="M63 710.500 h17 M63 712.500 h17 M63 714.500 h17" stroke="#8a8a8a" stroke-width="1" stroke-dasharray="1 1"/><path d="M67 725 l8 8 M75 725 l-8 8" stroke="#f4f4f4" stroke-width="1.700"/><path d="M66.500 745.500 a3.500 3.500 0 0 0 4.500 4.500 l5 6 l2 -2 l-6 -5 a3.500 3.500 0 0 0 -4.500 -4.500 l2 2.500 l-1 1.500z" fill="#e8e8e8"/><rect x="88.500" y="810.500" width="15" height="14" rx="1.500" fill="#e8e8e8" stroke="#b0b0b0"/><path d="M91 814 l3.500 3 l-3.500 3 M96 821.500 h5" fill="none" stroke="#555" stroke-width="1.300"/><path d="M107 816 h6 l-3 3.500z" fill="#777"/><path d="M646 820.500 l4 -4.500 l4 4.500z" fill="#111"/></svg>
<div style="position:absolute;left:86.0px;top:709.0px;height:20px;line-height:20px;font-size:15.50px;color:#101010;white-space:pre;letter-spacing:-0.142px;font-family:'Liberation Mono',monospace;">Specificare il secondo punto o [Serie] &lt;utilizzare il primo</div>
<div style="position:absolute;left:86.0px;top:728.1px;height:20px;line-height:20px;font-size:15.50px;color:#101010;white-space:pre;letter-spacing:-0.142px;font-family:'Liberation Mono',monospace;">punto come spostamento&gt;:</div>
<div style="position:absolute;left:86.0px;top:747.2px;height:20px;line-height:20px;font-size:15.50px;color:#101010;white-space:pre;letter-spacing:-0.142px;font-family:'Liberation Mono',monospace;">Specificare il secondo punto o [Serie/Esci/Annulla] &lt;Esci&gt;:</div>
<div style="position:absolute;left:86.0px;top:766.3px;height:20px;line-height:20px;font-size:15.50px;color:#101010;white-space:pre;letter-spacing:-0.142px;font-family:'Liberation Mono',monospace;">Comando:</div>
<div style="position:absolute;left:86.0px;top:785.4px;height:20px;line-height:20px;font-size:15.50px;color:#101010;white-space:pre;letter-spacing:-0.142px;font-family:'Liberation Mono',monospace;">Comando: _.erase trovato(i) 1</div>
<div style="position:absolute;left:121.0px;top:808.0px;height:20px;line-height:20px;font-size:15.50px;color:#9a9a9a;white-space:pre;letter-spacing:-0.142px;font-family:'Liberation Mono',monospace;font-style:italic;">Digitare un comando</div>
<svg style="position:absolute;left:0;top:828px" width="1600" height="30" viewBox="0 828 1600 30">
<rect x="0" y="828" width="1600" height="30" fill="#3b3b3b"/>
<rect x="0" y="828" width="1600" height="1.500" fill="#555"/>
<path d="M8 829 C16 829 16 847.500 24 847.500 L72 847.500 C80 847.500 80 829 88 829 Z" fill="#5a5a5a" stroke="#2a2a2a"/>
<path d="M84 830 C90 830 90 847.500 97 847.500 L140 847.500 C148 847.500 148 830 154 830 Z" fill="#484848" stroke="#2c2c2c"/>
<path d="M151 830 C157 830 157 847.500 164 847.500 L208 847.500 C216 847.500 216 830 222 830 Z" fill="#484848" stroke="#2c2c2c"/>
<path d="M222 846 q4 -1 5 -8 q1 -7 5 -7 h12 q4 0 3 4 l-1.500 8 q-1 3 -4 3z" fill="#484848" stroke="#2c2c2c"/>
<path d="M231.500 838.500 h6 M234.500 835.500 v6" stroke="#d8d8d8" stroke-width="1.600"/>
<path d="M299.500 835 l3.500 3.500 l3.500 -3.500 M299.500 840.500 l3.500 3.500 l3.500 -3.500" fill="none" stroke="#d8d8d8" stroke-width="1.600"/>
<rect x="318.5" y="830.500" width="188" height="26" fill="#535353" stroke="#666"/>
<rect x="509" y="830.500" width="64.5" height="26" fill="#535353" stroke="#666"/>
<rect x="576" y="830.500" width="65.5" height="26" fill="#535353" stroke="#666"/>
<rect x="644" y="830.500" width="51" height="26" fill="#535353" stroke="#666"/>
<rect x="696.5" y="830.500" width="172" height="26" fill="#535353" stroke="#666"/>
<rect x="869.5" y="830.500" width="41" height="26" fill="#535353" stroke="#666"/>
<rect x="911.5" y="830.500" width="25" height="26" fill="#535353" stroke="#666"/>
<rect x="937.5" y="830.500" width="24.5" height="26" fill="#535353" stroke="#666"/>
<rect x="963" y="830.500" width="41.5" height="26" fill="#535353" stroke="#666"/>
<rect x="1006.5" y="830.500" width="107" height="26" fill="#535353" stroke="#666"/>
<rect x="1116" y="830.500" width="149.5" height="26" fill="#535353" stroke="#666"/>
<rect x="1267.5" y="830.500" width="41" height="26" fill="#535353" stroke="#666"/>
<rect x="1309.5" y="830.500" width="26.5" height="26" fill="#535353" stroke="#666"/>
<rect x="1338" y="830.500" width="99.5" height="26" fill="#535353" stroke="#666"/>
<rect x="1438.5" y="830.500" width="25.5" height="26" fill="#535353" stroke="#666"/>
<rect x="1465" y="830.500" width="27" height="26" fill="#535353" stroke="#666"/>
<rect x="1493" y="830.500" width="53.5" height="26" fill="#535353" stroke="#666"/>
<rect x="1547.5" y="830.500" width="52" height="26" fill="#535353" stroke="#666"/>
<path d="M669.5 831 v25" stroke="#636363"/>
<path d="M802.5 831 v25" stroke="#636363"/>
<path d="M583 837 v13 M586.300 837 v13 M589.600 837 v13 M593 837 v13 M581 840 h14 M581 843.500 h14 M581 847 h14" stroke="#d4d4d4" stroke-width="1"/>
<rect x="606" y="837" width="14" height="13" fill="#1a4fb0"/><path d="M606 839 h14 M606 842 h14 M606 845 h14 M606 848 h14" stroke="#2f6fe0" stroke-width="1.500" stroke-dasharray="1.500 1.500"/>
<path d="M630.2 841 h7 l-3.500 4z" fill="#f0f0f0"/>
<path d="M656 850 v-11 h5 v4 h-5" fill="none" stroke="#d4d4d4" stroke-width="1.500"/><rect x="653" y="847" width="4" height="4" fill="#d4d4d4"/>
<path d="M675 840.500 h6 M678 837.500 v6" stroke="#d4d4d4" stroke-width="1.300"/><rect x="681" y="845" width="9" height="3.500" fill="#d4d4d4"/>
<path d="M703.500 837 v12 h11" fill="none" stroke="#d4d4d4" stroke-width="1.600"/><rect x="705.500" y="843.500" width="3.500" height="3.500" fill="none" stroke="#d4d4d4"/>
<circle cx="732.500" cy="843.500" r="6" fill="none" stroke="#d4d4d4" stroke-width="1.500"/><path d="M732.500 843.500 h8 M732.500 843.500 l5 -6" stroke="#d4d4d4" stroke-width="1.300"/>
<path d="M749.5 841 h7 l-3.500 4z" fill="#f0f0f0"/>
<path d="M768 836 l13 15 M775 834 v18 M781 838 l-6 6" stroke="#8a8a8a" stroke-width="1.500"/>
<path d="M791 841 h7 l-3.500 4z" fill="#f0f0f0"/>
<path d="M808 851 h16 M808 851 l13 -12" stroke="#9a9a9a" stroke-width="1.500"/><rect x="813" y="843" width="3.500" height="3.500" fill="#9a9a9a"/>
<rect x="835" y="838" width="12.500" height="12.500" rx="1.500" fill="none" stroke="#2f7fe8" stroke-width="1.800"/><rect x="833" y="835.500" width="5" height="5" fill="#20c040" stroke="#104a18" stroke-width=".6"/>
<path d="M857.5 841 h7 l-3.500 4z" fill="#f0f0f0"/>
<path d="M874 838 h16" stroke="#d4d4d4" stroke-width="1"/><path d="M874 842 h13" stroke="#d4d4d4" stroke-width="2"/><path d="M874 846.500 h16" stroke="#d4d4d4" stroke-width="2.600"/><path d="M874 850.500 h10" stroke="#d4d4d4" stroke-width="1.500"/>
<path d="M899 841 h7 l-3.500 4z" fill="#f0f0f0"/>
<rect x="917.500" y="837" width="13" height="13" fill="#6a6a6a" stroke="#ccc" stroke-width=".8"/><path d="M918 839 h12.500 M918 842 h12.500 M918 845 h12.500 M918 848 h12.500" stroke="#e4e4e4" stroke-width="1.500" stroke-dasharray="1.500 1.500"/>
<rect x="946" y="841" width="9" height="9" fill="#8ad060" stroke="#d0f0b0" stroke-width=".8"/><rect x="943" y="838" width="9" height="9" fill="none" stroke="#aaa" stroke-width="1"/><path d="M941 837 h4 M943 835 v4" stroke="#ddd" stroke-width="1"/>
<path d="M969 838 l7 -3 l7 3 v9 l-7 4 l-7 -4z M969 838 l7 3.500 l7 -3.500 M976 841.500 v9.500" fill="none" stroke="#d8d8d8" stroke-width="1.5"/><rect x="967.500" y="834" width="4.500" height="4.500" fill="#20c040" stroke="#104a18" stroke-width=".6"/>
<path d="M992.5 841 h7 l-3.500 4z" fill="#f0f0f0"/>
<path d="M1012 836 v15 h15" fill="none" stroke="#2f7fe8" stroke-width="1.600"/><path d="M1012 834 l-2.500 3.500 h5z M1029 851 l-3.500 -2.500 v5z" fill="#2f7fe8"/><path d="M1015 848 l5 -6 M1023 835 l-4 6 h3.500 l-2 5 l6 -7 h-3.500 l2.500 -4z" stroke="#2f7fe8" stroke-width="1.200" fill="#2f7fe8"/>
<path d="M1037 838 l7 -3 l7 3 v9 l-7 4 l-7 -4z M1037 838 l7 3.500 l7 -3.500 M1044 841.500 v9.500" fill="none" stroke="#8c8c8c" stroke-width="1.2"/>
<path d="M1061 841 h7 l-3.500 4z" fill="#f0f0f0"/>
<path d="M1077 838 l7 -3 l7 3 v9 l-7 4 l-7 -4z M1077 838 l7 3.500 l7 -3.500 M1084 841.500 v9.500" fill="none" stroke="#8c8c8c" stroke-width="1"/><path d="M1084 843 v-7 M1084 843 l-6 4 M1084 843 l6 4" stroke-width="1.300" fill="none" stroke="#4a80d0"/><circle cx="1078" cy="847" r="1.800" fill="#40b040"/><circle cx="1090" cy="847" r="1.800" fill="#d03030"/><circle cx="1084" cy="836" r="1.500" fill="#5a90e0"/>
<path d="M1101.5 841 h7 l-3.500 4z" fill="#f0f0f0"/>
<path d="M1129 834 l3 9 l7 6 l-8 -2 l-2 4 l-2 -4 l-8 2 l7 -6z" fill="#2f7fe8"/><circle cx="1132" cy="838" r="2.500" fill="none" stroke="#2f7fe8" stroke-width="1.200"/>
<path d="M1154 834 l3 9 l7 6 l-8 -2 l-2 4 l-2 -4 l-8 2 l7 -6z" fill="#9a9a9a"/><path d="M1159 834 l-3 4 h2.500 l-1.500 4 l4.500 -5.500 h-2.500 l2 -2.500z" fill="#c8c8c8"/>
<path d="M1178 834 l3 9 l7 6 l-8 -2 l-2 4 l-2 -4 l-8 2 l7 -6z" fill="#9a9a9a"/>
<path d="M1254.5 841 h7 l-3.500 4z" fill="#f0f0f0"/>
<g transform="translate(1281 843.500)"><path d="M-1.500 -7.500 h3 l.5 2.200 l1.800 .8 l1.900 -1.200 l2.100 2.100 l-1.200 1.900 l.8 1.800 l2.200 .5 v3 l-2.200 .5 l-.8 1.800 l1.200 1.900 l-2.100 2.100 l-1.900 -1.200 l-1.800 .8 l-.5 2.200 h-3 l-.5 -2.200 l-1.800 -.8 l-1.900 1.200 l-2.100 -2.100 l1.200 -1.900 l-.8 -1.800 l-2.200 -.5 v-3 l2.200 -.5 l.8 -1.800 l-1.200 -1.900 l2.100 -2.100 l1.900 1.200 l1.800 -.8z" fill="#bdbdbd" transform="scale(.85)"/><circle r="2.300" fill="#4f4f4f"/></g>
<path d="M1297.5 841 h7 l-3.500 4z" fill="#f0f0f0"/>
<path d="M1315 843.500 h15 M1322.500 836 v15" stroke="#e0e0e0" stroke-width="1.800"/>
<rect x="1347" y="836" width="6" height="15" fill="#b4b4b4"/><path d="M1347 839 h3 M1347 842 h3 M1347 845 h3 M1347 848 h3" stroke="#555" stroke-width=".8"/>
<path d="M1427 841 h7 l-3.500 4z" fill="#f0f0f0"/>
<rect x="1447.500" y="838.500" width="7" height="10" rx="1" fill="none" stroke="#bbb" stroke-width="1.200"/><path d="M1449 842 h4 M1449 844.500 h4 M1449 847 h4" stroke="#bbb" stroke-width=".9"/>
<circle cx="1479" cy="843.500" r="8" fill="#123a8a" stroke="#2f7fe8" stroke-width="1.800"/><path d="M1475 844 l3 3 l5 -5" fill="none" stroke="#2f6fe0" stroke-width="1.500"/>
<rect x="1500" y="840" width="11" height="9" fill="#e8c840" stroke="#a08010" stroke-width=".6"/><rect x="1498" y="835.500" width="8" height="6" fill="#cfe0f4" stroke="#6a8ab0" stroke-width=".6"/><path d="M1505 847 l3 3 l5 -6" fill="none" stroke="#40c040" stroke-width="1.800"/>
<rect x="1522.500" y="835.500" width="6" height="6" fill="none" stroke="#aaa" stroke-width="1.200"/><circle cx="1535" cy="842" r="3" fill="none" stroke="#aaa" stroke-width="1.200"/><path d="M1526 851 l3.500 -6.500 l3.500 6.500z" fill="none" stroke="#aaa" stroke-width="1.200"/>
<rect x="1553.500" y="837.500" width="15" height="12" fill="none" stroke="#bdbdbd" stroke-width="1.400"/><path d="M1557 846 l7 -5 M1557 846 v-3.500 M1557 846 h3.500 M1564 841 v3.500 M1564 841 h-3.500" stroke="#bdbdbd" stroke-width="1.100"/>
<path d="M1579 838.500 h16 M1579 843.500 h16 M1579 848.500 h16" stroke="#d8d8d8" stroke-width="2"/>
<text x="24.5" y="843.5" font-size="13.00" fill="#ffffff" font-family='Liberation Sans,sans-serif' font-weight="bold" textLength="47.0" lengthAdjust="spacingAndGlyphs" >Modello</text>
<text x="96.0" y="843.5" font-size="13.00" fill="#a8a8a8" font-family='Liberation Sans,sans-serif' textLength="42.0" lengthAdjust="spacingAndGlyphs" >Layout1</text>
<text x="163.5" y="843.5" font-size="13.00" fill="#a8a8a8" font-family='Liberation Sans,sans-serif' textLength="42.5" lengthAdjust="spacingAndGlyphs" >Layout2</text>
<text x="327.0" y="848.0" font-size="12.50" fill="#eeeeee" font-family='Liberation Sans,sans-serif' textLength="173.5" lengthAdjust="spacingAndGlyphs" >43898.8160, -7870.2755, 0.0000</text>
<text x="513.0" y="848.0" font-size="12.50" fill="#eeeeee" font-family='Liberation Sans,sans-serif' textLength="56.5" lengthAdjust="spacingAndGlyphs" >MODELLO</text>
<text x="1196.0" y="848.0" font-size="12.50" fill="#eeeeee" font-family='Liberation Sans,sans-serif' textLength="53.0" lengthAdjust="spacingAndGlyphs" >1:1 / 100%</text>
<text x="1368.0" y="848.0" font-size="12.50" fill="#eeeeee" font-family='Liberation Sans,sans-serif' textLength="48.0" lengthAdjust="spacingAndGlyphs" >Decimali</text>
</svg>
<svg style="position:absolute;left:0;top:857px" width="1600" height="43" viewBox="0 857 1600 43">
<rect x="0" y="857" width="1600" height="43" fill="#1b2e35"/>
<rect x="1004" y="857" width="81" height="43" fill="#46565c"/>
<rect x="294" y="897.500" width="74" height="2.500" fill="#a6ecf6"/>
<rect x="507.5" y="897.500" width="74" height="2.500" fill="#a6ecf6"/>
<rect x="677.5" y="897.500" width="74" height="2.500" fill="#a6ecf6"/>
<rect x="762" y="897.500" width="70.5" height="2.500" fill="#a6ecf6"/>
<rect x="842.5" y="897.500" width="73.5" height="2.500" fill="#a6ecf6"/>
<rect x="925" y="897.500" width="73" height="2.500" fill="#a6ecf6"/>
<rect x="1004" y="897.500" width="81" height="2.500" fill="#9fe8f6"/>
<path d="M16.500 873.500 l7 -1 v6.500 h-7z M24.500 872.300 l9 -1.300 v8 h-9z M16.500 880 h7 v6.500 l-7 -1z M24.500 880 h9 v8 l-9 -1.300z" fill="#fff"/>
<circle cx="77.500" cy="876.500" r="5.500" fill="none" stroke="#fff" stroke-width="1.500"/><path d="M73.500 880.500 l-6 6.500" stroke="#fff" stroke-width="1.700"/>
<circle cx="125" cy="879.500" r="6.700" fill="none" stroke="#fff" stroke-width="2.300"/>
<rect x="168.500" y="875.500" width="9" height="8" fill="none" stroke="#fff" stroke-width="1.300"/><path d="M167 872.500 h12 M167 886.500 h12 M182.500 872 v4 M182.500 878 v8" stroke="#fff" stroke-width="1.300"/>
<rect x="213" y="871" width="22" height="17" fill="#f0f0f0"/><rect x="217" y="874" width="10" height="12" fill="#2f8ae8"/><path d="M229 875 h4 M229 878 h4 M229 881 h4" stroke="#999"/>
<rect x="256.500" y="868.500" width="22" height="22" rx="5" fill="#b01010" stroke="#701010"/><circle cx="267.500" cy="880" r="5" fill="none" stroke="#fff" stroke-width="1.600"/><path d="M267.500 873 v6" stroke="#fff" stroke-width="1.800"/>
<path d="M301 870 h10 l1 2 v18 h-11z" fill="#f0c848"/><path d="M304 871 h9 v18 h-9z" fill="#fae08a"/><path d="M309 877 h4 v5 h3 l-5 6 l-5 -6 h3z" fill="#2f8ae8"/>
<rect x="382.500" y="869" width="20" height="21" rx="1" fill="#2a50c0"/><rect x="386" y="869" width="12" height="7" fill="#e8e8e8"/><rect x="385" y="879" width="15" height="11" fill="#f4f4f4"/><path d="M386 882 h13 M386 885 h13" stroke="#e04040" stroke-width=".8"/>
<rect x="427" y="870" width="19" height="15" fill="#e8c040" transform="rotate(-8 437 878)"/><rect x="429" y="873" width="18" height="14" fill="#6ab0e8" stroke="#f4f4f4" stroke-width="1.300"/><path d="M430 885 l5 -6 l4 4 l3 -2 l4 4z" fill="#5a9a40"/><ellipse cx="437" cy="889" rx="10" ry="2" fill="#e8b020"/>
<rect x="469.500" y="868.500" width="23" height="22" fill="#58c8d8" stroke="#222"/><path d="M472 872 l5 5 l5 -5 l5 5 l4 -5" stroke="#222" fill="none"/><path d="M476 884 l8 -8 l6 6z" fill="#e02020"/><rect x="470" y="886" width="22" height="4" fill="#e8d040"/><path d="M484 872 l8 8" stroke="#222" stroke-width="2"/>
<rect x="512.500" y="867.500" width="19" height="24" rx="1.500" fill="#707880" stroke="#99a"/><rect x="515" y="870" width="14" height="5" fill="#58c8e8"/><g fill="#e8e8e8"><rect x="515" y="877" width="4" height="3.500"/><rect x="520" y="877" width="4" height="3.500"/><rect x="525" y="877" width="4" height="3.500"/><rect x="515" y="882" width="4" height="3.500"/><rect x="520" y="882" width="4" height="3.500"/><rect x="515" y="887" width="4" height="3.500"/><rect x="520" y="887" width="4" height="3.500"/></g><rect x="525" y="882" width="4" height="8.500" fill="#58a0e8"/>
<rect x="603" y="872" width="14" height="17" fill="#f4f4f4" stroke="#9c9"/><path d="M606 876 h9 M606 879 h9 M606 882 h9 M606 885 h9" stroke="#6a6"/><rect x="595" y="869" width="15" height="17" fill="#1f7a40"/><path d="M598 872 l9 11 M607 872 l-9 11" stroke="#fff" stroke-width="2.200"/>
<rect x="647" y="871" width="14" height="18" fill="#f4f4f4" stroke="#9ac"/><rect x="638.500" y="869" width="17" height="17" fill="#2456b0"/><path d="M641 872 l2.500 11 l3.500 -9 l3.500 9 l2.500 -11" fill="none" stroke="#fff" stroke-width="2"/>
<circle cx="692" cy="878" r="10.500" fill="#e8b020"/><path d="M692 878 L682.900 872.700 A10.500 10.500 0 0 1 701.100 872.700z" fill="#d83a2a"/><path d="M692 878 L682.900 872.700 A10.500 10.500 0 0 0 692 888.500z" fill="#2a9a48"/><circle cx="692" cy="878" r="4.500" fill="#4a8af0" stroke="#fff" stroke-width="1.300"/><circle cx="698" cy="885.500" r="6.500" fill="#8a50c0"/>
<path d="M766 868 h12 l5 5 v18 h-17z" fill="#f8f8f8" stroke="#d02818" stroke-width="1.500"/><path d="M770 882 q4 -2 5 -8 q-2 -3 -2 0 q1 6 6 7 q3 0 0 -1 q-5 0 -9 2z" fill="none" stroke="#d02818" stroke-width="1.300"/><rect x="767" y="885" width="14" height="5" fill="#d02818"/>
<g transform="translate(857.5 879.500)"><rect x="-12" y="-11" width="24" height="7" fill="#c03030"/><rect x="-12" y="-4" width="24" height="7" fill="#3050c0"/><rect x="-12" y="3" width="24" height="7" fill="#30a040"/><rect x="-3" y="-11" width="6" height="21" fill="#c8a860"/><circle cx="0" cy="0" r="3" fill="#e8d8a0" stroke="#806020" stroke-width=".8"/><path d="M-12 -8 h24 M-12 -1 h24 M-12 6 h24" stroke="#f0d060" stroke-width="1" opacity=".6"/></g>
<g transform="translate(940 879.500)"><rect x="-12" y="-11" width="24" height="7" fill="#c03030"/><rect x="-12" y="-4" width="24" height="7" fill="#3050c0"/><rect x="-12" y="3" width="24" height="7" fill="#30a040"/><rect x="-3" y="-11" width="6" height="21" fill="#c8a860"/><circle cx="0" cy="0" r="3" fill="#e8d8a0" stroke="#806020" stroke-width=".8"/><path d="M-12 -8 h24 M-12 -1 h24 M-12 6 h24" stroke="#f0d060" stroke-width="1" opacity=".6"/></g>
<rect x="1010" y="867" width="25" height="25" fill="#e8e0e0"/><rect x="1010" y="880" width="25" height="12" fill="#e0b8b8"/><path d="M1023 870 l-9 17 l4 0 l5 -7 l4 4 l-6 3 h11z" fill="#c01818"/><path d="M1023 870 l3 3 l6 14 h-3z" fill="#901010"/>
<circle cx="1122" cy="874" r="2.700" fill="none" stroke="#fff" stroke-width="1.300"/><circle cx="1115" cy="879" r="2.500" fill="none" stroke="#fff" stroke-width="1.300"/><path d="M1110.500 887 q0 -5 4.500 -5 q4.500 0 4.500 5 M1118 881 q2 -3 5 -3 q4 0 4 5" fill="none" stroke="#fff" stroke-width="1.300"/>
<rect x="1151.500" y="875.500" width="7" height="8" rx="1" fill="none" stroke="#fff" stroke-width="1.200"/><path d="M1159 878 l3 -2 v7 l-3 -2 M1151 873 q4 -2 8 0 M1151 886 q4 2 8 0" fill="none" stroke="#fff" stroke-width="1"/>
<path d="M1180 871 l7 2 v6 q0 6 -7 9 q-7 -3 -7 -9 v-6z" fill="#fff"/><path d="M1180 871 v17 M1173 879 h14" stroke="#1b2e35" stroke-width="1.200"/><circle cx="1184.500" cy="886" r="3.500" fill="#20a040"/>
<path d="M1197 884 a4 4 0 0 1 2 -7.500 a5.500 5.500 0 0 1 10 1.500 a3.200 3.200 0 0 1 1 6z" fill="#e8e8e8"/>
<path d="M1224 886 l6 -12 l6 12 h-3 l-3 -6 l-3 6z" fill="#28a0a0"/><path d="M1230 874 l6 12 h-3z" fill="#3a70d8"/>
<path d="M1251 871 l4 2.500 l-4 2.500 l-4 -2.500z M1259 871 l4 2.500 l-4 2.500 l-4 -2.500z M1251 876.500 l4 2.500 l-4 2.500 l-4 -2.500z M1259 876.500 l4 2.500 l-4 2.500 l-4 -2.500z M1255 882 l4 2.500 l-4 2.500 l-4 -2.500z" fill="#fff"/>
<path d="M1272 873 l8 -4 l9 3 v12 l-9 5 l-8 -4z" fill="#c81818"/><path d="M1272 873 l8 3 l9 -4 M1280 876 v13" stroke="#801010" fill="none"/>
<rect x="1302.500" y="875.500" width="11" height="7" fill="#fff" stroke="#fff"/><rect x="1314" y="877.500" width="1.500" height="3" fill="#fff"/><path d="M1297 874 v4 h4 M1299 878 v8" stroke="#fff" stroke-width="1.200" fill="none"/>
<path d="M1325 887 a11 11 0 0 1 11 -11 M1328.500 887 a7.500 7.500 0 0 1 7.500 -7.500 M1332 887 a4 4 0 0 1 4 -4" fill="none" stroke="#fff" stroke-width="1.300"/><circle cx="1336" cy="887" r="1.300" fill="#fff"/>
<rect x="1347.500" y="871.500" width="16" height="16" rx="3" fill="#2f8ae8" stroke="#8ac0f8"/><rect x="1351" y="874" width="6" height="5" fill="none" stroke="#fff" stroke-width=".9"/><rect x="1354" y="880" width="6" height="5" fill="none" stroke="#fff" stroke-width=".9"/>
<rect x="1372.500" y="871.500" width="16" height="16" fill="#8a8a50" stroke="#40a040"/><rect x="1375" y="874" width="11" height="11" fill="#a060c0"/><rect x="1377" y="876" width="5" height="5" fill="#e06a5a"/>
<rect x="1397.500" y="872.500" width="16" height="15" rx="1.500" fill="#2a2a2a" stroke="#555"/><path d="M1400 880 q5 -6 11 0 q-5 6 -11 0z" fill="none" stroke="#70b020" stroke-width="1.500"/><circle cx="1405.500" cy="880" r="1.700" fill="#70b020"/>
<rect x="1422.500" y="872.500" width="16" height="11" fill="#5a6a90" stroke="#aab"/><circle cx="1430.500" cy="877" r="4.500" fill="none" stroke="#e02020" stroke-width="1.600"/><path d="M1427.500 874 l6 6" stroke="#e02020" stroke-width="1.600"/><path d="M1423 887.500 h6 M1432 887.500 h6" stroke="#ccd" stroke-width="1.500"/>
<path d="M1447 877 h3 l4 -4 v13 l-4 -4 h-3z" fill="none" stroke="#fff" stroke-width="1.200"/><path d="M1457 876 q2 3.500 0 7" fill="none" stroke="#fff" stroke-width="1.100"/><path d="M1460 874 q3 5.500 0 11" fill="none" stroke="#aaa" stroke-width="1"/><path d="M1463 872 q4 7.500 0 15" fill="none" stroke="#777" stroke-width="1"/>
<path d="M1557.500 871.500 h17 v13 h-11 l-3 3.500 v-3.500 h-3z" fill="#fff"/><path d="M1560 875.500 h12 M1560 878.500 h12 M1560 881.500 h8" stroke="#1b2e35" stroke-width="1"/><circle cx="1573" cy="888" r="7" fill="#1b2e35" stroke="#8a9498" stroke-width="1.200"/>
<path d="M1595.500 861 v39" stroke="#6a7a80" stroke-width="1"/>
<text x="325.0" y="883.7" font-size="12.50" fill="#fff" font-family='Liberation Sans,sans-serif' textLength="40.0" lengthAdjust="spacingAndGlyphs" >Down...</text>
<text x="538.0" y="883.7" font-size="12.50" fill="#fff" font-family='Liberation Sans,sans-serif' textLength="38.0" lengthAdjust="spacingAndGlyphs" >Calco...</text>
<text x="709.0" y="883.7" font-size="12.50" fill="#fff" font-family='Liberation Sans,sans-serif' textLength="39.0" lengthAdjust="spacingAndGlyphs" >Моди...</text>
<text x="791.0" y="883.7" font-size="12.50" fill="#fff" font-family='Liberation Sans,sans-serif' textLength="36.0" lengthAdjust="spacingAndGlyphs" >VFRA...</text>
<text x="874.0" y="883.7" font-size="12.50" fill="#fff" font-family='Liberation Sans,sans-serif' textLength="36.0" lengthAdjust="spacingAndGlyphs" >VFRA...</text>
<text x="956.0" y="883.7" font-size="12.50" fill="#fff" font-family='Liberation Sans,sans-serif' textLength="36.5" lengthAdjust="spacingAndGlyphs" >VFRA...</text>
<text x="1039.0" y="883.7" font-size="12.50" fill="#fff" font-family='Liberation Sans,sans-serif' textLength="33.5" lengthAdjust="spacingAndGlyphs" >Auto...</text>
<text x="1492.0" y="874.5" font-size="12.50" fill="#fff" font-family='Liberation Sans,sans-serif' textLength="28.5" lengthAdjust="spacingAndGlyphs" >17.34</text>
<text x="1475.0" y="893.0" font-size="12.50" fill="#fff" font-family='Liberation Sans,sans-serif' textLength="62.5" lengthAdjust="spacingAndGlyphs" >04/01/2021</text>
<text x="1570.3" y="892.0" font-size="10.50" fill="#fff" font-family='Liberation Sans,sans-serif' font-weight="bold" >3</text>
</svg>
</body></html>
